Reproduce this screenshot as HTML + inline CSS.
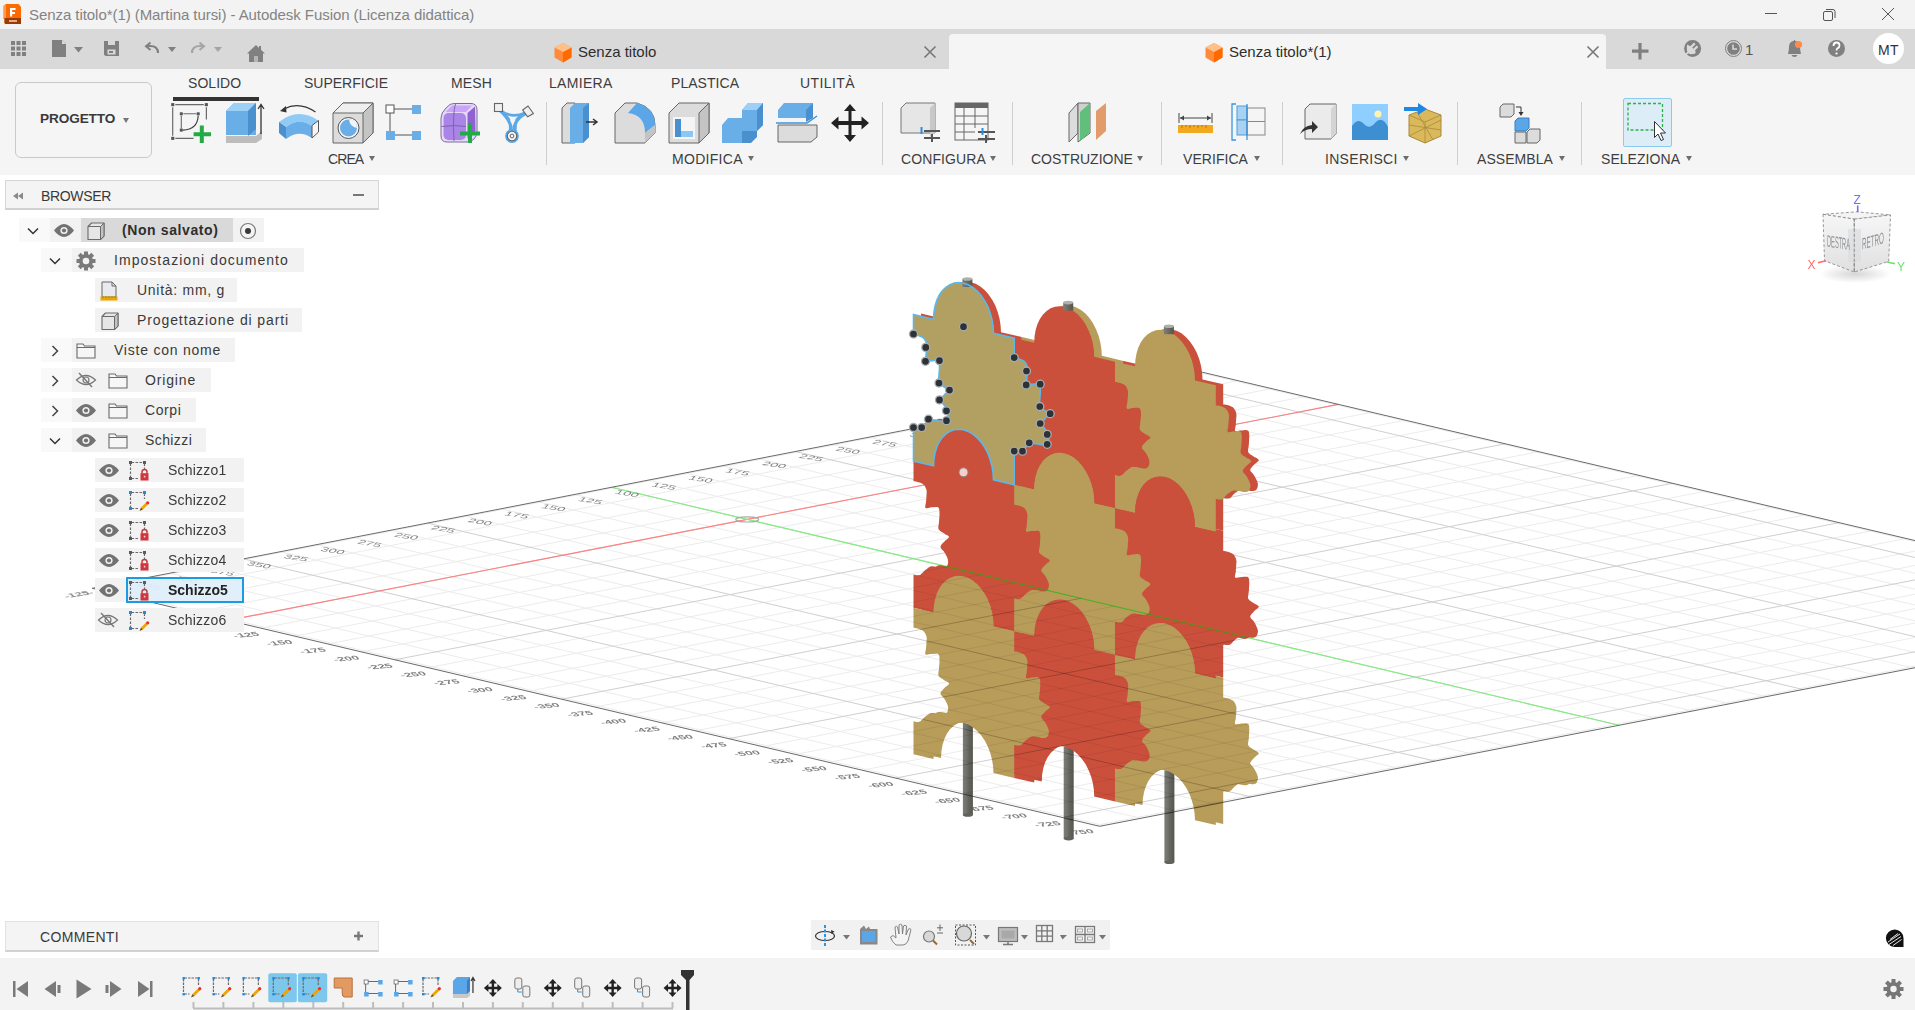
<!DOCTYPE html><html><head><meta charset="utf-8"><style>

*{box-sizing:border-box}
body{margin:0;width:1915px;height:1010px;overflow:hidden;position:relative;background:#fff;font-family:"Liberation Sans",sans-serif;color:#3c3c3c}
.a{position:absolute}
.t{position:absolute;white-space:nowrap;line-height:1}
svg{position:absolute;overflow:visible}
.lbl{position:absolute;white-space:nowrap;line-height:1;font-size:14px;color:#3d3d3d;letter-spacing:0.3px}
.tri{position:absolute;width:0;height:0;border-left:3.5px solid transparent;border-right:3.5px solid transparent;border-top:5px solid #6e6e6e}
.sep{position:absolute;width:1px;background:#cfcfcf;top:102px;height:63px}
.row{position:absolute;height:25px;background:rgba(238,238,238,0.75)}
.bt{position:absolute;white-space:nowrap;line-height:1;font-size:14px;color:#3a3a3a;letter-spacing:0.85px}

</style></head><body>
<svg style="left:0;top:0" width="1915" height="1010" viewBox="0 0 1915 1010">
<defs><clipPath id="vp"><rect x="0" y="175" width="1915" height="783"/></clipPath>
<clipPath id="below"><path d="M-1403.6 11.3L3634.2 1201.3L3634.2 1200L-1403.6 1200Z"/></clipPath>
<linearGradient id="post" x1="0" x2="1"><stop offset="0" stop-color="#7c7c76"/><stop offset="0.3" stop-color="#74746e"/><stop offset="0.55" stop-color="#66665f"/><stop offset="1" stop-color="#56564f"/></linearGradient>
</defs><g clip-path="url(#vp)">
<path d="M96.3 587.5L1103.9 825.5M133.1 580.3L1140.7 818.3M169.9 573.2L1177.5 811.2M206.7 566.0L1214.3 804.0M280.3 551.7L1287.9 789.7M317.1 544.6L1324.7 782.6M353.9 537.4L1361.5 775.4M390.7 530.2L1398.3 768.2M464.3 515.9L1471.9 753.9M501.1 508.8L1508.7 746.8M537.9 501.6L1545.5 739.6M574.7 494.5L1582.3 732.5M648.3 480.1L1655.9 718.1M685.1 473.0L1692.7 711.0M721.9 465.8L1729.5 703.8M758.7 458.7L1766.3 696.7M832.3 444.4L1839.9 682.4M869.1 437.2L1876.7 675.2M905.9 430.0L1913.5 668.0M942.7 422.9L1950.3 660.9M1016.3 408.6L2023.9 646.6M1053.1 401.4L2060.7 639.4M1089.9 394.3L2097.5 632.3M1126.7 387.1L2134.3 625.1M1200.3 372.8L2207.9 610.8M94.3 588.8L1204.8 372.9M127.7 596.7L1238.1 380.7M161.1 604.6L1271.5 388.6M194.5 612.5L1304.9 396.5M261.3 628.2L1371.7 412.3M294.6 636.1L1405.1 420.2M328.0 644.0L1438.5 428.1M361.4 651.9L1471.9 436.0M428.2 667.7L1538.7 451.7M461.6 675.6L1572.0 459.6M495.0 683.5L1605.4 467.5M528.4 691.3L1638.8 475.4M595.2 707.1L1705.6 491.2M628.5 715.0L1739.0 499.1M661.9 722.9L1772.4 506.9M695.3 730.8L1805.8 514.8M762.1 746.6L1872.6 530.6M795.5 754.4L1906.0 538.5M828.9 762.3L1939.3 546.4M862.3 770.2L1972.7 554.3M929.1 786.0L2039.5 570.0M962.5 793.9L2072.9 577.9M995.8 801.8L2106.3 585.8M1029.2 809.7L2139.7 593.7M1096.0 825.4L2206.5 609.5" stroke="#ececec" stroke-width="1" fill="none"/><path d="M243.5 558.9L1251.1 796.9M427.5 523.1L1435.1 761.1M611.5 487.3L1619.1 725.3M795.5 451.5L1803.1 689.5M979.5 415.7L1987.1 653.7M1163.5 380.0L2171.1 618.0M227.9 620.4L1338.3 404.4M394.8 659.8L1505.3 443.8M561.8 699.2L1672.2 483.3M728.7 738.7L1839.2 522.7M895.7 778.1L2006.1 562.2M1062.6 817.5L2173.1 601.6" stroke="#cfcfcf" stroke-width="1" fill="none"/>
<path d="M227.9 620.4L1338.3 404.4" stroke="#ff8080" stroke-width="1.1"/>
<path d="M611.5 487.3L1619.1 725.3" stroke="#80ee80" stroke-width="1.1"/>
<ellipse cx="747.2" cy="519.4" rx="11.5" ry="2.6" fill="none" stroke="#aaaaaa" stroke-width="1.2"/>
<path d="M92.2 588.3L1202.6 372.3L2210.2 610.3L1099.7 826.3Z" stroke="#6a6a6a" stroke-width="1" fill="none"/>
<g opacity="0.75"><text transform="matrix(1 0.16 -0.55 0.6 135.6 586.5)" font-size="9" fill="#555" font-family="Liberation Sans" textLength="23" lengthAdjust="spacingAndGlyphs">425</text><text transform="matrix(1 0.16 -0.55 0.6 172.4 579.4)" font-size="9" fill="#555" font-family="Liberation Sans" textLength="23" lengthAdjust="spacingAndGlyphs">400</text><text transform="matrix(1 0.16 -0.55 0.6 209.2 572.2)" font-size="9" fill="#555" font-family="Liberation Sans" textLength="23" lengthAdjust="spacingAndGlyphs">375</text><text transform="matrix(1 0.16 -0.55 0.6 246.0 565.1)" font-size="9" fill="#555" font-family="Liberation Sans" textLength="23" lengthAdjust="spacingAndGlyphs">350</text><text transform="matrix(1 0.16 -0.55 0.6 282.8 557.9)" font-size="9" fill="#555" font-family="Liberation Sans" textLength="23" lengthAdjust="spacingAndGlyphs">325</text><text transform="matrix(1 0.16 -0.55 0.6 319.6 550.8)" font-size="9" fill="#555" font-family="Liberation Sans" textLength="23" lengthAdjust="spacingAndGlyphs">300</text><text transform="matrix(1 0.16 -0.55 0.6 356.4 543.6)" font-size="9" fill="#555" font-family="Liberation Sans" textLength="23" lengthAdjust="spacingAndGlyphs">275</text><text transform="matrix(1 0.16 -0.55 0.6 393.2 536.4)" font-size="9" fill="#555" font-family="Liberation Sans" textLength="23" lengthAdjust="spacingAndGlyphs">250</text><text transform="matrix(1 0.16 -0.55 0.6 430.0 529.3)" font-size="9" fill="#555" font-family="Liberation Sans" textLength="23" lengthAdjust="spacingAndGlyphs">225</text><text transform="matrix(1 0.16 -0.55 0.6 466.8 522.1)" font-size="9" fill="#555" font-family="Liberation Sans" textLength="23" lengthAdjust="spacingAndGlyphs">200</text><text transform="matrix(1 0.16 -0.55 0.6 503.6 515.0)" font-size="9" fill="#555" font-family="Liberation Sans" textLength="23" lengthAdjust="spacingAndGlyphs">175</text><text transform="matrix(1 0.16 -0.55 0.6 540.4 507.8)" font-size="9" fill="#555" font-family="Liberation Sans" textLength="23" lengthAdjust="spacingAndGlyphs">150</text><text transform="matrix(1 0.16 -0.55 0.6 577.2 500.7)" font-size="9" fill="#555" font-family="Liberation Sans" textLength="23" lengthAdjust="spacingAndGlyphs">125</text><text transform="matrix(1 0.16 -0.55 0.6 614.0 493.5)" font-size="9" fill="#555" font-family="Liberation Sans" textLength="23" lengthAdjust="spacingAndGlyphs">100</text><text transform="matrix(1 0.16 -0.55 0.6 650.8 486.3)" font-size="9" fill="#555" font-family="Liberation Sans" textLength="23" lengthAdjust="spacingAndGlyphs">125</text><text transform="matrix(1 0.16 -0.55 0.6 687.6 479.2)" font-size="9" fill="#555" font-family="Liberation Sans" textLength="23" lengthAdjust="spacingAndGlyphs">150</text><text transform="matrix(1 0.16 -0.55 0.6 724.4 472.0)" font-size="9" fill="#555" font-family="Liberation Sans" textLength="23" lengthAdjust="spacingAndGlyphs">175</text><text transform="matrix(1 0.16 -0.55 0.6 761.2 464.9)" font-size="9" fill="#555" font-family="Liberation Sans" textLength="23" lengthAdjust="spacingAndGlyphs">200</text><text transform="matrix(1 0.16 -0.55 0.6 798.0 457.7)" font-size="9" fill="#555" font-family="Liberation Sans" textLength="23" lengthAdjust="spacingAndGlyphs">225</text><text transform="matrix(1 0.16 -0.55 0.6 834.8 450.6)" font-size="9" fill="#555" font-family="Liberation Sans" textLength="23" lengthAdjust="spacingAndGlyphs">250</text><text transform="matrix(1 0.16 -0.55 0.6 871.6 443.4)" font-size="9" fill="#555" font-family="Liberation Sans" textLength="23" lengthAdjust="spacingAndGlyphs">275</text><text transform="matrix(1 0.16 -0.55 0.6 908.4 436.2)" font-size="9" fill="#555" font-family="Liberation Sans" textLength="23" lengthAdjust="spacingAndGlyphs">300</text><text transform="matrix(1 0.16 -0.55 0.6 945.2 429.1)" font-size="9" fill="#555" font-family="Liberation Sans" textLength="23" lengthAdjust="spacingAndGlyphs">325</text><text transform="matrix(1 0.16 -0.55 0.6 982.0 421.9)" font-size="9" fill="#555" font-family="Liberation Sans" textLength="23" lengthAdjust="spacingAndGlyphs">350</text><text transform="matrix(1 0.16 -0.55 0.6 1018.8 414.8)" font-size="9" fill="#555" font-family="Liberation Sans" textLength="23" lengthAdjust="spacingAndGlyphs">375</text><text transform="matrix(1 0.16 -0.55 0.6 1055.6 407.6)" font-size="9" fill="#555" font-family="Liberation Sans" textLength="23" lengthAdjust="spacingAndGlyphs">400</text><text transform="matrix(1 0.16 -0.55 0.6 1092.4 400.5)" font-size="9" fill="#555" font-family="Liberation Sans" textLength="23" lengthAdjust="spacingAndGlyphs">425</text><text transform="matrix(1 0.16 -0.55 0.6 1129.2 393.3)" font-size="9" fill="#555" font-family="Liberation Sans" textLength="23" lengthAdjust="spacingAndGlyphs">450</text><text transform="matrix(1 -0.09 0.6 0.62 160.1 612.1)" text-anchor="end" font-size="9" fill="#555" font-family="Liberation Sans" font-weight="700" textLength="25" lengthAdjust="spacingAndGlyphs">-150</text><text transform="matrix(1 -0.09 0.6 0.62 193.5 620.0)" text-anchor="end" font-size="9" fill="#555" font-family="Liberation Sans" font-weight="700" textLength="25" lengthAdjust="spacingAndGlyphs">-125</text><text transform="matrix(1 -0.09 0.6 0.62 226.9 627.9)" text-anchor="end" font-size="9" fill="#555" font-family="Liberation Sans" font-weight="700" textLength="25" lengthAdjust="spacingAndGlyphs">-100</text><text transform="matrix(1 -0.09 0.6 0.62 260.3 635.7)" text-anchor="end" font-size="9" fill="#555" font-family="Liberation Sans" font-weight="700" textLength="25" lengthAdjust="spacingAndGlyphs">-125</text><text transform="matrix(1 -0.09 0.6 0.62 293.6 643.6)" text-anchor="end" font-size="9" fill="#555" font-family="Liberation Sans" font-weight="700" textLength="25" lengthAdjust="spacingAndGlyphs">-150</text><text transform="matrix(1 -0.09 0.6 0.62 327.0 651.5)" text-anchor="end" font-size="9" fill="#555" font-family="Liberation Sans" font-weight="700" textLength="25" lengthAdjust="spacingAndGlyphs">-175</text><text transform="matrix(1 -0.09 0.6 0.62 360.4 659.4)" text-anchor="end" font-size="9" fill="#555" font-family="Liberation Sans" font-weight="700" textLength="25" lengthAdjust="spacingAndGlyphs">-200</text><text transform="matrix(1 -0.09 0.6 0.62 393.8 667.3)" text-anchor="end" font-size="9" fill="#555" font-family="Liberation Sans" font-weight="700" textLength="25" lengthAdjust="spacingAndGlyphs">-225</text><text transform="matrix(1 -0.09 0.6 0.62 427.2 675.2)" text-anchor="end" font-size="9" fill="#555" font-family="Liberation Sans" font-weight="700" textLength="25" lengthAdjust="spacingAndGlyphs">-250</text><text transform="matrix(1 -0.09 0.6 0.62 460.6 683.1)" text-anchor="end" font-size="9" fill="#555" font-family="Liberation Sans" font-weight="700" textLength="25" lengthAdjust="spacingAndGlyphs">-275</text><text transform="matrix(1 -0.09 0.6 0.62 494.0 691.0)" text-anchor="end" font-size="9" fill="#555" font-family="Liberation Sans" font-weight="700" textLength="25" lengthAdjust="spacingAndGlyphs">-300</text><text transform="matrix(1 -0.09 0.6 0.62 527.4 698.8)" text-anchor="end" font-size="9" fill="#555" font-family="Liberation Sans" font-weight="700" textLength="25" lengthAdjust="spacingAndGlyphs">-325</text><text transform="matrix(1 -0.09 0.6 0.62 560.8 706.7)" text-anchor="end" font-size="9" fill="#555" font-family="Liberation Sans" font-weight="700" textLength="25" lengthAdjust="spacingAndGlyphs">-350</text><text transform="matrix(1 -0.09 0.6 0.62 594.2 714.6)" text-anchor="end" font-size="9" fill="#555" font-family="Liberation Sans" font-weight="700" textLength="25" lengthAdjust="spacingAndGlyphs">-375</text><text transform="matrix(1 -0.09 0.6 0.62 627.5 722.5)" text-anchor="end" font-size="9" fill="#555" font-family="Liberation Sans" font-weight="700" textLength="25" lengthAdjust="spacingAndGlyphs">-400</text><text transform="matrix(1 -0.09 0.6 0.62 660.9 730.4)" text-anchor="end" font-size="9" fill="#555" font-family="Liberation Sans" font-weight="700" textLength="25" lengthAdjust="spacingAndGlyphs">-425</text><text transform="matrix(1 -0.09 0.6 0.62 694.3 738.3)" text-anchor="end" font-size="9" fill="#555" font-family="Liberation Sans" font-weight="700" textLength="25" lengthAdjust="spacingAndGlyphs">-450</text><text transform="matrix(1 -0.09 0.6 0.62 727.7 746.2)" text-anchor="end" font-size="9" fill="#555" font-family="Liberation Sans" font-weight="700" textLength="25" lengthAdjust="spacingAndGlyphs">-475</text><text transform="matrix(1 -0.09 0.6 0.62 761.1 754.1)" text-anchor="end" font-size="9" fill="#555" font-family="Liberation Sans" font-weight="700" textLength="25" lengthAdjust="spacingAndGlyphs">-500</text><text transform="matrix(1 -0.09 0.6 0.62 794.5 761.9)" text-anchor="end" font-size="9" fill="#555" font-family="Liberation Sans" font-weight="700" textLength="25" lengthAdjust="spacingAndGlyphs">-525</text><text transform="matrix(1 -0.09 0.6 0.62 827.9 769.8)" text-anchor="end" font-size="9" fill="#555" font-family="Liberation Sans" font-weight="700" textLength="25" lengthAdjust="spacingAndGlyphs">-550</text><text transform="matrix(1 -0.09 0.6 0.62 861.3 777.7)" text-anchor="end" font-size="9" fill="#555" font-family="Liberation Sans" font-weight="700" textLength="25" lengthAdjust="spacingAndGlyphs">-575</text><text transform="matrix(1 -0.09 0.6 0.62 894.7 785.6)" text-anchor="end" font-size="9" fill="#555" font-family="Liberation Sans" font-weight="700" textLength="25" lengthAdjust="spacingAndGlyphs">-600</text><text transform="matrix(1 -0.09 0.6 0.62 928.1 793.5)" text-anchor="end" font-size="9" fill="#555" font-family="Liberation Sans" font-weight="700" textLength="25" lengthAdjust="spacingAndGlyphs">-625</text><text transform="matrix(1 -0.09 0.6 0.62 961.5 801.4)" text-anchor="end" font-size="9" fill="#555" font-family="Liberation Sans" font-weight="700" textLength="25" lengthAdjust="spacingAndGlyphs">-650</text><text transform="matrix(1 -0.09 0.6 0.62 994.8 809.3)" text-anchor="end" font-size="9" fill="#555" font-family="Liberation Sans" font-weight="700" textLength="25" lengthAdjust="spacingAndGlyphs">-675</text><text transform="matrix(1 -0.09 0.6 0.62 1028.2 817.2)" text-anchor="end" font-size="9" fill="#555" font-family="Liberation Sans" font-weight="700" textLength="25" lengthAdjust="spacingAndGlyphs">-700</text><text transform="matrix(1 -0.09 0.6 0.62 1061.6 825.0)" text-anchor="end" font-size="9" fill="#555" font-family="Liberation Sans" font-weight="700" textLength="25" lengthAdjust="spacingAndGlyphs">-725</text><text transform="matrix(1 -0.09 0.6 0.62 1095.0 832.9)" text-anchor="end" font-size="9" fill="#555" font-family="Liberation Sans" font-weight="700" textLength="25" lengthAdjust="spacingAndGlyphs">-750</text><text transform="matrix(1 -0.16 0.55 0.6 94 593.5)" text-anchor="end" font-size="9" fill="#555" font-family="Liberation Sans" font-weight="700" textLength="28" lengthAdjust="spacingAndGlyphs">-125-</text></g>
<rect x="962.9" y="723.0" width="10" height="92" fill="url(#post)"/><ellipse cx="967.9" cy="815.0" rx="5" ry="1.8" fill="#62625c"/>
<rect x="1063.7" y="746.6" width="10" height="92" fill="url(#post)"/><ellipse cx="1068.7" cy="838.6" rx="5" ry="1.8" fill="#62625c"/>
<rect x="1164.4" y="770.2" width="10" height="92" fill="url(#post)"/><ellipse cx="1169.4" cy="862.2" rx="5" ry="1.8" fill="#62625c"/>
<path d="M921.0 313.5L941.0 318.2L941.4 311.5L942.5 305.2L944.3 299.4L946.7 294.2L949.8 289.8L953.4 286.3L957.4 283.7L961.7 282.1L966.3 281.6L971.0 282.2L975.7 283.8L980.3 286.5L984.6 290.1L988.6 294.5L992.2 299.8L995.3 305.6L997.7 311.9L999.5 318.6L1000.6 325.4L1001.0 332.2L1021.8 337.1L1021.8 357.1L1022.4 357.2L1023.4 357.4L1024.5 357.6L1025.6 357.9L1026.8 358.2L1027.8 358.5L1028.6 358.8L1029.4 359.2L1030.2 359.5L1031.0 360.0L1031.6 360.4L1032.2 361.0L1032.8 361.7L1033.3 362.5L1033.8 363.4L1034.2 364.3L1034.5 365.2L1034.8 366.1L1034.9 366.9L1035.0 367.7L1034.9 368.5L1034.9 369.3L1034.8 370.2L1034.8 371.1L1034.7 372.2L1034.6 373.3L1034.5 374.5L1034.4 375.7L1034.3 376.9L1034.2 378.0L1034.1 379.1L1033.8 380.3L1033.6 381.4L1033.4 382.4L1033.5 383.3L1033.8 383.9L1034.4 384.2L1035.2 384.1L1036.3 384.0L1037.5 383.7L1038.6 383.4L1039.8 383.3L1040.9 383.2L1042.1 383.1L1043.3 383.0L1044.4 382.9L1045.5 383.0L1046.2 383.3L1046.8 383.8L1047.2 384.4L1047.4 385.1L1047.6 386.0L1047.7 387.0L1047.8 388.2L1047.8 389.6L1047.7 391.2L1047.6 393.0L1047.5 394.8L1047.4 396.5L1047.2 398.0L1047.1 399.4L1046.9 400.7L1046.7 401.8L1046.5 402.9L1046.5 404.0L1046.8 404.9L1047.3 405.8L1048.0 406.5L1048.9 407.2L1049.8 407.8L1050.8 408.5L1051.8 409.1L1052.8 409.7L1053.9 410.4L1055.1 411.0L1056.1 411.6L1056.9 412.2L1057.2 412.9L1057.1 413.6L1056.5 414.3L1055.6 415.0L1054.6 415.7L1053.6 416.5L1052.8 417.3L1052.0 418.2L1051.1 419.1L1050.2 420.0L1049.5 421.0L1048.9 422.0L1048.8 422.9L1049.0 423.8L1049.5 424.6L1050.3 425.5L1051.2 426.3L1052.0 427.3L1052.8 428.3L1053.4 429.5L1054.1 430.8L1054.8 432.2L1055.4 433.6L1055.9 434.9L1056.2 436.1L1056.4 437.3L1056.4 438.4L1056.2 439.4L1056.0 440.3L1055.6 441.2L1055.2 441.9L1054.8 442.5L1054.3 443.0L1053.7 443.4L1053.0 443.7L1052.2 443.9L1051.2 444.0L1050.2 443.9L1048.9 443.8L1047.6 443.5L1046.2 443.2L1044.9 442.9L1043.8 442.7L1042.8 442.6L1041.9 442.4L1041.2 442.3L1040.4 442.3L1039.6 442.3L1038.8 442.6L1037.8 443.0L1036.8 443.6L1035.7 444.3L1034.6 445.1L1033.6 445.9L1032.8 446.6L1032.0 447.4L1031.3 448.1L1030.6 448.9L1030.0 449.6L1029.4 450.2L1028.8 450.7L1028.1 451.0L1027.4 451.2L1026.7 451.3L1026.0 451.3L1025.4 451.3L1024.8 451.3L1024.2 451.2L1023.6 451.1L1023.0 451.0L1022.5 450.8L1022.1 450.7L1021.8 450.6L1021.8 483.7L1001.0 478.8L1000.6 472.0L999.5 465.2L997.7 458.5L995.3 452.2L992.2 446.4L988.6 441.1L984.6 436.7L980.3 433.1L975.7 430.4L971.0 428.8L966.3 428.2L961.7 428.7L957.4 430.3L953.4 432.9L949.8 436.4L946.7 440.8L944.3 446.0L942.5 451.8L941.4 458.1L941.0 464.8L921.0 460.1L921.0 427.0L921.3 427.1L921.7 427.2L922.2 427.4L922.8 427.5L923.4 427.7L924.0 427.7L924.6 427.7L925.3 427.7L925.9 427.7L926.6 427.6L927.3 427.4L928.0 427.1L928.6 426.7L929.3 426.0L929.9 425.3L930.5 424.6L931.2 423.8L932.0 423.1L932.9 422.3L933.9 421.6L934.9 420.8L936.0 420.0L937.0 419.4L938.0 419.0L938.9 418.7L939.6 418.7L940.4 418.7L941.2 418.9L942.0 419.0L943.0 419.1L944.1 419.3L945.4 419.6L946.8 419.9L948.2 420.2L949.4 420.4L950.5 420.4L951.4 420.3L952.2 420.1L952.9 419.8L953.5 419.4L954.0 418.9L954.5 418.3L954.9 417.6L955.2 416.8L955.5 415.8L955.6 414.8L955.6 413.7L955.5 412.6L955.2 411.4L954.7 410.0L954.1 408.6L953.4 407.3L952.7 405.9L952.0 404.8L951.3 403.7L950.4 402.8L949.5 401.9L948.8 401.1L948.2 400.2L948.0 399.3L948.2 398.4L948.7 397.4L949.5 396.5L950.3 395.5L951.2 394.6L952.0 393.8L952.8 392.9L953.8 392.2L954.8 391.4L955.7 390.7L956.3 390.0L956.5 389.3L956.2 388.6L955.4 388.0L954.3 387.4L953.2 386.8L952.0 386.2L951.0 385.5L950.1 384.9L949.1 384.3L948.1 383.6L947.2 383.0L946.5 382.2L946.0 381.4L945.8 380.4L945.8 379.4L945.9 378.3L946.1 377.1L946.4 375.8L946.5 374.5L946.6 372.9L946.7 371.2L946.9 369.4L947.0 367.6L947.0 366.0L947.0 364.6L946.9 363.4L946.8 362.4L946.7 361.5L946.4 360.8L946.1 360.2L945.5 359.7L944.7 359.4L943.7 359.3L942.5 359.4L941.3 359.5L940.1 359.6L939.0 359.7L937.9 359.9L936.7 360.1L935.6 360.4L934.5 360.6L933.6 360.6L933.0 360.3L932.7 359.7L932.7 358.9L932.8 357.8L933.1 356.7L933.3 355.5L933.5 354.4L933.6 353.3L933.7 352.1L933.8 350.9L933.9 349.7L933.9 348.6L934.0 347.5L934.1 346.6L934.1 345.7L934.2 344.9L934.2 344.1L934.2 343.4L934.0 342.5L933.8 341.7L933.4 340.8L933.0 339.8L932.6 339.0L932.1 338.2L931.5 337.5L930.9 336.9L930.2 336.4L929.5 336.0L928.7 335.6L927.9 335.2L927.0 334.9L926.0 334.6L924.9 334.3L923.7 334.0L922.6 333.8L921.7 333.6L921.0 333.5L921.0 313.5Z" fill="#cb503c"/>
<path d="M921.0 460.1L941.0 464.8L941.4 458.1L942.5 451.8L944.3 446.0L946.7 440.8L949.8 436.4L953.4 432.9L957.4 430.3L961.7 428.7L966.3 428.2L971.0 428.8L975.7 430.4L980.3 433.1L984.6 436.7L988.6 441.1L992.2 446.4L995.3 452.2L997.7 458.5L999.5 465.2L1000.6 472.0L1001.0 478.8L1021.8 483.7L1021.8 503.7L1022.4 503.8L1023.4 504.0L1024.5 504.2L1025.6 504.5L1026.8 504.8L1027.8 505.1L1028.6 505.4L1029.4 505.8L1030.2 506.1L1031.0 506.6L1031.6 507.0L1032.2 507.6L1032.8 508.3L1033.3 509.1L1033.8 510.0L1034.2 510.9L1034.5 511.8L1034.8 512.7L1034.9 513.5L1035.0 514.3L1034.9 515.1L1034.9 515.9L1034.8 516.8L1034.8 517.7L1034.7 518.8L1034.6 519.9L1034.5 521.1L1034.4 522.3L1034.3 523.5L1034.2 524.6L1034.1 525.7L1033.8 526.9L1033.6 528.0L1033.4 529.0L1033.5 529.9L1033.8 530.5L1034.4 530.8L1035.2 530.7L1036.3 530.6L1037.5 530.3L1038.6 530.0L1039.8 529.9L1040.9 529.8L1042.1 529.7L1043.3 529.6L1044.4 529.5L1045.5 529.6L1046.2 529.9L1046.8 530.4L1047.2 531.0L1047.4 531.7L1047.6 532.6L1047.7 533.6L1047.8 534.8L1047.8 536.2L1047.7 537.8L1047.6 539.6L1047.5 541.4L1047.4 543.1L1047.2 544.6L1047.1 546.0L1046.9 547.3L1046.7 548.4L1046.5 549.5L1046.5 550.6L1046.8 551.5L1047.3 552.4L1048.0 553.1L1048.9 553.8L1049.8 554.4L1050.8 555.1L1051.8 555.7L1052.8 556.3L1053.9 557.0L1055.1 557.6L1056.1 558.2L1056.9 558.8L1057.2 559.5L1057.1 560.2L1056.5 560.9L1055.6 561.6L1054.6 562.3L1053.6 563.1L1052.8 563.9L1052.0 564.8L1051.1 565.7L1050.2 566.6L1049.5 567.6L1048.9 568.6L1048.8 569.5L1049.0 570.4L1049.5 571.2L1050.3 572.1L1051.2 572.9L1052.0 573.9L1052.8 574.9L1053.4 576.1L1054.1 577.4L1054.8 578.8L1055.4 580.2L1055.9 581.5L1056.2 582.7L1056.4 583.9L1056.4 585.0L1056.2 586.0L1056.0 586.9L1055.6 587.8L1055.2 588.5L1054.8 589.1L1054.3 589.6L1053.7 590.0L1053.0 590.3L1052.2 590.5L1051.2 590.6L1050.2 590.5L1048.9 590.4L1047.6 590.1L1046.2 589.8L1044.9 589.5L1043.8 589.3L1042.8 589.2L1041.9 589.0L1041.2 588.9L1040.4 588.9L1039.6 588.9L1038.8 589.2L1037.8 589.6L1036.8 590.2L1035.7 590.9L1034.6 591.7L1033.6 592.5L1032.8 593.2L1032.0 594.0L1031.3 594.7L1030.6 595.5L1030.0 596.2L1029.4 596.8L1028.8 597.3L1028.1 597.6L1027.4 597.8L1026.7 597.9L1026.0 597.9L1025.4 597.9L1024.8 597.9L1024.2 597.8L1023.6 597.7L1023.0 597.6L1022.5 597.4L1022.1 597.3L1021.8 597.2L1021.8 630.3L1001.0 625.4L1000.6 618.6L999.5 611.8L997.7 605.1L995.3 598.8L992.2 593.0L988.6 587.7L984.6 583.3L980.3 579.7L975.7 577.0L971.0 575.4L966.3 574.8L961.7 575.3L957.4 576.9L953.4 579.5L949.8 583.0L946.7 587.4L944.3 592.6L942.5 598.4L941.4 604.7L941.0 611.4L921.0 606.7L921.0 573.6L921.3 573.7L921.7 573.8L922.2 574.0L922.8 574.1L923.4 574.3L924.0 574.3L924.6 574.3L925.3 574.3L925.9 574.3L926.6 574.2L927.3 574.0L928.0 573.7L928.6 573.3L929.3 572.6L929.9 571.9L930.5 571.2L931.2 570.4L932.0 569.7L932.9 568.9L933.9 568.2L934.9 567.4L936.0 566.6L937.0 566.0L938.0 565.6L938.9 565.3L939.6 565.3L940.4 565.3L941.2 565.5L942.0 565.6L943.0 565.7L944.1 565.9L945.4 566.2L946.8 566.5L948.2 566.8L949.4 567.0L950.5 567.0L951.4 566.9L952.2 566.7L952.9 566.4L953.5 566.0L954.0 565.5L954.5 564.9L954.9 564.2L955.2 563.4L955.5 562.4L955.6 561.4L955.6 560.3L955.5 559.2L955.2 558.0L954.7 556.6L954.1 555.2L953.4 553.9L952.7 552.5L952.0 551.4L951.3 550.3L950.4 549.4L949.5 548.5L948.8 547.7L948.2 546.8L948.0 545.9L948.2 545.0L948.7 544.0L949.5 543.1L950.3 542.1L951.2 541.2L952.0 540.4L952.8 539.5L953.8 538.8L954.8 538.0L955.7 537.3L956.3 536.6L956.5 535.9L956.2 535.2L955.4 534.6L954.3 534.0L953.2 533.4L952.0 532.8L951.0 532.1L950.1 531.5L949.1 530.9L948.1 530.2L947.2 529.6L946.5 528.8L946.0 528.0L945.8 527.0L945.8 526.0L945.9 524.9L946.1 523.7L946.4 522.4L946.5 521.1L946.6 519.5L946.7 517.8L946.9 516.0L947.0 514.2L947.0 512.6L947.0 511.2L946.9 510.0L946.8 509.0L946.7 508.1L946.4 507.4L946.1 506.8L945.5 506.3L944.7 506.0L943.7 505.9L942.5 506.0L941.3 506.1L940.1 506.2L939.0 506.3L937.9 506.5L936.7 506.7L935.6 507.0L934.5 507.2L933.6 507.2L933.0 506.9L932.7 506.3L932.7 505.5L932.8 504.4L933.1 503.3L933.3 502.1L933.5 501.0L933.6 499.9L933.7 498.7L933.8 497.5L933.9 496.3L933.9 495.2L934.0 494.1L934.1 493.2L934.1 492.3L934.2 491.5L934.2 490.7L934.2 490.0L934.0 489.1L933.8 488.3L933.4 487.4L933.0 486.4L932.6 485.6L932.1 484.8L931.5 484.1L930.9 483.5L930.2 483.0L929.5 482.6L928.7 482.2L927.9 481.8L927.0 481.5L926.0 481.2L924.9 480.9L923.7 480.6L922.6 480.4L921.7 480.2L921.0 480.1L921.0 460.1Z" fill="#cb503c"/>
<path d="M921.0 606.7L941.0 611.4L941.4 604.7L942.5 598.4L944.3 592.6L946.7 587.4L949.8 583.0L953.4 579.5L957.4 576.9L961.7 575.3L966.3 574.8L971.0 575.4L975.7 577.0L980.3 579.7L984.6 583.3L988.6 587.7L992.2 593.0L995.3 598.8L997.7 605.1L999.5 611.8L1000.6 618.6L1001.0 625.4L1021.8 630.3L1021.8 650.3L1022.4 650.4L1023.4 650.6L1024.5 650.8L1025.6 651.1L1026.8 651.4L1027.8 651.7L1028.6 652.0L1029.4 652.4L1030.2 652.7L1031.0 653.2L1031.6 653.6L1032.2 654.2L1032.8 654.9L1033.3 655.7L1033.8 656.6L1034.2 657.5L1034.5 658.4L1034.8 659.3L1034.9 660.1L1035.0 660.9L1034.9 661.7L1034.9 662.5L1034.8 663.4L1034.8 664.3L1034.7 665.4L1034.6 666.5L1034.5 667.7L1034.4 668.9L1034.3 670.1L1034.2 671.2L1034.1 672.3L1033.8 673.5L1033.6 674.6L1033.4 675.6L1033.5 676.5L1033.8 677.1L1034.4 677.4L1035.2 677.3L1036.3 677.2L1037.5 676.9L1038.6 676.6L1039.8 676.5L1040.9 676.4L1042.1 676.3L1043.3 676.2L1044.4 676.1L1045.5 676.2L1046.2 676.5L1046.8 677.0L1047.2 677.6L1047.4 678.3L1047.6 679.2L1047.7 680.2L1047.8 681.4L1047.8 682.8L1047.7 684.4L1047.6 686.2L1047.5 688.0L1047.4 689.7L1047.2 691.2L1047.1 692.6L1046.9 693.9L1046.7 695.0L1046.5 696.1L1046.5 697.2L1046.8 698.1L1047.3 699.0L1048.0 699.7L1048.9 700.4L1049.8 701.0L1050.8 701.7L1051.8 702.3L1052.8 702.9L1053.9 703.6L1055.1 704.2L1056.1 704.8L1056.9 705.4L1057.2 706.1L1057.1 706.8L1056.5 707.5L1055.6 708.2L1054.6 708.9L1053.6 709.7L1052.8 710.5L1052.0 711.4L1051.1 712.3L1050.2 713.2L1049.5 714.2L1048.9 715.2L1048.8 716.1L1049.0 717.0L1049.5 717.8L1050.3 718.7L1051.2 719.5L1052.0 720.5L1052.8 721.5L1053.4 722.7L1054.1 724.0L1054.8 725.4L1055.4 726.8L1055.9 728.1L1056.2 729.3L1056.4 730.5L1056.4 731.6L1056.2 732.6L1056.0 733.5L1055.6 734.4L1055.2 735.1L1054.8 735.7L1054.3 736.2L1053.7 736.6L1053.0 736.9L1052.2 737.1L1051.2 737.2L1050.2 737.1L1048.9 737.0L1047.6 736.7L1046.2 736.4L1044.9 736.1L1043.8 735.9L1042.8 735.8L1041.9 735.6L1041.2 735.5L1040.4 735.5L1039.6 735.5L1038.8 735.8L1037.8 736.2L1036.8 736.8L1035.7 737.5L1034.6 738.3L1033.6 739.1L1032.8 739.8L1032.0 740.6L1031.3 741.3L1030.6 742.1L1030.0 742.8L1029.4 743.4L1028.8 743.9L1028.1 744.2L1027.4 744.4L1026.7 744.5L1026.0 744.5L1025.4 744.5L1024.8 744.5L1024.2 744.4L1023.6 744.3L1023.0 744.2L1022.5 744.0L1022.1 743.9L1021.8 743.8L1021.8 776.9L1001.0 772.0L1000.6 765.2L999.5 758.4L997.7 751.7L995.3 745.4L992.2 739.6L988.6 734.3L984.6 729.9L980.3 726.3L975.7 723.6L971.0 722.0L966.3 721.4L961.7 721.9L957.4 723.5L953.4 726.1L949.8 729.6L946.7 734.0L944.3 739.2L942.5 745.0L941.4 751.3L941.0 758.0L921.0 753.3L921.0 720.2L921.3 720.3L921.7 720.4L922.2 720.6L922.8 720.7L923.4 720.9L924.0 720.9L924.6 720.9L925.3 720.9L925.9 720.9L926.6 720.8L927.3 720.6L928.0 720.3L928.6 719.9L929.3 719.2L929.9 718.5L930.5 717.8L931.2 717.0L932.0 716.3L932.9 715.5L933.9 714.8L934.9 714.0L936.0 713.2L937.0 712.6L938.0 712.2L938.9 711.9L939.6 711.9L940.4 711.9L941.2 712.1L942.0 712.2L943.0 712.3L944.1 712.5L945.4 712.8L946.8 713.1L948.2 713.4L949.4 713.6L950.5 713.6L951.4 713.5L952.2 713.3L952.9 713.0L953.5 712.6L954.0 712.1L954.5 711.5L954.9 710.8L955.2 710.0L955.5 709.0L955.6 708.0L955.6 706.9L955.5 705.8L955.2 704.6L954.7 703.2L954.1 701.8L953.4 700.5L952.7 699.1L952.0 698.0L951.3 696.9L950.4 696.0L949.5 695.1L948.8 694.3L948.2 693.4L948.0 692.5L948.2 691.6L948.7 690.6L949.5 689.7L950.3 688.7L951.2 687.8L952.0 687.0L952.8 686.1L953.8 685.4L954.8 684.6L955.7 683.9L956.3 683.2L956.5 682.5L956.2 681.8L955.4 681.2L954.3 680.6L953.2 680.0L952.0 679.4L951.0 678.7L950.1 678.1L949.1 677.5L948.1 676.8L947.2 676.2L946.5 675.4L946.0 674.5L945.8 673.6L945.8 672.6L945.9 671.5L946.1 670.3L946.4 669.0L946.5 667.7L946.6 666.1L946.7 664.4L946.9 662.6L947.0 660.8L947.0 659.2L947.0 657.8L946.9 656.6L946.8 655.6L946.7 654.7L946.4 654.0L946.1 653.4L945.5 652.9L944.7 652.6L943.7 652.5L942.5 652.6L941.3 652.7L940.1 652.8L939.0 652.9L937.9 653.1L936.7 653.3L935.6 653.6L934.5 653.8L933.6 653.8L933.0 653.5L932.7 652.9L932.7 652.1L932.8 651.0L933.1 649.9L933.3 648.7L933.5 647.6L933.6 646.5L933.7 645.3L933.8 644.1L933.9 642.9L933.9 641.8L934.0 640.7L934.1 639.8L934.1 638.9L934.2 638.1L934.2 637.3L934.2 636.6L934.0 635.7L933.8 634.9L933.4 634.0L933.0 633.0L932.6 632.2L932.1 631.4L931.5 630.7L930.9 630.1L930.2 629.6L929.5 629.2L928.7 628.8L927.9 628.4L927.0 628.1L926.0 627.8L924.9 627.5L923.7 627.2L922.6 627.0L921.7 626.8L921.0 626.7L921.0 606.7Z" fill="#b89c59"/>
<path d="M1021.8 337.1L1041.8 341.8L1042.1 335.1L1043.2 328.8L1045.0 323.0L1047.5 317.8L1050.5 313.4L1054.1 309.9L1058.1 307.3L1062.5 305.7L1067.1 305.2L1071.8 305.8L1076.4 307.4L1081.0 310.0L1085.4 313.6L1089.4 318.1L1093.0 323.3L1096.0 329.2L1098.5 335.5L1100.3 342.2L1101.4 349.0L1101.8 355.8L1122.5 360.7L1122.5 380.7L1123.2 380.8L1124.1 381.0L1125.2 381.2L1126.4 381.4L1127.5 381.7L1128.5 382.1L1129.4 382.4L1130.2 382.7L1131.0 383.1L1131.7 383.5L1132.4 384.0L1133.0 384.6L1133.6 385.3L1134.1 386.1L1134.5 387.0L1134.9 387.9L1135.3 388.8L1135.5 389.7L1135.7 390.5L1135.7 391.3L1135.7 392.1L1135.6 392.9L1135.6 393.8L1135.5 394.7L1135.4 395.7L1135.4 396.9L1135.3 398.1L1135.2 399.3L1135.1 400.5L1135.0 401.6L1134.8 402.7L1134.6 403.9L1134.3 405.0L1134.2 406.0L1134.2 406.9L1134.5 407.5L1135.1 407.7L1136.0 407.7L1137.1 407.5L1138.2 407.3L1139.4 407.0L1140.5 406.9L1141.6 406.8L1142.8 406.6L1144.0 406.5L1145.2 406.5L1146.2 406.6L1147.0 406.9L1147.6 407.4L1147.9 408.0L1148.2 408.7L1148.3 409.6L1148.4 410.6L1148.5 411.7L1148.5 413.1L1148.5 414.8L1148.4 416.5L1148.2 418.4L1148.1 420.1L1148.0 421.6L1147.9 423.0L1147.6 424.2L1147.4 425.4L1147.3 426.5L1147.3 427.5L1147.5 428.5L1148.0 429.4L1148.7 430.1L1149.6 430.8L1150.6 431.4L1151.6 432.0L1152.5 432.7L1153.5 433.3L1154.7 433.9L1155.8 434.5L1156.9 435.2L1157.7 435.8L1158.0 436.5L1157.8 437.1L1157.2 437.9L1156.3 438.6L1155.3 439.3L1154.3 440.1L1153.5 440.9L1152.7 441.8L1151.8 442.7L1151.0 443.6L1150.2 444.6L1149.7 445.5L1149.5 446.5L1149.7 447.4L1150.3 448.2L1151.0 449.0L1151.9 449.9L1152.8 450.9L1153.5 451.9L1154.2 453.1L1154.9 454.4L1155.6 455.8L1156.2 457.2L1156.7 458.5L1157.0 459.7L1157.1 460.8L1157.1 461.9L1157.0 463.0L1156.7 463.9L1156.4 464.8L1156.0 465.5L1155.5 466.1L1155.0 466.6L1154.4 467.0L1153.7 467.2L1152.9 467.4L1152.0 467.6L1150.9 467.5L1149.7 467.3L1148.3 467.1L1146.9 466.8L1145.6 466.5L1144.5 466.3L1143.5 466.2L1142.7 466.0L1141.9 465.9L1141.1 465.8L1140.4 465.9L1139.5 466.1L1138.5 466.6L1137.5 467.2L1136.4 467.9L1135.4 468.7L1134.4 469.5L1133.5 470.2L1132.7 470.9L1132.0 471.7L1131.4 472.5L1130.8 473.2L1130.1 473.8L1129.5 474.3L1128.8 474.6L1128.1 474.8L1127.4 474.9L1126.8 474.9L1126.1 474.9L1125.5 474.9L1124.9 474.8L1124.3 474.7L1123.8 474.5L1123.2 474.4L1122.8 474.2L1122.5 474.2L1122.5 507.3L1101.8 502.4L1101.4 495.6L1100.3 488.8L1098.5 482.1L1096.0 475.8L1093.0 469.9L1089.4 464.7L1085.4 460.2L1081.0 456.6L1076.4 454.0L1071.8 452.4L1067.1 451.8L1062.5 452.3L1058.1 453.9L1054.1 456.5L1050.5 460.0L1047.5 464.4L1045.0 469.6L1043.2 475.4L1042.1 481.7L1041.8 488.4L1021.8 483.7L1021.8 450.6L1022.1 450.7L1022.5 450.8L1023.0 451.0L1023.6 451.1L1024.2 451.2L1024.8 451.3L1025.4 451.3L1026.0 451.3L1026.7 451.3L1027.4 451.2L1028.1 451.0L1028.8 450.7L1029.4 450.2L1030.0 449.6L1030.6 448.9L1031.3 448.1L1032.0 447.4L1032.8 446.6L1033.6 445.9L1034.6 445.1L1035.7 444.3L1036.8 443.6L1037.8 443.0L1038.8 442.6L1039.6 442.3L1040.4 442.3L1041.2 442.3L1041.9 442.4L1042.8 442.6L1043.8 442.7L1044.9 442.9L1046.2 443.2L1047.6 443.5L1048.9 443.8L1050.2 443.9L1051.2 444.0L1052.2 443.9L1053.0 443.7L1053.7 443.4L1054.3 443.0L1054.8 442.5L1055.2 441.9L1055.6 441.2L1056.0 440.3L1056.2 439.4L1056.4 438.4L1056.4 437.3L1056.2 436.1L1055.9 434.9L1055.4 433.6L1054.8 432.2L1054.1 430.8L1053.4 429.5L1052.8 428.3L1052.0 427.3L1051.2 426.3L1050.3 425.5L1049.5 424.6L1049.0 423.8L1048.8 422.9L1048.9 422.0L1049.5 421.0L1050.2 420.0L1051.1 419.1L1052.0 418.2L1052.8 417.3L1053.6 416.5L1054.6 415.7L1055.6 415.0L1056.5 414.3L1057.1 413.6L1057.2 412.9L1056.9 412.2L1056.1 411.6L1055.1 411.0L1053.9 410.4L1052.8 409.7L1051.8 409.1L1050.8 408.5L1049.8 407.8L1048.9 407.2L1048.0 406.5L1047.3 405.8L1046.8 404.9L1046.5 404.0L1046.5 402.9L1046.7 401.8L1046.9 400.7L1047.1 399.4L1047.2 398.0L1047.4 396.5L1047.5 394.8L1047.6 393.0L1047.7 391.2L1047.8 389.6L1047.8 388.2L1047.7 387.0L1047.6 386.0L1047.4 385.1L1047.2 384.4L1046.8 383.8L1046.2 383.3L1045.5 383.0L1044.4 382.9L1043.3 383.0L1042.1 383.1L1040.9 383.2L1039.8 383.3L1038.6 383.4L1037.5 383.7L1036.3 384.0L1035.2 384.1L1034.4 384.2L1033.8 383.9L1033.5 383.3L1033.4 382.4L1033.6 381.4L1033.8 380.3L1034.1 379.1L1034.2 378.0L1034.3 376.9L1034.4 375.7L1034.5 374.5L1034.6 373.3L1034.7 372.2L1034.8 371.1L1034.8 370.2L1034.9 369.3L1034.9 368.5L1035.0 367.7L1034.9 366.9L1034.8 366.1L1034.5 365.2L1034.2 364.3L1033.8 363.4L1033.3 362.5L1032.8 361.7L1032.2 361.0L1031.6 360.4L1031.0 360.0L1030.2 359.5L1029.4 359.2L1028.6 358.8L1027.8 358.5L1026.8 358.2L1025.6 357.9L1024.5 357.6L1023.4 357.4L1022.4 357.2L1021.8 357.1L1021.8 337.1Z" fill="#b89c59"/>
<path d="M1021.8 483.7L1041.8 488.4L1042.1 481.7L1043.2 475.4L1045.0 469.6L1047.5 464.4L1050.5 460.0L1054.1 456.5L1058.1 453.9L1062.5 452.3L1067.1 451.8L1071.8 452.4L1076.4 454.0L1081.0 456.6L1085.4 460.2L1089.4 464.7L1093.0 469.9L1096.0 475.8L1098.5 482.1L1100.3 488.8L1101.4 495.6L1101.8 502.4L1122.5 507.3L1122.5 527.3L1123.2 527.4L1124.1 527.6L1125.2 527.8L1126.4 528.0L1127.5 528.3L1128.5 528.7L1129.4 529.0L1130.2 529.3L1131.0 529.7L1131.7 530.1L1132.4 530.6L1133.0 531.2L1133.6 531.9L1134.1 532.7L1134.5 533.6L1134.9 534.5L1135.3 535.4L1135.5 536.3L1135.7 537.1L1135.7 537.9L1135.7 538.7L1135.6 539.5L1135.6 540.4L1135.5 541.3L1135.4 542.3L1135.4 543.5L1135.3 544.7L1135.2 545.9L1135.1 547.1L1135.0 548.2L1134.8 549.3L1134.6 550.5L1134.3 551.6L1134.2 552.6L1134.2 553.5L1134.5 554.1L1135.1 554.3L1136.0 554.3L1137.1 554.1L1138.2 553.9L1139.4 553.6L1140.5 553.5L1141.6 553.4L1142.8 553.2L1144.0 553.1L1145.2 553.1L1146.2 553.2L1147.0 553.5L1147.6 554.0L1147.9 554.6L1148.2 555.3L1148.3 556.2L1148.4 557.2L1148.5 558.3L1148.5 559.7L1148.5 561.4L1148.4 563.1L1148.2 565.0L1148.1 566.7L1148.0 568.2L1147.9 569.6L1147.6 570.8L1147.4 572.0L1147.3 573.1L1147.3 574.1L1147.5 575.1L1148.0 576.0L1148.7 576.7L1149.6 577.4L1150.6 578.0L1151.6 578.6L1152.5 579.3L1153.5 579.9L1154.7 580.5L1155.8 581.1L1156.9 581.8L1157.7 582.4L1158.0 583.1L1157.8 583.7L1157.2 584.5L1156.3 585.2L1155.3 585.9L1154.3 586.7L1153.5 587.5L1152.7 588.4L1151.8 589.3L1151.0 590.2L1150.2 591.2L1149.7 592.1L1149.5 593.1L1149.7 594.0L1150.3 594.8L1151.0 595.6L1151.9 596.5L1152.8 597.5L1153.5 598.5L1154.2 599.7L1154.9 601.0L1155.6 602.4L1156.2 603.8L1156.7 605.1L1157.0 606.3L1157.1 607.4L1157.1 608.5L1157.0 609.6L1156.7 610.5L1156.4 611.4L1156.0 612.1L1155.5 612.7L1155.0 613.2L1154.4 613.6L1153.7 613.8L1152.9 614.0L1152.0 614.2L1150.9 614.1L1149.7 613.9L1148.3 613.7L1146.9 613.4L1145.6 613.1L1144.5 612.9L1143.5 612.8L1142.7 612.6L1141.9 612.5L1141.1 612.4L1140.4 612.5L1139.5 612.7L1138.5 613.2L1137.5 613.8L1136.4 614.5L1135.4 615.3L1134.4 616.1L1133.5 616.8L1132.7 617.5L1132.0 618.3L1131.4 619.1L1130.8 619.8L1130.1 620.4L1129.5 620.9L1128.8 621.2L1128.1 621.4L1127.4 621.5L1126.8 621.5L1126.1 621.5L1125.5 621.5L1124.9 621.4L1124.3 621.3L1123.8 621.1L1123.2 621.0L1122.8 620.8L1122.5 620.8L1122.5 653.9L1101.8 649.0L1101.4 642.2L1100.3 635.4L1098.5 628.7L1096.0 622.4L1093.0 616.5L1089.4 611.3L1085.4 606.8L1081.0 603.2L1076.4 600.6L1071.8 599.0L1067.1 598.4L1062.5 598.9L1058.1 600.5L1054.1 603.1L1050.5 606.6L1047.5 611.0L1045.0 616.2L1043.2 622.0L1042.1 628.3L1041.8 635.0L1021.8 630.3L1021.8 597.2L1022.1 597.3L1022.5 597.4L1023.0 597.6L1023.6 597.7L1024.2 597.8L1024.8 597.9L1025.4 597.9L1026.0 597.9L1026.7 597.9L1027.4 597.8L1028.1 597.6L1028.8 597.3L1029.4 596.8L1030.0 596.2L1030.6 595.5L1031.3 594.7L1032.0 594.0L1032.8 593.2L1033.6 592.5L1034.6 591.7L1035.7 590.9L1036.8 590.2L1037.8 589.6L1038.8 589.2L1039.6 588.9L1040.4 588.9L1041.2 588.9L1041.9 589.0L1042.8 589.2L1043.8 589.3L1044.9 589.5L1046.2 589.8L1047.6 590.1L1048.9 590.4L1050.2 590.5L1051.2 590.6L1052.2 590.5L1053.0 590.3L1053.7 590.0L1054.3 589.6L1054.8 589.1L1055.2 588.5L1055.6 587.8L1056.0 586.9L1056.2 586.0L1056.4 585.0L1056.4 583.9L1056.2 582.7L1055.9 581.5L1055.4 580.2L1054.8 578.8L1054.1 577.4L1053.4 576.1L1052.8 574.9L1052.0 573.9L1051.2 572.9L1050.3 572.1L1049.5 571.2L1049.0 570.4L1048.8 569.5L1048.9 568.6L1049.5 567.6L1050.2 566.6L1051.1 565.7L1052.0 564.8L1052.8 563.9L1053.6 563.1L1054.6 562.3L1055.6 561.6L1056.5 560.9L1057.1 560.2L1057.2 559.5L1056.9 558.8L1056.1 558.2L1055.1 557.6L1053.9 557.0L1052.8 556.3L1051.8 555.7L1050.8 555.1L1049.8 554.4L1048.9 553.8L1048.0 553.1L1047.3 552.4L1046.8 551.5L1046.5 550.6L1046.5 549.5L1046.7 548.4L1046.9 547.3L1047.1 546.0L1047.2 544.6L1047.4 543.1L1047.5 541.4L1047.6 539.6L1047.7 537.8L1047.8 536.2L1047.8 534.8L1047.7 533.6L1047.6 532.6L1047.4 531.7L1047.2 531.0L1046.8 530.4L1046.2 529.9L1045.5 529.6L1044.4 529.5L1043.3 529.6L1042.1 529.7L1040.9 529.8L1039.8 529.9L1038.6 530.0L1037.5 530.3L1036.3 530.6L1035.2 530.7L1034.4 530.8L1033.8 530.5L1033.5 529.9L1033.4 529.0L1033.6 528.0L1033.8 526.9L1034.1 525.7L1034.2 524.6L1034.3 523.5L1034.4 522.3L1034.5 521.1L1034.6 519.9L1034.7 518.8L1034.8 517.7L1034.8 516.8L1034.9 515.9L1034.9 515.1L1035.0 514.3L1034.9 513.5L1034.8 512.7L1034.5 511.8L1034.2 510.9L1033.8 510.0L1033.3 509.1L1032.8 508.3L1032.2 507.6L1031.6 507.0L1031.0 506.6L1030.2 506.1L1029.4 505.8L1028.6 505.4L1027.8 505.1L1026.8 504.8L1025.6 504.5L1024.5 504.2L1023.4 504.0L1022.4 503.8L1021.8 503.7L1021.8 483.7Z" fill="#b89c59"/>
<path d="M1021.8 630.3L1041.8 635.0L1042.1 628.3L1043.2 622.0L1045.0 616.2L1047.5 611.0L1050.5 606.6L1054.1 603.1L1058.1 600.5L1062.5 598.9L1067.1 598.4L1071.8 599.0L1076.4 600.6L1081.0 603.2L1085.4 606.8L1089.4 611.3L1093.0 616.5L1096.0 622.4L1098.5 628.7L1100.3 635.4L1101.4 642.2L1101.8 649.0L1122.5 653.9L1122.5 673.9L1123.2 674.0L1124.1 674.2L1125.2 674.4L1126.4 674.6L1127.5 674.9L1128.5 675.3L1129.4 675.6L1130.2 675.9L1131.0 676.3L1131.7 676.7L1132.4 677.2L1133.0 677.8L1133.6 678.5L1134.1 679.3L1134.5 680.2L1134.9 681.1L1135.3 682.0L1135.5 682.9L1135.7 683.7L1135.7 684.5L1135.7 685.3L1135.6 686.1L1135.6 687.0L1135.5 687.9L1135.4 688.9L1135.4 690.1L1135.3 691.3L1135.2 692.5L1135.1 693.7L1135.0 694.8L1134.8 695.9L1134.6 697.1L1134.3 698.2L1134.2 699.2L1134.2 700.1L1134.5 700.7L1135.1 700.9L1136.0 700.9L1137.1 700.7L1138.2 700.5L1139.4 700.2L1140.5 700.1L1141.6 700.0L1142.8 699.8L1144.0 699.7L1145.2 699.7L1146.2 699.8L1147.0 700.1L1147.6 700.6L1147.9 701.2L1148.2 701.9L1148.3 702.8L1148.4 703.8L1148.5 704.9L1148.5 706.3L1148.5 708.0L1148.4 709.7L1148.2 711.6L1148.1 713.3L1148.0 714.8L1147.9 716.2L1147.6 717.4L1147.4 718.6L1147.3 719.7L1147.3 720.7L1147.5 721.7L1148.0 722.6L1148.7 723.3L1149.6 724.0L1150.6 724.6L1151.6 725.2L1152.5 725.9L1153.5 726.5L1154.7 727.1L1155.8 727.7L1156.9 728.4L1157.7 729.0L1158.0 729.7L1157.8 730.3L1157.2 731.1L1156.3 731.8L1155.3 732.5L1154.3 733.3L1153.5 734.1L1152.7 735.0L1151.8 735.9L1151.0 736.8L1150.2 737.8L1149.7 738.7L1149.5 739.7L1149.7 740.6L1150.3 741.4L1151.0 742.2L1151.9 743.1L1152.8 744.1L1153.5 745.1L1154.2 746.3L1154.9 747.6L1155.6 749.0L1156.2 750.4L1156.7 751.7L1157.0 752.9L1157.1 754.0L1157.1 755.1L1157.0 756.2L1156.7 757.1L1156.4 758.0L1156.0 758.7L1155.5 759.3L1155.0 759.8L1154.4 760.2L1153.7 760.4L1152.9 760.6L1152.0 760.8L1150.9 760.7L1149.7 760.5L1148.3 760.3L1146.9 760.0L1145.6 759.7L1144.5 759.5L1143.5 759.4L1142.7 759.2L1141.9 759.1L1141.1 759.0L1140.4 759.1L1139.5 759.3L1138.5 759.8L1137.5 760.4L1136.4 761.1L1135.4 761.9L1134.4 762.7L1133.5 763.4L1132.7 764.1L1132.0 764.9L1131.4 765.7L1130.8 766.4L1130.1 767.0L1129.5 767.5L1128.8 767.8L1128.1 768.0L1127.4 768.1L1126.8 768.1L1126.1 768.1L1125.5 768.1L1124.9 768.0L1124.3 767.9L1123.8 767.7L1123.2 767.6L1122.8 767.4L1122.5 767.4L1122.5 800.5L1101.8 795.6L1101.4 788.8L1100.3 782.0L1098.5 775.3L1096.0 769.0L1093.0 763.1L1089.4 757.9L1085.4 753.4L1081.0 749.8L1076.4 747.2L1071.8 745.6L1067.1 745.0L1062.5 745.5L1058.1 747.1L1054.1 749.7L1050.5 753.2L1047.5 757.6L1045.0 762.8L1043.2 768.6L1042.1 774.9L1041.8 781.6L1021.8 776.9L1021.8 743.8L1022.1 743.9L1022.5 744.0L1023.0 744.2L1023.6 744.3L1024.2 744.4L1024.8 744.5L1025.4 744.5L1026.0 744.5L1026.7 744.5L1027.4 744.4L1028.1 744.2L1028.8 743.9L1029.4 743.4L1030.0 742.8L1030.6 742.1L1031.3 741.3L1032.0 740.6L1032.8 739.8L1033.6 739.1L1034.6 738.3L1035.7 737.5L1036.8 736.8L1037.8 736.2L1038.8 735.8L1039.6 735.5L1040.4 735.5L1041.2 735.5L1041.9 735.6L1042.8 735.8L1043.8 735.9L1044.9 736.1L1046.2 736.4L1047.6 736.7L1048.9 737.0L1050.2 737.1L1051.2 737.2L1052.2 737.1L1053.0 736.9L1053.7 736.6L1054.3 736.2L1054.8 735.7L1055.2 735.1L1055.6 734.4L1056.0 733.5L1056.2 732.6L1056.4 731.6L1056.4 730.5L1056.2 729.3L1055.9 728.1L1055.4 726.8L1054.8 725.4L1054.1 724.0L1053.4 722.7L1052.8 721.5L1052.0 720.5L1051.2 719.5L1050.3 718.7L1049.5 717.8L1049.0 717.0L1048.8 716.1L1048.9 715.2L1049.5 714.2L1050.2 713.2L1051.1 712.3L1052.0 711.4L1052.8 710.5L1053.6 709.7L1054.6 708.9L1055.6 708.2L1056.5 707.5L1057.1 706.8L1057.2 706.1L1056.9 705.4L1056.1 704.8L1055.1 704.2L1053.9 703.6L1052.8 702.9L1051.8 702.3L1050.8 701.7L1049.8 701.0L1048.9 700.4L1048.0 699.7L1047.3 699.0L1046.8 698.1L1046.5 697.2L1046.5 696.1L1046.7 695.0L1046.9 693.9L1047.1 692.6L1047.2 691.2L1047.4 689.7L1047.5 688.0L1047.6 686.2L1047.7 684.4L1047.8 682.8L1047.8 681.4L1047.7 680.2L1047.6 679.2L1047.4 678.3L1047.2 677.6L1046.8 677.0L1046.2 676.5L1045.5 676.2L1044.4 676.1L1043.3 676.2L1042.1 676.3L1040.9 676.4L1039.8 676.5L1038.6 676.6L1037.5 676.9L1036.3 677.2L1035.2 677.3L1034.4 677.4L1033.8 677.1L1033.5 676.5L1033.4 675.6L1033.6 674.6L1033.8 673.5L1034.1 672.3L1034.2 671.2L1034.3 670.1L1034.4 668.9L1034.5 667.7L1034.6 666.5L1034.7 665.4L1034.8 664.3L1034.8 663.4L1034.9 662.5L1034.9 661.7L1035.0 660.9L1034.9 660.1L1034.8 659.3L1034.5 658.4L1034.2 657.5L1033.8 656.6L1033.3 655.7L1032.8 654.9L1032.2 654.2L1031.6 653.6L1031.0 653.2L1030.2 652.7L1029.4 652.4L1028.6 652.0L1027.8 651.7L1026.8 651.4L1025.6 651.1L1024.5 650.8L1023.4 650.6L1022.4 650.4L1021.8 650.3L1021.8 630.3Z" fill="#cb503c"/>
<path d="M1122.5 360.7L1142.5 365.3L1142.9 358.7L1144.0 352.4L1145.8 346.6L1148.2 341.4L1151.3 337.0L1154.9 333.4L1158.9 330.9L1163.2 329.3L1167.8 328.8L1172.5 329.4L1177.2 331.0L1181.8 333.6L1186.1 337.2L1190.1 341.7L1193.7 346.9L1196.8 352.8L1199.2 359.1L1201.0 365.7L1202.1 372.6L1202.5 379.4L1223.2 384.2L1223.2 404.2L1223.9 404.4L1224.9 404.5L1226.0 404.8L1227.1 405.0L1228.3 405.3L1229.2 405.6L1230.1 406.0L1230.9 406.3L1231.7 406.7L1232.5 407.1L1233.1 407.6L1233.8 408.2L1234.3 408.9L1234.8 409.7L1235.3 410.6L1235.7 411.5L1236.0 412.4L1236.2 413.3L1236.4 414.1L1236.5 414.9L1236.4 415.7L1236.4 416.5L1236.3 417.3L1236.2 418.3L1236.2 419.3L1236.1 420.5L1236.0 421.7L1235.9 422.9L1235.8 424.0L1235.8 425.2L1235.6 426.3L1235.3 427.4L1235.1 428.6L1234.9 429.6L1235.0 430.4L1235.2 431.0L1235.9 431.3L1236.8 431.3L1237.8 431.1L1239.0 430.8L1240.1 430.6L1241.2 430.4L1242.4 430.4L1243.6 430.2L1244.8 430.1L1245.9 430.1L1247.0 430.2L1247.8 430.5L1248.3 430.9L1248.7 431.5L1248.9 432.3L1249.1 433.1L1249.2 434.2L1249.2 435.3L1249.3 436.7L1249.2 438.3L1249.1 440.1L1249.0 441.9L1248.9 443.7L1248.8 445.2L1248.6 446.5L1248.4 447.8L1248.2 449.0L1248.0 450.1L1248.0 451.1L1248.2 452.1L1248.8 452.9L1249.5 453.7L1250.4 454.4L1251.3 455.0L1252.3 455.6L1253.2 456.2L1254.3 456.9L1255.4 457.5L1256.6 458.1L1257.6 458.7L1258.4 459.4L1258.8 460.0L1258.6 460.7L1258.0 461.4L1257.1 462.1L1256.1 462.9L1255.1 463.7L1254.2 464.5L1253.5 465.3L1252.6 466.3L1251.7 467.2L1251.0 468.2L1250.4 469.1L1250.2 470.0L1250.5 470.9L1251.0 471.8L1251.8 472.6L1252.7 473.5L1253.5 474.4L1254.2 475.5L1254.9 476.7L1255.6 478.0L1256.3 479.4L1256.9 480.8L1257.4 482.1L1257.8 483.3L1257.9 484.4L1257.9 485.5L1257.7 486.5L1257.5 487.5L1257.1 488.3L1256.8 489.1L1256.3 489.7L1255.8 490.2L1255.2 490.5L1254.5 490.8L1253.7 491.0L1252.8 491.1L1251.7 491.1L1250.4 490.9L1249.1 490.6L1247.7 490.3L1246.4 490.1L1245.2 489.9L1244.3 489.7L1243.4 489.6L1242.7 489.5L1241.9 489.4L1241.1 489.5L1240.2 489.7L1239.3 490.1L1238.2 490.8L1237.2 491.5L1236.1 492.3L1235.1 493.1L1234.2 493.8L1233.5 494.5L1232.8 495.3L1232.1 496.1L1231.5 496.8L1230.9 497.4L1230.2 497.9L1229.6 498.2L1228.9 498.4L1228.2 498.4L1227.5 498.5L1226.9 498.4L1226.2 498.4L1225.7 498.4L1225.1 498.3L1224.5 498.1L1224.0 498.0L1223.6 497.8L1223.2 497.7L1223.2 530.8L1202.5 526.0L1202.1 519.2L1201.0 512.3L1199.2 505.7L1196.8 499.4L1193.7 493.5L1190.1 488.3L1186.1 483.8L1181.8 480.2L1177.2 477.6L1172.5 476.0L1167.8 475.4L1163.2 475.9L1158.9 477.5L1154.9 480.0L1151.3 483.6L1148.2 488.0L1145.8 493.2L1144.0 499.0L1142.9 505.3L1142.5 511.9L1122.5 507.3L1122.5 474.2L1122.8 474.2L1123.2 474.4L1123.8 474.5L1124.3 474.7L1124.9 474.8L1125.5 474.9L1126.1 474.9L1126.8 474.9L1127.4 474.9L1128.1 474.8L1128.8 474.6L1129.5 474.3L1130.1 473.8L1130.8 473.2L1131.4 472.5L1132.0 471.7L1132.7 470.9L1133.5 470.2L1134.4 469.5L1135.4 468.7L1136.4 467.9L1137.5 467.2L1138.5 466.6L1139.5 466.1L1140.4 465.9L1141.1 465.8L1141.9 465.9L1142.7 466.0L1143.5 466.2L1144.5 466.3L1145.6 466.5L1146.9 466.8L1148.3 467.1L1149.7 467.3L1150.9 467.5L1152.0 467.6L1152.9 467.4L1153.7 467.2L1154.4 467.0L1155.0 466.6L1155.5 466.1L1156.0 465.5L1156.4 464.8L1156.7 463.9L1157.0 463.0L1157.1 461.9L1157.1 460.8L1157.0 459.7L1156.7 458.5L1156.2 457.2L1155.6 455.8L1154.9 454.4L1154.2 453.1L1153.5 451.9L1152.8 450.9L1151.9 449.9L1151.0 449.0L1150.3 448.2L1149.7 447.4L1149.5 446.5L1149.7 445.5L1150.2 444.6L1151.0 443.6L1151.8 442.7L1152.7 441.8L1153.5 440.9L1154.3 440.1L1155.3 439.3L1156.3 438.6L1157.2 437.9L1157.8 437.1L1158.0 436.5L1157.7 435.8L1156.9 435.2L1155.8 434.5L1154.7 433.9L1153.5 433.3L1152.5 432.7L1151.6 432.0L1150.6 431.4L1149.6 430.8L1148.7 430.1L1148.0 429.4L1147.5 428.5L1147.3 427.5L1147.3 426.5L1147.4 425.4L1147.6 424.2L1147.9 423.0L1148.0 421.6L1148.1 420.1L1148.2 418.4L1148.4 416.5L1148.5 414.8L1148.5 413.1L1148.5 411.7L1148.4 410.6L1148.3 409.6L1148.2 408.7L1147.9 408.0L1147.6 407.4L1147.0 406.9L1146.2 406.6L1145.2 406.5L1144.0 406.5L1142.8 406.6L1141.6 406.8L1140.5 406.9L1139.4 407.0L1138.2 407.3L1137.1 407.5L1136.0 407.7L1135.1 407.7L1134.5 407.5L1134.2 406.9L1134.2 406.0L1134.3 405.0L1134.6 403.9L1134.8 402.7L1135.0 401.6L1135.1 400.5L1135.2 399.3L1135.3 398.1L1135.4 396.9L1135.4 395.7L1135.5 394.7L1135.6 393.8L1135.6 392.9L1135.7 392.1L1135.7 391.3L1135.7 390.5L1135.5 389.7L1135.3 388.8L1134.9 387.9L1134.5 387.0L1134.1 386.1L1133.6 385.3L1133.0 384.6L1132.4 384.0L1131.7 383.5L1131.0 383.1L1130.2 382.7L1129.4 382.4L1128.5 382.1L1127.5 381.7L1126.4 381.4L1125.2 381.2L1124.1 381.0L1123.2 380.8L1122.5 380.7L1122.5 360.7Z" fill="#cb503c"/>
<path d="M1122.5 507.3L1142.5 511.9L1142.9 505.3L1144.0 499.0L1145.8 493.2L1148.2 488.0L1151.3 483.6L1154.9 480.0L1158.9 477.5L1163.2 475.9L1167.8 475.4L1172.5 476.0L1177.2 477.6L1181.8 480.2L1186.1 483.8L1190.1 488.3L1193.7 493.5L1196.8 499.4L1199.2 505.7L1201.0 512.3L1202.1 519.2L1202.5 526.0L1223.2 530.8L1223.2 550.8L1223.9 551.0L1224.9 551.1L1226.0 551.4L1227.1 551.6L1228.3 551.9L1229.2 552.2L1230.1 552.6L1230.9 552.9L1231.7 553.3L1232.5 553.7L1233.1 554.2L1233.8 554.8L1234.3 555.5L1234.8 556.3L1235.3 557.2L1235.7 558.1L1236.0 559.0L1236.2 559.9L1236.4 560.7L1236.5 561.5L1236.4 562.3L1236.4 563.1L1236.3 563.9L1236.2 564.9L1236.2 565.9L1236.1 567.1L1236.0 568.3L1235.9 569.5L1235.8 570.6L1235.8 571.8L1235.6 572.9L1235.3 574.0L1235.1 575.2L1234.9 576.2L1235.0 577.0L1235.2 577.6L1235.9 577.9L1236.8 577.9L1237.8 577.7L1239.0 577.4L1240.1 577.2L1241.2 577.0L1242.4 577.0L1243.6 576.8L1244.8 576.7L1245.9 576.7L1247.0 576.8L1247.8 577.1L1248.3 577.5L1248.7 578.1L1248.9 578.9L1249.1 579.7L1249.2 580.8L1249.2 581.9L1249.3 583.3L1249.2 584.9L1249.1 586.7L1249.0 588.5L1248.9 590.3L1248.8 591.8L1248.6 593.1L1248.4 594.4L1248.2 595.6L1248.0 596.7L1248.0 597.7L1248.2 598.7L1248.8 599.5L1249.5 600.3L1250.4 601.0L1251.3 601.6L1252.3 602.2L1253.2 602.8L1254.3 603.5L1255.4 604.1L1256.6 604.7L1257.6 605.3L1258.4 606.0L1258.8 606.6L1258.6 607.3L1258.0 608.0L1257.1 608.7L1256.1 609.5L1255.1 610.3L1254.2 611.1L1253.5 611.9L1252.6 612.9L1251.7 613.8L1251.0 614.8L1250.4 615.7L1250.2 616.6L1250.5 617.5L1251.0 618.4L1251.8 619.2L1252.7 620.1L1253.5 621.0L1254.2 622.1L1254.9 623.3L1255.6 624.6L1256.3 626.0L1256.9 627.4L1257.4 628.7L1257.8 629.9L1257.9 631.0L1257.9 632.1L1257.7 633.1L1257.5 634.1L1257.1 634.9L1256.8 635.7L1256.3 636.3L1255.8 636.8L1255.2 637.1L1254.5 637.4L1253.7 637.6L1252.8 637.7L1251.7 637.7L1250.4 637.5L1249.1 637.2L1247.7 636.9L1246.4 636.7L1245.2 636.5L1244.3 636.3L1243.4 636.2L1242.7 636.1L1241.9 636.0L1241.1 636.1L1240.2 636.3L1239.3 636.7L1238.2 637.4L1237.2 638.1L1236.1 638.9L1235.1 639.7L1234.2 640.4L1233.5 641.1L1232.8 641.9L1232.1 642.7L1231.5 643.4L1230.9 644.0L1230.2 644.5L1229.6 644.8L1228.9 645.0L1228.2 645.0L1227.5 645.1L1226.9 645.0L1226.2 645.0L1225.7 645.0L1225.1 644.9L1224.5 644.7L1224.0 644.6L1223.6 644.4L1223.2 644.3L1223.2 677.4L1202.5 672.6L1202.1 665.8L1201.0 658.9L1199.2 652.3L1196.8 646.0L1193.7 640.1L1190.1 634.9L1186.1 630.4L1181.8 626.8L1177.2 624.2L1172.5 622.6L1167.8 622.0L1163.2 622.5L1158.9 624.1L1154.9 626.6L1151.3 630.2L1148.2 634.6L1145.8 639.8L1144.0 645.6L1142.9 651.9L1142.5 658.5L1122.5 653.9L1122.5 620.8L1122.8 620.8L1123.2 621.0L1123.8 621.1L1124.3 621.3L1124.9 621.4L1125.5 621.5L1126.1 621.5L1126.8 621.5L1127.4 621.5L1128.1 621.4L1128.8 621.2L1129.5 620.9L1130.1 620.4L1130.8 619.8L1131.4 619.1L1132.0 618.3L1132.7 617.5L1133.5 616.8L1134.4 616.1L1135.4 615.3L1136.4 614.5L1137.5 613.8L1138.5 613.2L1139.5 612.7L1140.4 612.5L1141.1 612.4L1141.9 612.5L1142.7 612.6L1143.5 612.8L1144.5 612.9L1145.6 613.1L1146.9 613.4L1148.3 613.7L1149.7 613.9L1150.9 614.1L1152.0 614.2L1152.9 614.0L1153.7 613.8L1154.4 613.6L1155.0 613.2L1155.5 612.7L1156.0 612.1L1156.4 611.4L1156.7 610.5L1157.0 609.6L1157.1 608.5L1157.1 607.4L1157.0 606.3L1156.7 605.1L1156.2 603.8L1155.6 602.4L1154.9 601.0L1154.2 599.7L1153.5 598.5L1152.8 597.5L1151.9 596.5L1151.0 595.6L1150.3 594.8L1149.7 594.0L1149.5 593.1L1149.7 592.1L1150.2 591.2L1151.0 590.2L1151.8 589.3L1152.7 588.4L1153.5 587.5L1154.3 586.7L1155.3 585.9L1156.3 585.2L1157.2 584.5L1157.8 583.7L1158.0 583.1L1157.7 582.4L1156.9 581.8L1155.8 581.1L1154.7 580.5L1153.5 579.9L1152.5 579.3L1151.6 578.6L1150.6 578.0L1149.6 577.4L1148.7 576.7L1148.0 576.0L1147.5 575.1L1147.3 574.1L1147.3 573.1L1147.4 572.0L1147.6 570.8L1147.9 569.6L1148.0 568.2L1148.1 566.7L1148.2 565.0L1148.4 563.1L1148.5 561.4L1148.5 559.7L1148.5 558.3L1148.4 557.2L1148.3 556.2L1148.2 555.3L1147.9 554.6L1147.6 554.0L1147.0 553.5L1146.2 553.2L1145.2 553.1L1144.0 553.1L1142.8 553.2L1141.6 553.4L1140.5 553.5L1139.4 553.6L1138.2 553.9L1137.1 554.1L1136.0 554.3L1135.1 554.3L1134.5 554.1L1134.2 553.5L1134.2 552.6L1134.3 551.6L1134.6 550.5L1134.8 549.3L1135.0 548.2L1135.1 547.1L1135.2 545.9L1135.3 544.7L1135.4 543.5L1135.4 542.3L1135.5 541.3L1135.6 540.4L1135.6 539.5L1135.7 538.7L1135.7 537.9L1135.7 537.1L1135.5 536.3L1135.3 535.4L1134.9 534.5L1134.5 533.6L1134.1 532.7L1133.6 531.9L1133.0 531.2L1132.4 530.6L1131.7 530.1L1131.0 529.7L1130.2 529.3L1129.4 529.0L1128.5 528.7L1127.5 528.3L1126.4 528.0L1125.2 527.8L1124.1 527.6L1123.2 527.4L1122.5 527.3L1122.5 507.3Z" fill="#cb503c"/>
<path d="M1122.5 653.9L1142.5 658.5L1142.9 651.9L1144.0 645.6L1145.8 639.8L1148.2 634.6L1151.3 630.2L1154.9 626.6L1158.9 624.1L1163.2 622.5L1167.8 622.0L1172.5 622.6L1177.2 624.2L1181.8 626.8L1186.1 630.4L1190.1 634.9L1193.7 640.1L1196.8 646.0L1199.2 652.3L1201.0 658.9L1202.1 665.8L1202.5 672.6L1223.2 677.4L1223.2 697.4L1223.9 697.6L1224.9 697.7L1226.0 698.0L1227.1 698.2L1228.3 698.5L1229.2 698.8L1230.1 699.2L1230.9 699.5L1231.7 699.9L1232.5 700.3L1233.1 700.8L1233.8 701.4L1234.3 702.1L1234.8 702.9L1235.3 703.8L1235.7 704.7L1236.0 705.6L1236.2 706.5L1236.4 707.3L1236.5 708.1L1236.4 708.9L1236.4 709.7L1236.3 710.5L1236.2 711.5L1236.2 712.5L1236.1 713.7L1236.0 714.9L1235.9 716.1L1235.8 717.2L1235.8 718.4L1235.6 719.5L1235.3 720.6L1235.1 721.8L1234.9 722.8L1235.0 723.6L1235.2 724.2L1235.9 724.5L1236.8 724.5L1237.8 724.3L1239.0 724.0L1240.1 723.8L1241.2 723.6L1242.4 723.6L1243.6 723.4L1244.8 723.3L1245.9 723.3L1247.0 723.4L1247.8 723.7L1248.3 724.1L1248.7 724.7L1248.9 725.5L1249.1 726.3L1249.2 727.4L1249.2 728.5L1249.3 729.9L1249.2 731.5L1249.1 733.3L1249.0 735.1L1248.9 736.9L1248.8 738.4L1248.6 739.7L1248.4 741.0L1248.2 742.2L1248.0 743.3L1248.0 744.3L1248.2 745.3L1248.8 746.1L1249.5 746.9L1250.4 747.6L1251.3 748.2L1252.3 748.8L1253.2 749.4L1254.3 750.1L1255.4 750.7L1256.6 751.3L1257.6 751.9L1258.4 752.6L1258.8 753.2L1258.6 753.9L1258.0 754.6L1257.1 755.3L1256.1 756.1L1255.1 756.9L1254.2 757.7L1253.5 758.5L1252.6 759.5L1251.7 760.4L1251.0 761.4L1250.4 762.3L1250.2 763.2L1250.5 764.1L1251.0 765.0L1251.8 765.8L1252.7 766.7L1253.5 767.6L1254.2 768.7L1254.9 769.9L1255.6 771.2L1256.3 772.6L1256.9 774.0L1257.4 775.3L1257.8 776.5L1257.9 777.6L1257.9 778.7L1257.7 779.7L1257.5 780.7L1257.1 781.5L1256.8 782.3L1256.3 782.9L1255.8 783.4L1255.2 783.7L1254.5 784.0L1253.7 784.2L1252.8 784.3L1251.7 784.3L1250.4 784.1L1249.1 783.8L1247.7 783.5L1246.4 783.3L1245.2 783.1L1244.3 782.9L1243.4 782.8L1242.7 782.7L1241.9 782.6L1241.1 782.7L1240.2 782.9L1239.3 783.3L1238.2 784.0L1237.2 784.7L1236.1 785.5L1235.1 786.3L1234.2 787.0L1233.5 787.7L1232.8 788.5L1232.1 789.3L1231.5 790.0L1230.9 790.6L1230.2 791.1L1229.6 791.4L1228.9 791.6L1228.2 791.6L1227.5 791.7L1226.9 791.6L1226.2 791.6L1225.7 791.6L1225.1 791.5L1224.5 791.3L1224.0 791.2L1223.6 791.0L1223.2 790.9L1223.2 824.0L1202.5 819.2L1202.1 812.4L1201.0 805.5L1199.2 798.9L1196.8 792.6L1193.7 786.7L1190.1 781.5L1186.1 777.0L1181.8 773.4L1177.2 770.8L1172.5 769.2L1167.8 768.6L1163.2 769.1L1158.9 770.7L1154.9 773.2L1151.3 776.8L1148.2 781.2L1145.8 786.4L1144.0 792.2L1142.9 798.5L1142.5 805.1L1122.5 800.5L1122.5 767.4L1122.8 767.4L1123.2 767.6L1123.8 767.7L1124.3 767.9L1124.9 768.0L1125.5 768.1L1126.1 768.1L1126.8 768.1L1127.4 768.1L1128.1 768.0L1128.8 767.8L1129.5 767.5L1130.1 767.0L1130.8 766.4L1131.4 765.7L1132.0 764.9L1132.7 764.1L1133.5 763.4L1134.4 762.7L1135.4 761.9L1136.4 761.1L1137.5 760.4L1138.5 759.8L1139.5 759.3L1140.4 759.1L1141.1 759.0L1141.9 759.1L1142.7 759.2L1143.5 759.4L1144.5 759.5L1145.6 759.7L1146.9 760.0L1148.3 760.3L1149.7 760.5L1150.9 760.7L1152.0 760.8L1152.9 760.6L1153.7 760.4L1154.4 760.2L1155.0 759.8L1155.5 759.3L1156.0 758.7L1156.4 758.0L1156.7 757.1L1157.0 756.2L1157.1 755.1L1157.1 754.0L1157.0 752.9L1156.7 751.7L1156.2 750.4L1155.6 749.0L1154.9 747.6L1154.2 746.3L1153.5 745.1L1152.8 744.1L1151.9 743.1L1151.0 742.2L1150.3 741.4L1149.7 740.6L1149.5 739.7L1149.7 738.7L1150.2 737.8L1151.0 736.8L1151.8 735.9L1152.7 735.0L1153.5 734.1L1154.3 733.3L1155.3 732.5L1156.3 731.8L1157.2 731.1L1157.8 730.3L1158.0 729.7L1157.7 729.0L1156.9 728.4L1155.8 727.7L1154.7 727.1L1153.5 726.5L1152.5 725.9L1151.6 725.2L1150.6 724.6L1149.6 724.0L1148.7 723.3L1148.0 722.6L1147.5 721.7L1147.3 720.7L1147.3 719.7L1147.4 718.6L1147.6 717.4L1147.9 716.2L1148.0 714.8L1148.1 713.3L1148.2 711.6L1148.4 709.7L1148.5 708.0L1148.5 706.3L1148.5 704.9L1148.4 703.8L1148.3 702.8L1148.2 701.9L1147.9 701.2L1147.6 700.6L1147.0 700.1L1146.2 699.8L1145.2 699.7L1144.0 699.7L1142.8 699.8L1141.6 700.0L1140.5 700.1L1139.4 700.2L1138.2 700.5L1137.1 700.7L1136.0 700.9L1135.1 700.9L1134.5 700.7L1134.2 700.1L1134.2 699.2L1134.3 698.2L1134.6 697.1L1134.8 695.9L1135.0 694.8L1135.1 693.7L1135.2 692.5L1135.3 691.3L1135.4 690.1L1135.4 688.9L1135.5 687.9L1135.6 687.0L1135.6 686.1L1135.7 685.3L1135.7 684.5L1135.7 683.7L1135.5 682.9L1135.3 682.0L1134.9 681.1L1134.5 680.2L1134.1 679.3L1133.6 678.5L1133.0 677.8L1132.4 677.2L1131.7 676.7L1131.0 676.3L1130.2 675.9L1129.4 675.6L1128.5 675.3L1127.5 674.9L1126.4 674.6L1125.2 674.4L1124.1 674.2L1123.2 674.0L1122.5 673.9L1122.5 653.9Z" fill="#b89c59"/>
<path d="M913.5 314.5L933.5 319.2L933.9 312.5L935.0 306.2L936.8 300.4L939.2 295.2L942.3 290.8L945.9 287.3L949.9 284.7L954.2 283.1L958.8 282.6L963.5 283.2L968.2 284.8L972.8 287.5L977.1 291.1L981.1 295.5L984.7 300.8L987.8 306.6L990.2 312.9L992.0 319.6L993.1 326.4L993.5 333.2L1014.2 338.1L1014.2 358.1L1014.9 358.2L1015.9 358.4L1017.0 358.6L1018.1 358.9L1019.3 359.2L1020.2 359.5L1021.1 359.8L1021.9 360.2L1022.7 360.5L1023.5 361.0L1024.1 361.4L1024.8 362.0L1025.3 362.7L1025.8 363.5L1026.3 364.4L1026.7 365.3L1027.0 366.2L1027.2 367.1L1027.4 367.9L1027.5 368.7L1027.4 369.5L1027.4 370.3L1027.3 371.2L1027.2 372.1L1027.2 373.2L1027.1 374.3L1027.0 375.5L1026.9 376.7L1026.8 377.9L1026.8 379.0L1026.6 380.1L1026.3 381.3L1026.1 382.4L1025.9 383.4L1026.0 384.3L1026.2 384.9L1026.9 385.2L1027.8 385.1L1028.8 385.0L1030.0 384.7L1031.1 384.4L1032.2 384.3L1033.4 384.2L1034.6 384.1L1035.8 384.0L1036.9 383.9L1038.0 384.0L1038.8 384.3L1039.3 384.8L1039.7 385.4L1039.9 386.1L1040.1 387.0L1040.2 388.0L1040.2 389.2L1040.3 390.6L1040.2 392.2L1040.1 394.0L1040.0 395.8L1039.9 397.5L1039.8 399.0L1039.6 400.4L1039.4 401.7L1039.2 402.8L1039.0 403.9L1039.0 405.0L1039.2 405.9L1039.8 406.8L1040.5 407.5L1041.4 408.2L1042.3 408.8L1043.3 409.5L1044.2 410.1L1045.3 410.7L1046.4 411.4L1047.6 412.0L1048.6 412.6L1049.4 413.2L1049.8 413.9L1049.6 414.6L1049.0 415.3L1048.1 416.0L1047.1 416.7L1046.1 417.5L1045.2 418.3L1044.5 419.2L1043.6 420.1L1042.7 421.0L1042.0 422.0L1041.4 423.0L1041.2 423.9L1041.5 424.8L1042.0 425.6L1042.8 426.5L1043.7 427.3L1044.5 428.3L1045.2 429.3L1045.9 430.5L1046.6 431.8L1047.3 433.2L1047.9 434.6L1048.4 435.9L1048.8 437.1L1048.9 438.3L1048.9 439.4L1048.7 440.4L1048.5 441.3L1048.1 442.2L1047.8 442.9L1047.3 443.5L1046.8 444.0L1046.2 444.4L1045.5 444.7L1044.7 444.9L1043.8 445.0L1042.7 444.9L1041.4 444.8L1040.1 444.5L1038.7 444.2L1037.4 443.9L1036.2 443.7L1035.3 443.6L1034.4 443.4L1033.7 443.3L1032.9 443.3L1032.1 443.3L1031.2 443.6L1030.3 444.0L1029.2 444.6L1028.2 445.3L1027.1 446.1L1026.1 446.9L1025.2 447.6L1024.5 448.4L1023.8 449.1L1023.1 449.9L1022.5 450.6L1021.9 451.2L1021.2 451.7L1020.6 452.0L1019.9 452.2L1019.2 452.3L1018.5 452.3L1017.9 452.3L1017.2 452.3L1016.7 452.2L1016.1 452.1L1015.5 452.0L1015.0 451.8L1014.6 451.7L1014.2 451.6L1014.2 484.7L993.5 479.8L993.1 473.0L992.0 466.2L990.2 459.5L987.8 453.2L984.7 447.4L981.1 442.1L977.1 437.7L972.8 434.1L968.2 431.4L963.5 429.8L958.8 429.2L954.2 429.7L949.9 431.3L945.9 433.9L942.3 437.4L939.2 441.8L936.8 447.0L935.0 452.8L933.9 459.1L933.5 465.8L913.5 461.1L913.5 428.0L913.8 428.1L914.2 428.2L914.8 428.4L915.3 428.5L915.9 428.7L916.5 428.7L917.1 428.7L917.8 428.7L918.4 428.7L919.1 428.6L919.8 428.4L920.5 428.1L921.1 427.7L921.8 427.0L922.4 426.3L923.0 425.6L923.7 424.8L924.5 424.1L925.4 423.3L926.4 422.6L927.4 421.8L928.5 421.0L929.5 420.4L930.5 420.0L931.4 419.7L932.1 419.7L932.9 419.7L933.7 419.9L934.5 420.0L935.5 420.1L936.6 420.3L937.9 420.6L939.3 420.9L940.7 421.2L941.9 421.4L943.0 421.4L943.9 421.3L944.7 421.1L945.4 420.8L946.0 420.4L946.5 419.9L947.0 419.3L947.4 418.6L947.7 417.8L948.0 416.8L948.1 415.8L948.1 414.7L948.0 413.6L947.7 412.4L947.2 411.0L946.6 409.6L945.9 408.3L945.2 406.9L944.5 405.8L943.8 404.7L942.9 403.8L942.0 402.9L941.3 402.1L940.7 401.2L940.5 400.3L940.7 399.4L941.2 398.4L942.0 397.5L942.8 396.5L943.7 395.6L944.5 394.8L945.3 393.9L946.3 393.2L947.3 392.4L948.2 391.7L948.8 391.0L949.0 390.3L948.7 389.6L947.9 389.0L946.8 388.4L945.7 387.8L944.5 387.2L943.5 386.5L942.6 385.9L941.6 385.3L940.6 384.6L939.7 384.0L939.0 383.2L938.5 382.4L938.3 381.4L938.3 380.4L938.4 379.3L938.6 378.1L938.9 376.8L939.0 375.5L939.1 373.9L939.2 372.2L939.4 370.4L939.5 368.6L939.5 367.0L939.5 365.6L939.4 364.4L939.3 363.4L939.2 362.5L938.9 361.8L938.6 361.2L938.0 360.7L937.2 360.4L936.2 360.3L935.0 360.4L933.8 360.5L932.6 360.6L931.5 360.7L930.4 360.9L929.2 361.1L928.1 361.4L927.0 361.6L926.1 361.6L925.5 361.3L925.2 360.7L925.2 359.9L925.3 358.8L925.6 357.7L925.8 356.5L926.0 355.4L926.1 354.3L926.2 353.1L926.3 351.9L926.4 350.7L926.4 349.6L926.5 348.5L926.6 347.6L926.6 346.7L926.7 345.9L926.7 345.1L926.7 344.4L926.5 343.5L926.3 342.7L925.9 341.8L925.5 340.8L925.1 340.0L924.6 339.2L924.0 338.5L923.4 337.9L922.7 337.4L922.0 337.0L921.2 336.6L920.4 336.2L919.5 335.9L918.5 335.6L917.4 335.3L916.2 335.0L915.1 334.8L914.2 334.6L913.5 334.5L913.5 314.5Z" fill="#b2a062"/>
<path d="M913.5 461.1L933.5 465.8L933.9 459.1L935.0 452.8L936.8 447.0L939.2 441.8L942.3 437.4L945.9 433.9L949.9 431.3L954.2 429.7L958.8 429.2L963.5 429.8L968.2 431.4L972.8 434.1L977.1 437.7L981.1 442.1L984.7 447.4L987.8 453.2L990.2 459.5L992.0 466.2L993.1 473.0L993.5 479.8L1014.2 484.7L1014.2 504.7L1014.9 504.8L1015.9 505.0L1017.0 505.2L1018.1 505.5L1019.3 505.8L1020.2 506.1L1021.1 506.4L1021.9 506.8L1022.7 507.1L1023.5 507.6L1024.1 508.0L1024.8 508.6L1025.3 509.3L1025.8 510.1L1026.3 511.0L1026.7 511.9L1027.0 512.8L1027.2 513.7L1027.4 514.5L1027.5 515.3L1027.4 516.1L1027.4 516.9L1027.3 517.8L1027.2 518.7L1027.2 519.8L1027.1 520.9L1027.0 522.1L1026.9 523.3L1026.8 524.5L1026.8 525.6L1026.6 526.7L1026.3 527.9L1026.1 529.0L1025.9 530.0L1026.0 530.9L1026.2 531.5L1026.9 531.8L1027.8 531.7L1028.8 531.6L1030.0 531.3L1031.1 531.0L1032.2 530.9L1033.4 530.8L1034.6 530.7L1035.8 530.6L1036.9 530.5L1038.0 530.6L1038.8 530.9L1039.3 531.4L1039.7 532.0L1039.9 532.7L1040.1 533.6L1040.2 534.6L1040.2 535.8L1040.3 537.2L1040.2 538.8L1040.1 540.6L1040.0 542.4L1039.9 544.1L1039.8 545.6L1039.6 547.0L1039.4 548.3L1039.2 549.4L1039.0 550.5L1039.0 551.6L1039.2 552.5L1039.8 553.4L1040.5 554.1L1041.4 554.8L1042.3 555.4L1043.3 556.1L1044.2 556.7L1045.3 557.3L1046.4 558.0L1047.6 558.6L1048.6 559.2L1049.4 559.8L1049.8 560.5L1049.6 561.2L1049.0 561.9L1048.1 562.6L1047.1 563.3L1046.1 564.1L1045.2 564.9L1044.5 565.8L1043.6 566.7L1042.7 567.6L1042.0 568.6L1041.4 569.6L1041.2 570.5L1041.5 571.4L1042.0 572.2L1042.8 573.1L1043.7 573.9L1044.5 574.9L1045.2 575.9L1045.9 577.1L1046.6 578.4L1047.3 579.8L1047.9 581.2L1048.4 582.5L1048.8 583.7L1048.9 584.9L1048.9 586.0L1048.7 587.0L1048.5 587.9L1048.1 588.8L1047.8 589.5L1047.3 590.1L1046.8 590.6L1046.2 591.0L1045.5 591.3L1044.7 591.5L1043.8 591.6L1042.7 591.5L1041.4 591.4L1040.1 591.1L1038.7 590.8L1037.4 590.5L1036.2 590.3L1035.3 590.2L1034.4 590.0L1033.7 589.9L1032.9 589.9L1032.1 589.9L1031.2 590.2L1030.3 590.6L1029.2 591.2L1028.2 591.9L1027.1 592.7L1026.1 593.5L1025.2 594.2L1024.5 595.0L1023.8 595.7L1023.1 596.5L1022.5 597.2L1021.9 597.8L1021.2 598.3L1020.6 598.6L1019.9 598.8L1019.2 598.9L1018.5 598.9L1017.9 598.9L1017.2 598.9L1016.7 598.8L1016.1 598.7L1015.5 598.6L1015.0 598.4L1014.6 598.3L1014.2 598.2L1014.2 631.3L993.5 626.4L993.1 619.6L992.0 612.8L990.2 606.1L987.8 599.8L984.7 594.0L981.1 588.7L977.1 584.3L972.8 580.7L968.2 578.0L963.5 576.4L958.8 575.8L954.2 576.3L949.9 577.9L945.9 580.5L942.3 584.0L939.2 588.4L936.8 593.6L935.0 599.4L933.9 605.7L933.5 612.4L913.5 607.7L913.5 574.6L913.8 574.7L914.2 574.8L914.8 575.0L915.3 575.1L915.9 575.3L916.5 575.3L917.1 575.3L917.8 575.3L918.4 575.3L919.1 575.2L919.8 575.0L920.5 574.7L921.1 574.3L921.8 573.6L922.4 572.9L923.0 572.2L923.7 571.4L924.5 570.7L925.4 569.9L926.4 569.2L927.4 568.4L928.5 567.6L929.5 567.0L930.5 566.6L931.4 566.3L932.1 566.3L932.9 566.3L933.7 566.5L934.5 566.6L935.5 566.7L936.6 566.9L937.9 567.2L939.3 567.5L940.7 567.8L941.9 568.0L943.0 568.0L943.9 567.9L944.7 567.7L945.4 567.4L946.0 567.0L946.5 566.5L947.0 565.9L947.4 565.2L947.7 564.4L948.0 563.4L948.1 562.4L948.1 561.3L948.0 560.2L947.7 559.0L947.2 557.6L946.6 556.2L945.9 554.9L945.2 553.5L944.5 552.4L943.8 551.3L942.9 550.4L942.0 549.5L941.3 548.7L940.7 547.8L940.5 546.9L940.7 546.0L941.2 545.0L942.0 544.1L942.8 543.1L943.7 542.2L944.5 541.4L945.3 540.5L946.3 539.8L947.3 539.0L948.2 538.3L948.8 537.6L949.0 536.9L948.7 536.2L947.9 535.6L946.8 535.0L945.7 534.4L944.5 533.8L943.5 533.1L942.6 532.5L941.6 531.9L940.6 531.2L939.7 530.6L939.0 529.8L938.5 529.0L938.3 528.0L938.3 527.0L938.4 525.9L938.6 524.7L938.9 523.4L939.0 522.1L939.1 520.5L939.2 518.8L939.4 517.0L939.5 515.2L939.5 513.6L939.5 512.2L939.4 511.0L939.3 510.0L939.2 509.1L938.9 508.4L938.6 507.8L938.0 507.3L937.2 507.0L936.2 506.9L935.0 507.0L933.8 507.1L932.6 507.2L931.5 507.3L930.4 507.5L929.2 507.7L928.1 508.0L927.0 508.2L926.1 508.2L925.5 507.9L925.2 507.3L925.2 506.5L925.3 505.4L925.6 504.3L925.8 503.1L926.0 502.0L926.1 500.9L926.2 499.7L926.3 498.5L926.4 497.3L926.4 496.2L926.5 495.1L926.6 494.2L926.6 493.3L926.7 492.5L926.7 491.7L926.7 491.0L926.5 490.1L926.3 489.3L925.9 488.4L925.5 487.4L925.1 486.6L924.6 485.8L924.0 485.1L923.4 484.5L922.7 484.0L922.0 483.6L921.2 483.2L920.4 482.8L919.5 482.5L918.5 482.2L917.4 481.9L916.2 481.6L915.1 481.4L914.2 481.2L913.5 481.1L913.5 461.1Z" fill="#cb503c"/>
<path d="M913.5 607.7L933.5 612.4L933.9 605.7L935.0 599.4L936.8 593.6L939.2 588.4L942.3 584.0L945.9 580.5L949.9 577.9L954.2 576.3L958.8 575.8L963.5 576.4L968.2 578.0L972.8 580.7L977.1 584.3L981.1 588.7L984.7 594.0L987.8 599.8L990.2 606.1L992.0 612.8L993.1 619.6L993.5 626.4L1014.2 631.3L1014.2 651.3L1014.9 651.4L1015.9 651.6L1017.0 651.8L1018.1 652.1L1019.3 652.4L1020.2 652.7L1021.1 653.0L1021.9 653.4L1022.7 653.7L1023.5 654.2L1024.1 654.6L1024.8 655.2L1025.3 655.9L1025.8 656.7L1026.3 657.6L1026.7 658.5L1027.0 659.4L1027.2 660.3L1027.4 661.1L1027.5 661.9L1027.4 662.7L1027.4 663.5L1027.3 664.4L1027.2 665.3L1027.2 666.4L1027.1 667.5L1027.0 668.7L1026.9 669.9L1026.8 671.1L1026.8 672.2L1026.6 673.3L1026.3 674.5L1026.1 675.6L1025.9 676.6L1026.0 677.5L1026.2 678.1L1026.9 678.4L1027.8 678.3L1028.8 678.2L1030.0 677.9L1031.1 677.6L1032.2 677.5L1033.4 677.4L1034.6 677.3L1035.8 677.2L1036.9 677.1L1038.0 677.2L1038.8 677.5L1039.3 678.0L1039.7 678.6L1039.9 679.3L1040.1 680.2L1040.2 681.2L1040.2 682.4L1040.3 683.8L1040.2 685.4L1040.1 687.2L1040.0 689.0L1039.9 690.7L1039.8 692.2L1039.6 693.6L1039.4 694.9L1039.2 696.0L1039.0 697.1L1039.0 698.2L1039.2 699.1L1039.8 700.0L1040.5 700.7L1041.4 701.4L1042.3 702.0L1043.3 702.7L1044.2 703.3L1045.3 703.9L1046.4 704.6L1047.6 705.2L1048.6 705.8L1049.4 706.4L1049.8 707.1L1049.6 707.8L1049.0 708.5L1048.1 709.2L1047.1 709.9L1046.1 710.7L1045.2 711.5L1044.5 712.4L1043.6 713.3L1042.7 714.2L1042.0 715.2L1041.4 716.2L1041.2 717.1L1041.5 718.0L1042.0 718.8L1042.8 719.7L1043.7 720.5L1044.5 721.5L1045.2 722.5L1045.9 723.7L1046.6 725.0L1047.3 726.4L1047.9 727.8L1048.4 729.1L1048.8 730.3L1048.9 731.5L1048.9 732.6L1048.7 733.6L1048.5 734.5L1048.1 735.4L1047.8 736.1L1047.3 736.7L1046.8 737.2L1046.2 737.6L1045.5 737.9L1044.7 738.1L1043.8 738.2L1042.7 738.1L1041.4 738.0L1040.1 737.7L1038.7 737.4L1037.4 737.1L1036.2 736.9L1035.3 736.8L1034.4 736.6L1033.7 736.5L1032.9 736.5L1032.1 736.5L1031.2 736.8L1030.3 737.2L1029.2 737.8L1028.2 738.5L1027.1 739.3L1026.1 740.1L1025.2 740.8L1024.5 741.6L1023.8 742.3L1023.1 743.1L1022.5 743.8L1021.9 744.4L1021.2 744.9L1020.6 745.2L1019.9 745.4L1019.2 745.5L1018.5 745.5L1017.9 745.5L1017.2 745.5L1016.7 745.4L1016.1 745.3L1015.5 745.2L1015.0 745.0L1014.6 744.9L1014.2 744.8L1014.2 777.9L993.5 773.0L993.1 766.2L992.0 759.4L990.2 752.7L987.8 746.4L984.7 740.6L981.1 735.3L977.1 730.9L972.8 727.3L968.2 724.6L963.5 723.0L958.8 722.4L954.2 722.9L949.9 724.5L945.9 727.1L942.3 730.6L939.2 735.0L936.8 740.2L935.0 746.0L933.9 752.3L933.5 759.0L913.5 754.3L913.5 721.2L913.8 721.3L914.2 721.4L914.8 721.6L915.3 721.7L915.9 721.9L916.5 721.9L917.1 721.9L917.8 721.9L918.4 721.9L919.1 721.8L919.8 721.6L920.5 721.3L921.1 720.9L921.8 720.2L922.4 719.5L923.0 718.8L923.7 718.0L924.5 717.3L925.4 716.5L926.4 715.8L927.4 715.0L928.5 714.2L929.5 713.6L930.5 713.2L931.4 712.9L932.1 712.9L932.9 712.9L933.7 713.1L934.5 713.2L935.5 713.3L936.6 713.5L937.9 713.8L939.3 714.1L940.7 714.4L941.9 714.6L943.0 714.6L943.9 714.5L944.7 714.3L945.4 714.0L946.0 713.6L946.5 713.1L947.0 712.5L947.4 711.8L947.7 711.0L948.0 710.0L948.1 709.0L948.1 707.9L948.0 706.8L947.7 705.6L947.2 704.2L946.6 702.8L945.9 701.5L945.2 700.1L944.5 699.0L943.8 697.9L942.9 697.0L942.0 696.1L941.3 695.3L940.7 694.4L940.5 693.5L940.7 692.6L941.2 691.6L942.0 690.7L942.8 689.7L943.7 688.8L944.5 688.0L945.3 687.1L946.3 686.4L947.3 685.6L948.2 684.9L948.8 684.2L949.0 683.5L948.7 682.8L947.9 682.2L946.8 681.6L945.7 681.0L944.5 680.4L943.5 679.7L942.6 679.1L941.6 678.5L940.6 677.8L939.7 677.2L939.0 676.4L938.5 675.6L938.3 674.6L938.3 673.6L938.4 672.5L938.6 671.3L938.9 670.0L939.0 668.7L939.1 667.1L939.2 665.4L939.4 663.6L939.5 661.8L939.5 660.2L939.5 658.8L939.4 657.6L939.3 656.6L939.2 655.7L938.9 655.0L938.6 654.4L938.0 653.9L937.2 653.6L936.2 653.5L935.0 653.6L933.8 653.7L932.6 653.8L931.5 653.9L930.4 654.1L929.2 654.3L928.1 654.6L927.0 654.8L926.1 654.8L925.5 654.5L925.2 653.9L925.2 653.1L925.3 652.0L925.6 650.9L925.8 649.7L926.0 648.6L926.1 647.5L926.2 646.3L926.3 645.1L926.4 643.9L926.4 642.8L926.5 641.7L926.6 640.8L926.6 639.9L926.7 639.1L926.7 638.3L926.7 637.6L926.5 636.7L926.3 635.9L925.9 635.0L925.5 634.0L925.1 633.2L924.6 632.4L924.0 631.7L923.4 631.1L922.7 630.6L922.0 630.2L921.2 629.8L920.4 629.4L919.5 629.1L918.5 628.8L917.4 628.5L916.2 628.2L915.1 628.0L914.2 627.8L913.5 627.7L913.5 607.7Z" fill="#b89c59"/>
<path d="M1014.2 338.1L1034.2 342.8L1034.6 336.1L1035.7 329.8L1037.5 324.0L1040.0 318.8L1043.0 314.4L1046.6 310.9L1050.6 308.3L1055.0 306.7L1059.6 306.2L1064.2 306.8L1068.9 308.4L1073.5 311.0L1077.9 314.6L1081.9 319.1L1085.5 324.3L1088.5 330.2L1091.0 336.5L1092.8 343.2L1093.9 350.0L1094.2 356.8L1115.0 361.7L1115.0 381.7L1115.7 381.8L1116.6 382.0L1117.7 382.2L1118.9 382.4L1120.0 382.7L1121.0 383.1L1121.9 383.4L1122.7 383.7L1123.5 384.1L1124.2 384.5L1124.9 385.0L1125.5 385.6L1126.1 386.3L1126.6 387.1L1127.0 388.0L1127.4 388.9L1127.8 389.8L1128.0 390.7L1128.2 391.5L1128.2 392.3L1128.2 393.1L1128.1 393.9L1128.1 394.8L1128.0 395.7L1127.9 396.7L1127.9 397.9L1127.8 399.1L1127.7 400.3L1127.6 401.5L1127.5 402.6L1127.3 403.7L1127.1 404.9L1126.8 406.0L1126.7 407.0L1126.7 407.9L1127.0 408.5L1127.6 408.7L1128.5 408.7L1129.6 408.5L1130.7 408.3L1131.9 408.0L1133.0 407.9L1134.1 407.8L1135.3 407.6L1136.5 407.5L1137.7 407.5L1138.7 407.6L1139.5 407.9L1140.1 408.4L1140.4 409.0L1140.7 409.7L1140.8 410.6L1140.9 411.6L1141.0 412.7L1141.0 414.1L1141.0 415.8L1140.9 417.5L1140.7 419.4L1140.6 421.1L1140.5 422.6L1140.4 424.0L1140.1 425.2L1139.9 426.4L1139.8 427.5L1139.8 428.5L1140.0 429.5L1140.5 430.4L1141.2 431.1L1142.1 431.8L1143.1 432.4L1144.1 433.0L1145.0 433.7L1146.0 434.3L1147.2 434.9L1148.3 435.5L1149.4 436.2L1150.2 436.8L1150.5 437.5L1150.3 438.1L1149.7 438.9L1148.8 439.6L1147.8 440.3L1146.8 441.1L1146.0 441.9L1145.2 442.8L1144.3 443.7L1143.5 444.6L1142.7 445.6L1142.2 446.5L1142.0 447.5L1142.2 448.4L1142.8 449.2L1143.5 450.0L1144.4 450.9L1145.3 451.9L1146.0 452.9L1146.7 454.1L1147.4 455.4L1148.1 456.8L1148.7 458.2L1149.2 459.5L1149.5 460.7L1149.6 461.8L1149.6 462.9L1149.5 464.0L1149.2 464.9L1148.9 465.8L1148.5 466.5L1148.0 467.1L1147.5 467.6L1146.9 468.0L1146.2 468.2L1145.4 468.4L1144.5 468.6L1143.4 468.5L1142.2 468.3L1140.8 468.1L1139.4 467.8L1138.1 467.5L1137.0 467.3L1136.0 467.2L1135.2 467.0L1134.4 466.9L1133.6 466.8L1132.9 466.9L1132.0 467.1L1131.0 467.6L1130.0 468.2L1128.9 468.9L1127.9 469.7L1126.9 470.5L1126.0 471.2L1125.2 471.9L1124.5 472.7L1123.9 473.5L1123.3 474.2L1122.6 474.8L1122.0 475.3L1121.3 475.6L1120.6 475.8L1119.9 475.9L1119.3 475.9L1118.6 475.9L1118.0 475.9L1117.4 475.8L1116.8 475.7L1116.2 475.5L1115.7 475.4L1115.3 475.2L1115.0 475.2L1115.0 508.3L1094.2 503.4L1093.9 496.6L1092.8 489.8L1091.0 483.1L1088.5 476.8L1085.5 470.9L1081.9 465.7L1077.9 461.2L1073.5 457.6L1068.9 455.0L1064.2 453.4L1059.6 452.8L1055.0 453.3L1050.6 454.9L1046.6 457.5L1043.0 461.0L1040.0 465.4L1037.5 470.6L1035.7 476.4L1034.6 482.7L1034.2 489.4L1014.2 484.7L1014.2 451.6L1014.6 451.7L1015.0 451.8L1015.5 452.0L1016.1 452.1L1016.7 452.2L1017.2 452.3L1017.9 452.3L1018.5 452.3L1019.2 452.3L1019.9 452.2L1020.6 452.0L1021.2 451.7L1021.9 451.2L1022.5 450.6L1023.1 449.9L1023.8 449.1L1024.5 448.4L1025.2 447.6L1026.1 446.9L1027.1 446.1L1028.2 445.3L1029.2 444.6L1030.3 444.0L1031.2 443.6L1032.1 443.3L1032.9 443.3L1033.7 443.3L1034.4 443.4L1035.3 443.6L1036.2 443.7L1037.4 443.9L1038.7 444.2L1040.1 444.5L1041.4 444.8L1042.7 444.9L1043.8 445.0L1044.7 444.9L1045.5 444.7L1046.2 444.4L1046.8 444.0L1047.3 443.5L1047.8 442.9L1048.1 442.2L1048.5 441.3L1048.7 440.4L1048.9 439.4L1048.9 438.3L1048.8 437.1L1048.4 435.9L1047.9 434.6L1047.3 433.2L1046.6 431.8L1045.9 430.5L1045.2 429.3L1044.5 428.3L1043.7 427.3L1042.8 426.5L1042.0 425.6L1041.5 424.8L1041.2 423.9L1041.4 423.0L1042.0 422.0L1042.7 421.0L1043.6 420.1L1044.5 419.2L1045.2 418.3L1046.1 417.5L1047.1 416.7L1048.1 416.0L1049.0 415.3L1049.6 414.6L1049.8 413.9L1049.4 413.2L1048.6 412.6L1047.6 412.0L1046.4 411.4L1045.3 410.7L1044.2 410.1L1043.3 409.5L1042.3 408.8L1041.4 408.2L1040.5 407.5L1039.8 406.8L1039.2 405.9L1039.0 405.0L1039.0 403.9L1039.2 402.8L1039.4 401.7L1039.6 400.4L1039.8 399.0L1039.9 397.5L1040.0 395.8L1040.1 394.0L1040.2 392.2L1040.3 390.6L1040.2 389.2L1040.2 388.0L1040.1 387.0L1039.9 386.1L1039.7 385.4L1039.3 384.8L1038.8 384.3L1038.0 384.0L1036.9 383.9L1035.8 384.0L1034.6 384.1L1033.4 384.2L1032.2 384.3L1031.1 384.4L1030.0 384.7L1028.8 385.0L1027.8 385.1L1026.9 385.2L1026.2 384.9L1026.0 384.3L1025.9 383.4L1026.1 382.4L1026.3 381.3L1026.6 380.1L1026.8 379.0L1026.8 377.9L1026.9 376.7L1027.0 375.5L1027.1 374.3L1027.2 373.2L1027.2 372.1L1027.3 371.2L1027.4 370.3L1027.4 369.5L1027.5 368.7L1027.4 367.9L1027.2 367.1L1027.0 366.2L1026.7 365.3L1026.3 364.4L1025.8 363.5L1025.3 362.7L1024.8 362.0L1024.1 361.4L1023.5 361.0L1022.7 360.5L1021.9 360.2L1021.1 359.8L1020.2 359.5L1019.3 359.2L1018.1 358.9L1017.0 358.6L1015.9 358.4L1014.9 358.2L1014.2 358.1L1014.2 338.1Z" fill="#cb503c"/>
<path d="M1014.2 484.7L1034.2 489.4L1034.6 482.7L1035.7 476.4L1037.5 470.6L1040.0 465.4L1043.0 461.0L1046.6 457.5L1050.6 454.9L1055.0 453.3L1059.6 452.8L1064.2 453.4L1068.9 455.0L1073.5 457.6L1077.9 461.2L1081.9 465.7L1085.5 470.9L1088.5 476.8L1091.0 483.1L1092.8 489.8L1093.9 496.6L1094.2 503.4L1115.0 508.3L1115.0 528.3L1115.7 528.4L1116.6 528.6L1117.7 528.8L1118.9 529.0L1120.0 529.3L1121.0 529.7L1121.9 530.0L1122.7 530.3L1123.5 530.7L1124.2 531.1L1124.9 531.6L1125.5 532.2L1126.1 532.9L1126.6 533.7L1127.0 534.6L1127.4 535.5L1127.8 536.4L1128.0 537.3L1128.2 538.1L1128.2 538.9L1128.2 539.7L1128.1 540.5L1128.1 541.4L1128.0 542.3L1127.9 543.3L1127.9 544.5L1127.8 545.7L1127.7 546.9L1127.6 548.1L1127.5 549.2L1127.3 550.3L1127.1 551.5L1126.8 552.6L1126.7 553.6L1126.7 554.5L1127.0 555.1L1127.6 555.3L1128.5 555.3L1129.6 555.1L1130.7 554.9L1131.9 554.6L1133.0 554.5L1134.1 554.4L1135.3 554.2L1136.5 554.1L1137.7 554.1L1138.7 554.2L1139.5 554.5L1140.1 555.0L1140.4 555.6L1140.7 556.3L1140.8 557.2L1140.9 558.2L1141.0 559.3L1141.0 560.7L1141.0 562.4L1140.9 564.1L1140.7 566.0L1140.6 567.7L1140.5 569.2L1140.4 570.6L1140.1 571.8L1139.9 573.0L1139.8 574.1L1139.8 575.1L1140.0 576.1L1140.5 577.0L1141.2 577.7L1142.1 578.4L1143.1 579.0L1144.1 579.6L1145.0 580.3L1146.0 580.9L1147.2 581.5L1148.3 582.1L1149.4 582.8L1150.2 583.4L1150.5 584.1L1150.3 584.7L1149.7 585.5L1148.8 586.2L1147.8 586.9L1146.8 587.7L1146.0 588.5L1145.2 589.4L1144.3 590.3L1143.5 591.2L1142.7 592.2L1142.2 593.1L1142.0 594.1L1142.2 595.0L1142.8 595.8L1143.5 596.6L1144.4 597.5L1145.3 598.5L1146.0 599.5L1146.7 600.7L1147.4 602.0L1148.1 603.4L1148.7 604.8L1149.2 606.1L1149.5 607.3L1149.6 608.4L1149.6 609.5L1149.5 610.6L1149.2 611.5L1148.9 612.4L1148.5 613.1L1148.0 613.7L1147.5 614.2L1146.9 614.6L1146.2 614.8L1145.4 615.0L1144.5 615.2L1143.4 615.1L1142.2 614.9L1140.8 614.7L1139.4 614.4L1138.1 614.1L1137.0 613.9L1136.0 613.8L1135.2 613.6L1134.4 613.5L1133.6 613.4L1132.9 613.5L1132.0 613.7L1131.0 614.2L1130.0 614.8L1128.9 615.5L1127.9 616.3L1126.9 617.1L1126.0 617.8L1125.2 618.5L1124.5 619.3L1123.9 620.1L1123.3 620.8L1122.6 621.4L1122.0 621.9L1121.3 622.2L1120.6 622.4L1119.9 622.5L1119.3 622.5L1118.6 622.5L1118.0 622.5L1117.4 622.4L1116.8 622.3L1116.2 622.1L1115.7 622.0L1115.3 621.8L1115.0 621.8L1115.0 654.9L1094.2 650.0L1093.9 643.2L1092.8 636.4L1091.0 629.7L1088.5 623.4L1085.5 617.5L1081.9 612.3L1077.9 607.8L1073.5 604.2L1068.9 601.6L1064.2 600.0L1059.6 599.4L1055.0 599.9L1050.6 601.5L1046.6 604.1L1043.0 607.6L1040.0 612.0L1037.5 617.2L1035.7 623.0L1034.6 629.3L1034.2 636.0L1014.2 631.3L1014.2 598.2L1014.6 598.3L1015.0 598.4L1015.5 598.6L1016.1 598.7L1016.7 598.8L1017.2 598.9L1017.9 598.9L1018.5 598.9L1019.2 598.9L1019.9 598.8L1020.6 598.6L1021.2 598.3L1021.9 597.8L1022.5 597.2L1023.1 596.5L1023.8 595.7L1024.5 595.0L1025.2 594.2L1026.1 593.5L1027.1 592.7L1028.2 591.9L1029.2 591.2L1030.3 590.6L1031.2 590.2L1032.1 589.9L1032.9 589.9L1033.7 589.9L1034.4 590.0L1035.3 590.2L1036.2 590.3L1037.4 590.5L1038.7 590.8L1040.1 591.1L1041.4 591.4L1042.7 591.5L1043.8 591.6L1044.7 591.5L1045.5 591.3L1046.2 591.0L1046.8 590.6L1047.3 590.1L1047.8 589.5L1048.1 588.8L1048.5 587.9L1048.7 587.0L1048.9 586.0L1048.9 584.9L1048.8 583.7L1048.4 582.5L1047.9 581.2L1047.3 579.8L1046.6 578.4L1045.9 577.1L1045.2 575.9L1044.5 574.9L1043.7 573.9L1042.8 573.1L1042.0 572.2L1041.5 571.4L1041.2 570.5L1041.4 569.6L1042.0 568.6L1042.7 567.6L1043.6 566.7L1044.5 565.8L1045.2 564.9L1046.1 564.1L1047.1 563.3L1048.1 562.6L1049.0 561.9L1049.6 561.2L1049.8 560.5L1049.4 559.8L1048.6 559.2L1047.6 558.6L1046.4 558.0L1045.3 557.3L1044.2 556.7L1043.3 556.1L1042.3 555.4L1041.4 554.8L1040.5 554.1L1039.8 553.4L1039.2 552.5L1039.0 551.6L1039.0 550.5L1039.2 549.4L1039.4 548.3L1039.6 547.0L1039.8 545.6L1039.9 544.1L1040.0 542.4L1040.1 540.6L1040.2 538.8L1040.3 537.2L1040.2 535.8L1040.2 534.6L1040.1 533.6L1039.9 532.7L1039.7 532.0L1039.3 531.4L1038.8 530.9L1038.0 530.6L1036.9 530.5L1035.8 530.6L1034.6 530.7L1033.4 530.8L1032.2 530.9L1031.1 531.0L1030.0 531.3L1028.8 531.6L1027.8 531.7L1026.9 531.8L1026.2 531.5L1026.0 530.9L1025.9 530.0L1026.1 529.0L1026.3 527.9L1026.6 526.7L1026.8 525.6L1026.8 524.5L1026.9 523.3L1027.0 522.1L1027.1 520.9L1027.2 519.8L1027.2 518.7L1027.3 517.8L1027.4 516.9L1027.4 516.1L1027.5 515.3L1027.4 514.5L1027.2 513.7L1027.0 512.8L1026.7 511.9L1026.3 511.0L1025.8 510.1L1025.3 509.3L1024.8 508.6L1024.1 508.0L1023.5 507.6L1022.7 507.1L1021.9 506.8L1021.1 506.4L1020.2 506.1L1019.3 505.8L1018.1 505.5L1017.0 505.2L1015.9 505.0L1014.9 504.8L1014.2 504.7L1014.2 484.7Z" fill="#b89c59"/>
<path d="M1014.2 631.3L1034.2 636.0L1034.6 629.3L1035.7 623.0L1037.5 617.2L1040.0 612.0L1043.0 607.6L1046.6 604.1L1050.6 601.5L1055.0 599.9L1059.6 599.4L1064.2 600.0L1068.9 601.6L1073.5 604.2L1077.9 607.8L1081.9 612.3L1085.5 617.5L1088.5 623.4L1091.0 629.7L1092.8 636.4L1093.9 643.2L1094.2 650.0L1115.0 654.9L1115.0 674.9L1115.7 675.0L1116.6 675.2L1117.7 675.4L1118.9 675.6L1120.0 675.9L1121.0 676.3L1121.9 676.6L1122.7 676.9L1123.5 677.3L1124.2 677.7L1124.9 678.2L1125.5 678.8L1126.1 679.5L1126.6 680.3L1127.0 681.2L1127.4 682.1L1127.8 683.0L1128.0 683.9L1128.2 684.7L1128.2 685.5L1128.2 686.3L1128.1 687.1L1128.1 688.0L1128.0 688.9L1127.9 689.9L1127.9 691.1L1127.8 692.3L1127.7 693.5L1127.6 694.7L1127.5 695.8L1127.3 696.9L1127.1 698.1L1126.8 699.2L1126.7 700.2L1126.7 701.1L1127.0 701.7L1127.6 701.9L1128.5 701.9L1129.6 701.7L1130.7 701.5L1131.9 701.2L1133.0 701.1L1134.1 701.0L1135.3 700.8L1136.5 700.7L1137.7 700.7L1138.7 700.8L1139.5 701.1L1140.1 701.6L1140.4 702.2L1140.7 702.9L1140.8 703.8L1140.9 704.8L1141.0 705.9L1141.0 707.3L1141.0 709.0L1140.9 710.7L1140.7 712.6L1140.6 714.3L1140.5 715.8L1140.4 717.2L1140.1 718.4L1139.9 719.6L1139.8 720.7L1139.8 721.7L1140.0 722.7L1140.5 723.6L1141.2 724.3L1142.1 725.0L1143.1 725.6L1144.1 726.2L1145.0 726.9L1146.0 727.5L1147.2 728.1L1148.3 728.7L1149.4 729.4L1150.2 730.0L1150.5 730.7L1150.3 731.3L1149.7 732.1L1148.8 732.8L1147.8 733.5L1146.8 734.3L1146.0 735.1L1145.2 736.0L1144.3 736.9L1143.5 737.8L1142.7 738.8L1142.2 739.7L1142.0 740.7L1142.2 741.6L1142.8 742.4L1143.5 743.2L1144.4 744.1L1145.3 745.1L1146.0 746.1L1146.7 747.3L1147.4 748.6L1148.1 750.0L1148.7 751.4L1149.2 752.7L1149.5 753.9L1149.6 755.0L1149.6 756.1L1149.5 757.2L1149.2 758.1L1148.9 759.0L1148.5 759.7L1148.0 760.3L1147.5 760.8L1146.9 761.2L1146.2 761.4L1145.4 761.6L1144.5 761.8L1143.4 761.7L1142.2 761.5L1140.8 761.3L1139.4 761.0L1138.1 760.7L1137.0 760.5L1136.0 760.4L1135.2 760.2L1134.4 760.1L1133.6 760.0L1132.9 760.1L1132.0 760.3L1131.0 760.8L1130.0 761.4L1128.9 762.1L1127.9 762.9L1126.9 763.7L1126.0 764.4L1125.2 765.1L1124.5 765.9L1123.9 766.7L1123.3 767.4L1122.6 768.0L1122.0 768.5L1121.3 768.8L1120.6 769.0L1119.9 769.1L1119.3 769.1L1118.6 769.1L1118.0 769.1L1117.4 769.0L1116.8 768.9L1116.2 768.7L1115.7 768.6L1115.3 768.4L1115.0 768.4L1115.0 801.5L1094.2 796.6L1093.9 789.8L1092.8 783.0L1091.0 776.3L1088.5 770.0L1085.5 764.1L1081.9 758.9L1077.9 754.4L1073.5 750.8L1068.9 748.2L1064.2 746.6L1059.6 746.0L1055.0 746.5L1050.6 748.1L1046.6 750.7L1043.0 754.2L1040.0 758.6L1037.5 763.8L1035.7 769.6L1034.6 775.9L1034.2 782.6L1014.2 777.9L1014.2 744.8L1014.6 744.9L1015.0 745.0L1015.5 745.2L1016.1 745.3L1016.7 745.4L1017.2 745.5L1017.9 745.5L1018.5 745.5L1019.2 745.5L1019.9 745.4L1020.6 745.2L1021.2 744.9L1021.9 744.4L1022.5 743.8L1023.1 743.1L1023.8 742.3L1024.5 741.6L1025.2 740.8L1026.1 740.1L1027.1 739.3L1028.2 738.5L1029.2 737.8L1030.3 737.2L1031.2 736.8L1032.1 736.5L1032.9 736.5L1033.7 736.5L1034.4 736.6L1035.3 736.8L1036.2 736.9L1037.4 737.1L1038.7 737.4L1040.1 737.7L1041.4 738.0L1042.7 738.1L1043.8 738.2L1044.7 738.1L1045.5 737.9L1046.2 737.6L1046.8 737.2L1047.3 736.7L1047.8 736.1L1048.1 735.4L1048.5 734.5L1048.7 733.6L1048.9 732.6L1048.9 731.5L1048.8 730.3L1048.4 729.1L1047.9 727.8L1047.3 726.4L1046.6 725.0L1045.9 723.7L1045.2 722.5L1044.5 721.5L1043.7 720.5L1042.8 719.7L1042.0 718.8L1041.5 718.0L1041.2 717.1L1041.4 716.2L1042.0 715.2L1042.7 714.2L1043.6 713.3L1044.5 712.4L1045.2 711.5L1046.1 710.7L1047.1 709.9L1048.1 709.2L1049.0 708.5L1049.6 707.8L1049.8 707.1L1049.4 706.4L1048.6 705.8L1047.6 705.2L1046.4 704.6L1045.3 703.9L1044.2 703.3L1043.3 702.7L1042.3 702.0L1041.4 701.4L1040.5 700.7L1039.8 700.0L1039.2 699.1L1039.0 698.2L1039.0 697.1L1039.2 696.0L1039.4 694.9L1039.6 693.6L1039.8 692.2L1039.9 690.7L1040.0 689.0L1040.1 687.2L1040.2 685.4L1040.3 683.8L1040.2 682.4L1040.2 681.2L1040.1 680.2L1039.9 679.3L1039.7 678.6L1039.3 678.0L1038.8 677.5L1038.0 677.2L1036.9 677.1L1035.8 677.2L1034.6 677.3L1033.4 677.4L1032.2 677.5L1031.1 677.6L1030.0 677.9L1028.8 678.2L1027.8 678.3L1026.9 678.4L1026.2 678.1L1026.0 677.5L1025.9 676.6L1026.1 675.6L1026.3 674.5L1026.6 673.3L1026.8 672.2L1026.8 671.1L1026.9 669.9L1027.0 668.7L1027.1 667.5L1027.2 666.4L1027.2 665.3L1027.3 664.4L1027.4 663.5L1027.4 662.7L1027.5 661.9L1027.4 661.1L1027.2 660.3L1027.0 659.4L1026.7 658.5L1026.3 657.6L1025.8 656.7L1025.3 655.9L1024.8 655.2L1024.1 654.6L1023.5 654.2L1022.7 653.7L1021.9 653.4L1021.1 653.0L1020.2 652.7L1019.3 652.4L1018.1 652.1L1017.0 651.8L1015.9 651.6L1014.9 651.4L1014.2 651.3L1014.2 631.3Z" fill="#cb503c"/>
<path d="M1115.0 361.7L1135.0 366.3L1135.4 359.7L1136.5 353.4L1138.3 347.6L1140.7 342.4L1143.8 338.0L1147.4 334.4L1151.4 331.9L1155.7 330.3L1160.3 329.8L1165.0 330.4L1169.7 332.0L1174.3 334.6L1178.6 338.2L1182.6 342.7L1186.2 347.9L1189.3 353.8L1191.7 360.1L1193.5 366.7L1194.6 373.6L1195.0 380.4L1215.8 385.2L1215.8 405.2L1216.4 405.4L1217.4 405.5L1218.5 405.8L1219.6 406.0L1220.8 406.3L1221.8 406.6L1222.6 407.0L1223.4 407.3L1224.2 407.7L1225.0 408.1L1225.6 408.6L1226.2 409.2L1226.8 409.9L1227.3 410.7L1227.8 411.6L1228.2 412.5L1228.5 413.4L1228.8 414.3L1228.9 415.1L1229.0 415.9L1228.9 416.7L1228.9 417.5L1228.8 418.3L1228.8 419.3L1228.7 420.3L1228.6 421.5L1228.5 422.7L1228.4 423.9L1228.3 425.0L1228.2 426.2L1228.1 427.3L1227.8 428.4L1227.6 429.6L1227.4 430.6L1227.5 431.4L1227.8 432.0L1228.4 432.3L1229.2 432.3L1230.3 432.1L1231.5 431.8L1232.6 431.6L1233.8 431.4L1234.9 431.4L1236.1 431.2L1237.3 431.1L1238.4 431.1L1239.5 431.2L1240.2 431.5L1240.8 431.9L1241.2 432.5L1241.4 433.3L1241.6 434.1L1241.7 435.2L1241.8 436.3L1241.8 437.7L1241.7 439.3L1241.6 441.1L1241.5 442.9L1241.4 444.7L1241.2 446.2L1241.1 447.5L1240.9 448.8L1240.7 450.0L1240.5 451.1L1240.5 452.1L1240.8 453.1L1241.3 453.9L1242.0 454.7L1242.9 455.4L1243.8 456.0L1244.8 456.6L1245.8 457.2L1246.8 457.9L1247.9 458.5L1249.1 459.1L1250.1 459.7L1250.9 460.4L1251.2 461.0L1251.1 461.7L1250.5 462.4L1249.6 463.1L1248.6 463.9L1247.6 464.7L1246.8 465.5L1246.0 466.3L1245.1 467.3L1244.2 468.2L1243.5 469.2L1242.9 470.1L1242.8 471.0L1243.0 471.9L1243.5 472.8L1244.3 473.6L1245.2 474.5L1246.0 475.4L1246.8 476.5L1247.4 477.7L1248.1 479.0L1248.8 480.4L1249.4 481.8L1249.9 483.1L1250.2 484.3L1250.4 485.4L1250.4 486.5L1250.2 487.5L1250.0 488.5L1249.6 489.3L1249.2 490.1L1248.8 490.7L1248.3 491.2L1247.7 491.5L1247.0 491.8L1246.2 492.0L1245.2 492.1L1244.2 492.1L1242.9 491.9L1241.6 491.6L1240.2 491.3L1238.9 491.1L1237.8 490.9L1236.8 490.7L1235.9 490.6L1235.2 490.5L1234.4 490.4L1233.6 490.5L1232.8 490.7L1231.8 491.1L1230.8 491.8L1229.7 492.5L1228.6 493.3L1227.6 494.1L1226.8 494.8L1226.0 495.5L1225.3 496.3L1224.6 497.1L1224.0 497.8L1223.4 498.4L1222.8 498.9L1222.1 499.2L1221.4 499.4L1220.7 499.4L1220.0 499.5L1219.4 499.4L1218.8 499.4L1218.2 499.4L1217.6 499.3L1217.0 499.1L1216.5 499.0L1216.1 498.8L1215.8 498.7L1215.8 531.8L1195.0 527.0L1194.6 520.2L1193.5 513.3L1191.7 506.7L1189.3 500.4L1186.2 494.5L1182.6 489.3L1178.6 484.8L1174.3 481.2L1169.7 478.6L1165.0 477.0L1160.3 476.4L1155.7 476.9L1151.4 478.5L1147.4 481.0L1143.8 484.6L1140.7 489.0L1138.3 494.2L1136.5 500.0L1135.4 506.3L1135.0 512.9L1115.0 508.3L1115.0 475.2L1115.3 475.2L1115.7 475.4L1116.2 475.5L1116.8 475.7L1117.4 475.8L1118.0 475.9L1118.6 475.9L1119.3 475.9L1119.9 475.9L1120.6 475.8L1121.3 475.6L1122.0 475.3L1122.6 474.8L1123.3 474.2L1123.9 473.5L1124.5 472.7L1125.2 471.9L1126.0 471.2L1126.9 470.5L1127.9 469.7L1128.9 468.9L1130.0 468.2L1131.0 467.6L1132.0 467.1L1132.9 466.9L1133.6 466.8L1134.4 466.9L1135.2 467.0L1136.0 467.2L1137.0 467.3L1138.1 467.5L1139.4 467.8L1140.8 468.1L1142.2 468.3L1143.4 468.5L1144.5 468.6L1145.4 468.4L1146.2 468.2L1146.9 468.0L1147.5 467.6L1148.0 467.1L1148.5 466.5L1148.9 465.8L1149.2 464.9L1149.5 464.0L1149.6 462.9L1149.6 461.8L1149.5 460.7L1149.2 459.5L1148.7 458.2L1148.1 456.8L1147.4 455.4L1146.7 454.1L1146.0 452.9L1145.3 451.9L1144.4 450.9L1143.5 450.0L1142.8 449.2L1142.2 448.4L1142.0 447.5L1142.2 446.5L1142.7 445.6L1143.5 444.6L1144.3 443.7L1145.2 442.8L1146.0 441.9L1146.8 441.1L1147.8 440.3L1148.8 439.6L1149.7 438.9L1150.3 438.1L1150.5 437.5L1150.2 436.8L1149.4 436.2L1148.3 435.5L1147.2 434.9L1146.0 434.3L1145.0 433.7L1144.1 433.0L1143.1 432.4L1142.1 431.8L1141.2 431.1L1140.5 430.4L1140.0 429.5L1139.8 428.5L1139.8 427.5L1139.9 426.4L1140.1 425.2L1140.4 424.0L1140.5 422.6L1140.6 421.1L1140.7 419.4L1140.9 417.5L1141.0 415.8L1141.0 414.1L1141.0 412.7L1140.9 411.6L1140.8 410.6L1140.7 409.7L1140.4 409.0L1140.1 408.4L1139.5 407.9L1138.7 407.6L1137.7 407.5L1136.5 407.5L1135.3 407.6L1134.1 407.8L1133.0 407.9L1131.9 408.0L1130.7 408.3L1129.6 408.5L1128.5 408.7L1127.6 408.7L1127.0 408.5L1126.7 407.9L1126.7 407.0L1126.8 406.0L1127.1 404.9L1127.3 403.7L1127.5 402.6L1127.6 401.5L1127.7 400.3L1127.8 399.1L1127.9 397.9L1127.9 396.7L1128.0 395.7L1128.1 394.8L1128.1 393.9L1128.2 393.1L1128.2 392.3L1128.2 391.5L1128.0 390.7L1127.8 389.8L1127.4 388.9L1127.0 388.0L1126.6 387.1L1126.1 386.3L1125.5 385.6L1124.9 385.0L1124.2 384.5L1123.5 384.1L1122.7 383.7L1121.9 383.4L1121.0 383.1L1120.0 382.7L1118.9 382.4L1117.7 382.2L1116.6 382.0L1115.7 381.8L1115.0 381.7L1115.0 361.7Z" fill="#b89c59"/>
<path d="M1115.0 508.3L1135.0 512.9L1135.4 506.3L1136.5 500.0L1138.3 494.2L1140.7 489.0L1143.8 484.6L1147.4 481.0L1151.4 478.5L1155.7 476.9L1160.3 476.4L1165.0 477.0L1169.7 478.6L1174.3 481.2L1178.6 484.8L1182.6 489.3L1186.2 494.5L1189.3 500.4L1191.7 506.7L1193.5 513.3L1194.6 520.2L1195.0 527.0L1215.8 531.8L1215.8 551.8L1216.4 552.0L1217.4 552.1L1218.5 552.4L1219.6 552.6L1220.8 552.9L1221.8 553.2L1222.6 553.6L1223.4 553.9L1224.2 554.3L1225.0 554.7L1225.6 555.2L1226.2 555.8L1226.8 556.5L1227.3 557.3L1227.8 558.2L1228.2 559.1L1228.5 560.0L1228.8 560.9L1228.9 561.7L1229.0 562.5L1228.9 563.3L1228.9 564.1L1228.8 564.9L1228.8 565.9L1228.7 566.9L1228.6 568.1L1228.5 569.3L1228.4 570.5L1228.3 571.6L1228.2 572.8L1228.1 573.9L1227.8 575.0L1227.6 576.2L1227.4 577.2L1227.5 578.0L1227.8 578.6L1228.4 578.9L1229.2 578.9L1230.3 578.7L1231.5 578.4L1232.6 578.2L1233.8 578.0L1234.9 578.0L1236.1 577.8L1237.3 577.7L1238.4 577.7L1239.5 577.8L1240.2 578.1L1240.8 578.5L1241.2 579.1L1241.4 579.9L1241.6 580.7L1241.7 581.8L1241.8 582.9L1241.8 584.3L1241.7 585.9L1241.6 587.7L1241.5 589.5L1241.4 591.3L1241.2 592.8L1241.1 594.1L1240.9 595.4L1240.7 596.6L1240.5 597.7L1240.5 598.7L1240.8 599.7L1241.3 600.5L1242.0 601.3L1242.9 602.0L1243.8 602.6L1244.8 603.2L1245.8 603.8L1246.8 604.5L1247.9 605.1L1249.1 605.7L1250.1 606.3L1250.9 607.0L1251.2 607.6L1251.1 608.3L1250.5 609.0L1249.6 609.7L1248.6 610.5L1247.6 611.3L1246.8 612.1L1246.0 612.9L1245.1 613.9L1244.2 614.8L1243.5 615.8L1242.9 616.7L1242.8 617.6L1243.0 618.5L1243.5 619.4L1244.3 620.2L1245.2 621.1L1246.0 622.0L1246.8 623.1L1247.4 624.3L1248.1 625.6L1248.8 627.0L1249.4 628.4L1249.9 629.7L1250.2 630.9L1250.4 632.0L1250.4 633.1L1250.2 634.1L1250.0 635.1L1249.6 635.9L1249.2 636.7L1248.8 637.3L1248.3 637.8L1247.7 638.1L1247.0 638.4L1246.2 638.6L1245.2 638.7L1244.2 638.7L1242.9 638.5L1241.6 638.2L1240.2 637.9L1238.9 637.7L1237.8 637.5L1236.8 637.3L1235.9 637.2L1235.2 637.1L1234.4 637.0L1233.6 637.1L1232.8 637.3L1231.8 637.7L1230.8 638.4L1229.7 639.1L1228.6 639.9L1227.6 640.7L1226.8 641.4L1226.0 642.1L1225.3 642.9L1224.6 643.7L1224.0 644.4L1223.4 645.0L1222.8 645.5L1222.1 645.8L1221.4 646.0L1220.7 646.0L1220.0 646.1L1219.4 646.0L1218.8 646.0L1218.2 646.0L1217.6 645.9L1217.0 645.7L1216.5 645.6L1216.1 645.4L1215.8 645.3L1215.8 678.4L1195.0 673.6L1194.6 666.8L1193.5 659.9L1191.7 653.3L1189.3 647.0L1186.2 641.1L1182.6 635.9L1178.6 631.4L1174.3 627.8L1169.7 625.2L1165.0 623.6L1160.3 623.0L1155.7 623.5L1151.4 625.1L1147.4 627.6L1143.8 631.2L1140.7 635.6L1138.3 640.8L1136.5 646.6L1135.4 652.9L1135.0 659.5L1115.0 654.9L1115.0 621.8L1115.3 621.8L1115.7 622.0L1116.2 622.1L1116.8 622.3L1117.4 622.4L1118.0 622.5L1118.6 622.5L1119.3 622.5L1119.9 622.5L1120.6 622.4L1121.3 622.2L1122.0 621.9L1122.6 621.4L1123.3 620.8L1123.9 620.1L1124.5 619.3L1125.2 618.5L1126.0 617.8L1126.9 617.1L1127.9 616.3L1128.9 615.5L1130.0 614.8L1131.0 614.2L1132.0 613.7L1132.9 613.5L1133.6 613.4L1134.4 613.5L1135.2 613.6L1136.0 613.8L1137.0 613.9L1138.1 614.1L1139.4 614.4L1140.8 614.7L1142.2 614.9L1143.4 615.1L1144.5 615.2L1145.4 615.0L1146.2 614.8L1146.9 614.6L1147.5 614.2L1148.0 613.7L1148.5 613.1L1148.9 612.4L1149.2 611.5L1149.5 610.6L1149.6 609.5L1149.6 608.4L1149.5 607.3L1149.2 606.1L1148.7 604.8L1148.1 603.4L1147.4 602.0L1146.7 600.7L1146.0 599.5L1145.3 598.5L1144.4 597.5L1143.5 596.6L1142.8 595.8L1142.2 595.0L1142.0 594.1L1142.2 593.1L1142.7 592.2L1143.5 591.2L1144.3 590.3L1145.2 589.4L1146.0 588.5L1146.8 587.7L1147.8 586.9L1148.8 586.2L1149.7 585.5L1150.3 584.7L1150.5 584.1L1150.2 583.4L1149.4 582.8L1148.3 582.1L1147.2 581.5L1146.0 580.9L1145.0 580.3L1144.1 579.6L1143.1 579.0L1142.1 578.4L1141.2 577.7L1140.5 577.0L1140.0 576.1L1139.8 575.1L1139.8 574.1L1139.9 573.0L1140.1 571.8L1140.4 570.6L1140.5 569.2L1140.6 567.7L1140.7 566.0L1140.9 564.1L1141.0 562.4L1141.0 560.7L1141.0 559.3L1140.9 558.2L1140.8 557.2L1140.7 556.3L1140.4 555.6L1140.1 555.0L1139.5 554.5L1138.7 554.2L1137.7 554.1L1136.5 554.1L1135.3 554.2L1134.1 554.4L1133.0 554.5L1131.9 554.6L1130.7 554.9L1129.6 555.1L1128.5 555.3L1127.6 555.3L1127.0 555.1L1126.7 554.5L1126.7 553.6L1126.8 552.6L1127.1 551.5L1127.3 550.3L1127.5 549.2L1127.6 548.1L1127.7 546.9L1127.8 545.7L1127.9 544.5L1127.9 543.3L1128.0 542.3L1128.1 541.4L1128.1 540.5L1128.2 539.7L1128.2 538.9L1128.2 538.1L1128.0 537.3L1127.8 536.4L1127.4 535.5L1127.0 534.6L1126.6 533.7L1126.1 532.9L1125.5 532.2L1124.9 531.6L1124.2 531.1L1123.5 530.7L1122.7 530.3L1121.9 530.0L1121.0 529.7L1120.0 529.3L1118.9 529.0L1117.7 528.8L1116.6 528.6L1115.7 528.4L1115.0 528.3L1115.0 508.3Z" fill="#cb503c"/>
<path d="M1115.0 654.9L1135.0 659.5L1135.4 652.9L1136.5 646.6L1138.3 640.8L1140.7 635.6L1143.8 631.2L1147.4 627.6L1151.4 625.1L1155.7 623.5L1160.3 623.0L1165.0 623.6L1169.7 625.2L1174.3 627.8L1178.6 631.4L1182.6 635.9L1186.2 641.1L1189.3 647.0L1191.7 653.3L1193.5 659.9L1194.6 666.8L1195.0 673.6L1215.8 678.4L1215.8 698.4L1216.4 698.6L1217.4 698.7L1218.5 699.0L1219.6 699.2L1220.8 699.5L1221.8 699.8L1222.6 700.2L1223.4 700.5L1224.2 700.9L1225.0 701.3L1225.6 701.8L1226.2 702.4L1226.8 703.1L1227.3 703.9L1227.8 704.8L1228.2 705.7L1228.5 706.6L1228.8 707.5L1228.9 708.3L1229.0 709.1L1228.9 709.9L1228.9 710.7L1228.8 711.5L1228.8 712.5L1228.7 713.5L1228.6 714.7L1228.5 715.9L1228.4 717.1L1228.3 718.2L1228.2 719.4L1228.1 720.5L1227.8 721.6L1227.6 722.8L1227.4 723.8L1227.5 724.6L1227.8 725.2L1228.4 725.5L1229.2 725.5L1230.3 725.3L1231.5 725.0L1232.6 724.8L1233.8 724.6L1234.9 724.6L1236.1 724.4L1237.3 724.3L1238.4 724.3L1239.5 724.4L1240.2 724.7L1240.8 725.1L1241.2 725.7L1241.4 726.5L1241.6 727.3L1241.7 728.4L1241.8 729.5L1241.8 730.9L1241.7 732.5L1241.6 734.3L1241.5 736.1L1241.4 737.9L1241.2 739.4L1241.1 740.7L1240.9 742.0L1240.7 743.2L1240.5 744.3L1240.5 745.3L1240.8 746.3L1241.3 747.1L1242.0 747.9L1242.9 748.6L1243.8 749.2L1244.8 749.8L1245.8 750.4L1246.8 751.1L1247.9 751.7L1249.1 752.3L1250.1 752.9L1250.9 753.6L1251.2 754.2L1251.1 754.9L1250.5 755.6L1249.6 756.3L1248.6 757.1L1247.6 757.9L1246.8 758.7L1246.0 759.5L1245.1 760.5L1244.2 761.4L1243.5 762.4L1242.9 763.3L1242.8 764.2L1243.0 765.1L1243.5 766.0L1244.3 766.8L1245.2 767.7L1246.0 768.6L1246.8 769.7L1247.4 770.9L1248.1 772.2L1248.8 773.6L1249.4 775.0L1249.9 776.3L1250.2 777.5L1250.4 778.6L1250.4 779.7L1250.2 780.7L1250.0 781.7L1249.6 782.5L1249.2 783.3L1248.8 783.9L1248.3 784.4L1247.7 784.7L1247.0 785.0L1246.2 785.2L1245.2 785.3L1244.2 785.3L1242.9 785.1L1241.6 784.8L1240.2 784.5L1238.9 784.3L1237.8 784.1L1236.8 783.9L1235.9 783.8L1235.2 783.7L1234.4 783.6L1233.6 783.7L1232.8 783.9L1231.8 784.3L1230.8 785.0L1229.7 785.7L1228.6 786.5L1227.6 787.3L1226.8 788.0L1226.0 788.7L1225.3 789.5L1224.6 790.3L1224.0 791.0L1223.4 791.6L1222.8 792.1L1222.1 792.4L1221.4 792.6L1220.7 792.6L1220.0 792.7L1219.4 792.6L1218.8 792.6L1218.2 792.6L1217.6 792.5L1217.0 792.3L1216.5 792.2L1216.1 792.0L1215.8 791.9L1215.8 825.0L1195.0 820.2L1194.6 813.4L1193.5 806.5L1191.7 799.9L1189.3 793.6L1186.2 787.7L1182.6 782.5L1178.6 778.0L1174.3 774.4L1169.7 771.8L1165.0 770.2L1160.3 769.6L1155.7 770.1L1151.4 771.7L1147.4 774.2L1143.8 777.8L1140.7 782.2L1138.3 787.4L1136.5 793.2L1135.4 799.5L1135.0 806.1L1115.0 801.5L1115.0 768.4L1115.3 768.4L1115.7 768.6L1116.2 768.7L1116.8 768.9L1117.4 769.0L1118.0 769.1L1118.6 769.1L1119.3 769.1L1119.9 769.1L1120.6 769.0L1121.3 768.8L1122.0 768.5L1122.6 768.0L1123.3 767.4L1123.9 766.7L1124.5 765.9L1125.2 765.1L1126.0 764.4L1126.9 763.7L1127.9 762.9L1128.9 762.1L1130.0 761.4L1131.0 760.8L1132.0 760.3L1132.9 760.1L1133.6 760.0L1134.4 760.1L1135.2 760.2L1136.0 760.4L1137.0 760.5L1138.1 760.7L1139.4 761.0L1140.8 761.3L1142.2 761.5L1143.4 761.7L1144.5 761.8L1145.4 761.6L1146.2 761.4L1146.9 761.2L1147.5 760.8L1148.0 760.3L1148.5 759.7L1148.9 759.0L1149.2 758.1L1149.5 757.2L1149.6 756.1L1149.6 755.0L1149.5 753.9L1149.2 752.7L1148.7 751.4L1148.1 750.0L1147.4 748.6L1146.7 747.3L1146.0 746.1L1145.3 745.1L1144.4 744.1L1143.5 743.2L1142.8 742.4L1142.2 741.6L1142.0 740.7L1142.2 739.7L1142.7 738.8L1143.5 737.8L1144.3 736.9L1145.2 736.0L1146.0 735.1L1146.8 734.3L1147.8 733.5L1148.8 732.8L1149.7 732.1L1150.3 731.3L1150.5 730.7L1150.2 730.0L1149.4 729.4L1148.3 728.7L1147.2 728.1L1146.0 727.5L1145.0 726.9L1144.1 726.2L1143.1 725.6L1142.1 725.0L1141.2 724.3L1140.5 723.6L1140.0 722.7L1139.8 721.7L1139.8 720.7L1139.9 719.6L1140.1 718.4L1140.4 717.2L1140.5 715.8L1140.6 714.3L1140.7 712.6L1140.9 710.7L1141.0 709.0L1141.0 707.3L1141.0 705.9L1140.9 704.8L1140.8 703.8L1140.7 702.9L1140.4 702.2L1140.1 701.6L1139.5 701.1L1138.7 700.8L1137.7 700.7L1136.5 700.7L1135.3 700.8L1134.1 701.0L1133.0 701.1L1131.9 701.2L1130.7 701.5L1129.6 701.7L1128.5 701.9L1127.6 701.9L1127.0 701.7L1126.7 701.1L1126.7 700.2L1126.8 699.2L1127.1 698.1L1127.3 696.9L1127.5 695.8L1127.6 694.7L1127.7 693.5L1127.8 692.3L1127.9 691.1L1127.9 689.9L1128.0 688.9L1128.1 688.0L1128.1 687.1L1128.2 686.3L1128.2 685.5L1128.2 684.7L1128.0 683.9L1127.8 683.0L1127.4 682.1L1127.0 681.2L1126.6 680.3L1126.1 679.5L1125.5 678.8L1124.9 678.2L1124.2 677.7L1123.5 677.3L1122.7 676.9L1121.9 676.6L1121.0 676.3L1120.0 675.9L1118.9 675.6L1117.7 675.4L1116.6 675.2L1115.7 675.0L1115.0 674.9L1115.0 654.9Z" fill="#b89c59"/>
<clipPath id="mclip"><path d="M913.5 314.5L933.5 319.2L933.9 312.5L935.0 306.2L936.8 300.4L939.2 295.2L942.3 290.8L945.9 287.3L949.9 284.7L954.2 283.1L958.8 282.6L963.5 283.2L968.2 284.8L972.8 287.5L977.1 291.1L981.1 295.5L984.7 300.8L987.8 306.6L990.2 312.9L992.0 319.6L993.1 326.4L993.5 333.2L1014.2 338.1L1014.2 358.1L1014.9 358.2L1015.9 358.4L1017.0 358.6L1018.1 358.9L1019.3 359.2L1020.2 359.5L1021.1 359.8L1021.9 360.2L1022.7 360.5L1023.5 361.0L1024.1 361.4L1024.8 362.0L1025.3 362.7L1025.8 363.5L1026.3 364.4L1026.7 365.3L1027.0 366.2L1027.2 367.1L1027.4 367.9L1027.5 368.7L1027.4 369.5L1027.4 370.3L1027.3 371.2L1027.2 372.1L1027.2 373.2L1027.1 374.3L1027.0 375.5L1026.9 376.7L1026.8 377.9L1026.8 379.0L1026.6 380.1L1026.3 381.3L1026.1 382.4L1025.9 383.4L1026.0 384.3L1026.2 384.9L1026.9 385.2L1027.8 385.1L1028.8 385.0L1030.0 384.7L1031.1 384.4L1032.2 384.3L1033.4 384.2L1034.6 384.1L1035.8 384.0L1036.9 383.9L1038.0 384.0L1038.8 384.3L1039.3 384.8L1039.7 385.4L1039.9 386.1L1040.1 387.0L1040.2 388.0L1040.2 389.2L1040.3 390.6L1040.2 392.2L1040.1 394.0L1040.0 395.8L1039.9 397.5L1039.8 399.0L1039.6 400.4L1039.4 401.7L1039.2 402.8L1039.0 403.9L1039.0 405.0L1039.2 405.9L1039.8 406.8L1040.5 407.5L1041.4 408.2L1042.3 408.8L1043.3 409.5L1044.2 410.1L1045.3 410.7L1046.4 411.4L1047.6 412.0L1048.6 412.6L1049.4 413.2L1049.8 413.9L1049.6 414.6L1049.0 415.3L1048.1 416.0L1047.1 416.7L1046.1 417.5L1045.2 418.3L1044.5 419.2L1043.6 420.1L1042.7 421.0L1042.0 422.0L1041.4 423.0L1041.2 423.9L1041.5 424.8L1042.0 425.6L1042.8 426.5L1043.7 427.3L1044.5 428.3L1045.2 429.3L1045.9 430.5L1046.6 431.8L1047.3 433.2L1047.9 434.6L1048.4 435.9L1048.8 437.1L1048.9 438.3L1048.9 439.4L1048.7 440.4L1048.5 441.3L1048.1 442.2L1047.8 442.9L1047.3 443.5L1046.8 444.0L1046.2 444.4L1045.5 444.7L1044.7 444.9L1043.8 445.0L1042.7 444.9L1041.4 444.8L1040.1 444.5L1038.7 444.2L1037.4 443.9L1036.2 443.7L1035.3 443.6L1034.4 443.4L1033.7 443.3L1032.9 443.3L1032.1 443.3L1031.2 443.6L1030.3 444.0L1029.2 444.6L1028.2 445.3L1027.1 446.1L1026.1 446.9L1025.2 447.6L1024.5 448.4L1023.8 449.1L1023.1 449.9L1022.5 450.6L1021.9 451.2L1021.2 451.7L1020.6 452.0L1019.9 452.2L1019.2 452.3L1018.5 452.3L1017.9 452.3L1017.2 452.3L1016.7 452.2L1016.1 452.1L1015.5 452.0L1015.0 451.8L1014.6 451.7L1014.2 451.6L1014.2 484.7L993.5 479.8L993.1 473.0L992.0 466.2L990.2 459.5L987.8 453.2L984.7 447.4L981.1 442.1L977.1 437.7L972.8 434.1L968.2 431.4L963.5 429.8L958.8 429.2L954.2 429.7L949.9 431.3L945.9 433.9L942.3 437.4L939.2 441.8L936.8 447.0L935.0 452.8L933.9 459.1L933.5 465.8L913.5 461.1L913.5 428.0L913.8 428.1L914.2 428.2L914.8 428.4L915.3 428.5L915.9 428.7L916.5 428.7L917.1 428.7L917.8 428.7L918.4 428.7L919.1 428.6L919.8 428.4L920.5 428.1L921.1 427.7L921.8 427.0L922.4 426.3L923.0 425.6L923.7 424.8L924.5 424.1L925.4 423.3L926.4 422.6L927.4 421.8L928.5 421.0L929.5 420.4L930.5 420.0L931.4 419.7L932.1 419.7L932.9 419.7L933.7 419.9L934.5 420.0L935.5 420.1L936.6 420.3L937.9 420.6L939.3 420.9L940.7 421.2L941.9 421.4L943.0 421.4L943.9 421.3L944.7 421.1L945.4 420.8L946.0 420.4L946.5 419.9L947.0 419.3L947.4 418.6L947.7 417.8L948.0 416.8L948.1 415.8L948.1 414.7L948.0 413.6L947.7 412.4L947.2 411.0L946.6 409.6L945.9 408.3L945.2 406.9L944.5 405.8L943.8 404.7L942.9 403.8L942.0 402.9L941.3 402.1L940.7 401.2L940.5 400.3L940.7 399.4L941.2 398.4L942.0 397.5L942.8 396.5L943.7 395.6L944.5 394.8L945.3 393.9L946.3 393.2L947.3 392.4L948.2 391.7L948.8 391.0L949.0 390.3L948.7 389.6L947.9 389.0L946.8 388.4L945.7 387.8L944.5 387.2L943.5 386.5L942.6 385.9L941.6 385.3L940.6 384.6L939.7 384.0L939.0 383.2L938.5 382.4L938.3 381.4L938.3 380.4L938.4 379.3L938.6 378.1L938.9 376.8L939.0 375.5L939.1 373.9L939.2 372.2L939.4 370.4L939.5 368.6L939.5 367.0L939.5 365.6L939.4 364.4L939.3 363.4L939.2 362.5L938.9 361.8L938.6 361.2L938.0 360.7L937.2 360.4L936.2 360.3L935.0 360.4L933.8 360.5L932.6 360.6L931.5 360.7L930.4 360.9L929.2 361.1L928.1 361.4L927.0 361.6L926.1 361.6L925.5 361.3L925.2 360.7L925.2 359.9L925.3 358.8L925.6 357.7L925.8 356.5L926.0 355.4L926.1 354.3L926.2 353.1L926.3 351.9L926.4 350.7L926.4 349.6L926.5 348.5L926.6 347.6L926.6 346.7L926.7 345.9L926.7 345.1L926.7 344.4L926.5 343.5L926.3 342.7L925.9 341.8L925.5 340.8L925.1 340.0L924.6 339.2L924.0 338.5L923.4 337.9L922.7 337.4L922.0 337.0L921.2 336.6L920.4 336.2L919.5 335.9L918.5 335.6L917.4 335.3L916.2 335.0L915.1 334.8L914.2 334.6L913.5 334.5L913.5 314.5Z"/><path d="M921.0 313.5L941.0 318.2L941.4 311.5L942.5 305.2L944.3 299.4L946.7 294.2L949.8 289.8L953.4 286.3L957.4 283.7L961.7 282.1L966.3 281.6L971.0 282.2L975.7 283.8L980.3 286.5L984.6 290.1L988.6 294.5L992.2 299.8L995.3 305.6L997.7 311.9L999.5 318.6L1000.6 325.4L1001.0 332.2L1021.8 337.1L1021.8 357.1L1022.4 357.2L1023.4 357.4L1024.5 357.6L1025.6 357.9L1026.8 358.2L1027.8 358.5L1028.6 358.8L1029.4 359.2L1030.2 359.5L1031.0 360.0L1031.6 360.4L1032.2 361.0L1032.8 361.7L1033.3 362.5L1033.8 363.4L1034.2 364.3L1034.5 365.2L1034.8 366.1L1034.9 366.9L1035.0 367.7L1034.9 368.5L1034.9 369.3L1034.8 370.2L1034.8 371.1L1034.7 372.2L1034.6 373.3L1034.5 374.5L1034.4 375.7L1034.3 376.9L1034.2 378.0L1034.1 379.1L1033.8 380.3L1033.6 381.4L1033.4 382.4L1033.5 383.3L1033.8 383.9L1034.4 384.2L1035.2 384.1L1036.3 384.0L1037.5 383.7L1038.6 383.4L1039.8 383.3L1040.9 383.2L1042.1 383.1L1043.3 383.0L1044.4 382.9L1045.5 383.0L1046.2 383.3L1046.8 383.8L1047.2 384.4L1047.4 385.1L1047.6 386.0L1047.7 387.0L1047.8 388.2L1047.8 389.6L1047.7 391.2L1047.6 393.0L1047.5 394.8L1047.4 396.5L1047.2 398.0L1047.1 399.4L1046.9 400.7L1046.7 401.8L1046.5 402.9L1046.5 404.0L1046.8 404.9L1047.3 405.8L1048.0 406.5L1048.9 407.2L1049.8 407.8L1050.8 408.5L1051.8 409.1L1052.8 409.7L1053.9 410.4L1055.1 411.0L1056.1 411.6L1056.9 412.2L1057.2 412.9L1057.1 413.6L1056.5 414.3L1055.6 415.0L1054.6 415.7L1053.6 416.5L1052.8 417.3L1052.0 418.2L1051.1 419.1L1050.2 420.0L1049.5 421.0L1048.9 422.0L1048.8 422.9L1049.0 423.8L1049.5 424.6L1050.3 425.5L1051.2 426.3L1052.0 427.3L1052.8 428.3L1053.4 429.5L1054.1 430.8L1054.8 432.2L1055.4 433.6L1055.9 434.9L1056.2 436.1L1056.4 437.3L1056.4 438.4L1056.2 439.4L1056.0 440.3L1055.6 441.2L1055.2 441.9L1054.8 442.5L1054.3 443.0L1053.7 443.4L1053.0 443.7L1052.2 443.9L1051.2 444.0L1050.2 443.9L1048.9 443.8L1047.6 443.5L1046.2 443.2L1044.9 442.9L1043.8 442.7L1042.8 442.6L1041.9 442.4L1041.2 442.3L1040.4 442.3L1039.6 442.3L1038.8 442.6L1037.8 443.0L1036.8 443.6L1035.7 444.3L1034.6 445.1L1033.6 445.9L1032.8 446.6L1032.0 447.4L1031.3 448.1L1030.6 448.9L1030.0 449.6L1029.4 450.2L1028.8 450.7L1028.1 451.0L1027.4 451.2L1026.7 451.3L1026.0 451.3L1025.4 451.3L1024.8 451.3L1024.2 451.2L1023.6 451.1L1023.0 451.0L1022.5 450.8L1022.1 450.7L1021.8 450.6L1021.8 483.7L1001.0 478.8L1000.6 472.0L999.5 465.2L997.7 458.5L995.3 452.2L992.2 446.4L988.6 441.1L984.6 436.7L980.3 433.1L975.7 430.4L971.0 428.8L966.3 428.2L961.7 428.7L957.4 430.3L953.4 432.9L949.8 436.4L946.7 440.8L944.3 446.0L942.5 451.8L941.4 458.1L941.0 464.8L921.0 460.1L921.0 427.0L921.3 427.1L921.7 427.2L922.2 427.4L922.8 427.5L923.4 427.7L924.0 427.7L924.6 427.7L925.3 427.7L925.9 427.7L926.6 427.6L927.3 427.4L928.0 427.1L928.6 426.7L929.3 426.0L929.9 425.3L930.5 424.6L931.2 423.8L932.0 423.1L932.9 422.3L933.9 421.6L934.9 420.8L936.0 420.0L937.0 419.4L938.0 419.0L938.9 418.7L939.6 418.7L940.4 418.7L941.2 418.9L942.0 419.0L943.0 419.1L944.1 419.3L945.4 419.6L946.8 419.9L948.2 420.2L949.4 420.4L950.5 420.4L951.4 420.3L952.2 420.1L952.9 419.8L953.5 419.4L954.0 418.9L954.5 418.3L954.9 417.6L955.2 416.8L955.5 415.8L955.6 414.8L955.6 413.7L955.5 412.6L955.2 411.4L954.7 410.0L954.1 408.6L953.4 407.3L952.7 405.9L952.0 404.8L951.3 403.7L950.4 402.8L949.5 401.9L948.8 401.1L948.2 400.2L948.0 399.3L948.2 398.4L948.7 397.4L949.5 396.5L950.3 395.5L951.2 394.6L952.0 393.8L952.8 392.9L953.8 392.2L954.8 391.4L955.7 390.7L956.3 390.0L956.5 389.3L956.2 388.6L955.4 388.0L954.3 387.4L953.2 386.8L952.0 386.2L951.0 385.5L950.1 384.9L949.1 384.3L948.1 383.6L947.2 383.0L946.5 382.2L946.0 381.4L945.8 380.4L945.8 379.4L945.9 378.3L946.1 377.1L946.4 375.8L946.5 374.5L946.6 372.9L946.7 371.2L946.9 369.4L947.0 367.6L947.0 366.0L947.0 364.6L946.9 363.4L946.8 362.4L946.7 361.5L946.4 360.8L946.1 360.2L945.5 359.7L944.7 359.4L943.7 359.3L942.5 359.4L941.3 359.5L940.1 359.6L939.0 359.7L937.9 359.9L936.7 360.1L935.6 360.4L934.5 360.6L933.6 360.6L933.0 360.3L932.7 359.7L932.7 358.9L932.8 357.8L933.1 356.7L933.3 355.5L933.5 354.4L933.6 353.3L933.7 352.1L933.8 350.9L933.9 349.7L933.9 348.6L934.0 347.5L934.1 346.6L934.1 345.7L934.2 344.9L934.2 344.1L934.2 343.4L934.0 342.5L933.8 341.7L933.4 340.8L933.0 339.8L932.6 339.0L932.1 338.2L931.5 337.5L930.9 336.9L930.2 336.4L929.5 336.0L928.7 335.6L927.9 335.2L927.0 334.9L926.0 334.6L924.9 334.3L923.7 334.0L922.6 333.8L921.7 333.6L921.0 333.5L921.0 313.5Z"/><path d="M913.5 461.1L933.5 465.8L933.9 459.1L935.0 452.8L936.8 447.0L939.2 441.8L942.3 437.4L945.9 433.9L949.9 431.3L954.2 429.7L958.8 429.2L963.5 429.8L968.2 431.4L972.8 434.1L977.1 437.7L981.1 442.1L984.7 447.4L987.8 453.2L990.2 459.5L992.0 466.2L993.1 473.0L993.5 479.8L1014.2 484.7L1014.2 504.7L1014.9 504.8L1015.9 505.0L1017.0 505.2L1018.1 505.5L1019.3 505.8L1020.2 506.1L1021.1 506.4L1021.9 506.8L1022.7 507.1L1023.5 507.6L1024.1 508.0L1024.8 508.6L1025.3 509.3L1025.8 510.1L1026.3 511.0L1026.7 511.9L1027.0 512.8L1027.2 513.7L1027.4 514.5L1027.5 515.3L1027.4 516.1L1027.4 516.9L1027.3 517.8L1027.2 518.7L1027.2 519.8L1027.1 520.9L1027.0 522.1L1026.9 523.3L1026.8 524.5L1026.8 525.6L1026.6 526.7L1026.3 527.9L1026.1 529.0L1025.9 530.0L1026.0 530.9L1026.2 531.5L1026.9 531.8L1027.8 531.7L1028.8 531.6L1030.0 531.3L1031.1 531.0L1032.2 530.9L1033.4 530.8L1034.6 530.7L1035.8 530.6L1036.9 530.5L1038.0 530.6L1038.8 530.9L1039.3 531.4L1039.7 532.0L1039.9 532.7L1040.1 533.6L1040.2 534.6L1040.2 535.8L1040.3 537.2L1040.2 538.8L1040.1 540.6L1040.0 542.4L1039.9 544.1L1039.8 545.6L1039.6 547.0L1039.4 548.3L1039.2 549.4L1039.0 550.5L1039.0 551.6L1039.2 552.5L1039.8 553.4L1040.5 554.1L1041.4 554.8L1042.3 555.4L1043.3 556.1L1044.2 556.7L1045.3 557.3L1046.4 558.0L1047.6 558.6L1048.6 559.2L1049.4 559.8L1049.8 560.5L1049.6 561.2L1049.0 561.9L1048.1 562.6L1047.1 563.3L1046.1 564.1L1045.2 564.9L1044.5 565.8L1043.6 566.7L1042.7 567.6L1042.0 568.6L1041.4 569.6L1041.2 570.5L1041.5 571.4L1042.0 572.2L1042.8 573.1L1043.7 573.9L1044.5 574.9L1045.2 575.9L1045.9 577.1L1046.6 578.4L1047.3 579.8L1047.9 581.2L1048.4 582.5L1048.8 583.7L1048.9 584.9L1048.9 586.0L1048.7 587.0L1048.5 587.9L1048.1 588.8L1047.8 589.5L1047.3 590.1L1046.8 590.6L1046.2 591.0L1045.5 591.3L1044.7 591.5L1043.8 591.6L1042.7 591.5L1041.4 591.4L1040.1 591.1L1038.7 590.8L1037.4 590.5L1036.2 590.3L1035.3 590.2L1034.4 590.0L1033.7 589.9L1032.9 589.9L1032.1 589.9L1031.2 590.2L1030.3 590.6L1029.2 591.2L1028.2 591.9L1027.1 592.7L1026.1 593.5L1025.2 594.2L1024.5 595.0L1023.8 595.7L1023.1 596.5L1022.5 597.2L1021.9 597.8L1021.2 598.3L1020.6 598.6L1019.9 598.8L1019.2 598.9L1018.5 598.9L1017.9 598.9L1017.2 598.9L1016.7 598.8L1016.1 598.7L1015.5 598.6L1015.0 598.4L1014.6 598.3L1014.2 598.2L1014.2 631.3L993.5 626.4L993.1 619.6L992.0 612.8L990.2 606.1L987.8 599.8L984.7 594.0L981.1 588.7L977.1 584.3L972.8 580.7L968.2 578.0L963.5 576.4L958.8 575.8L954.2 576.3L949.9 577.9L945.9 580.5L942.3 584.0L939.2 588.4L936.8 593.6L935.0 599.4L933.9 605.7L933.5 612.4L913.5 607.7L913.5 574.6L913.8 574.7L914.2 574.8L914.8 575.0L915.3 575.1L915.9 575.3L916.5 575.3L917.1 575.3L917.8 575.3L918.4 575.3L919.1 575.2L919.8 575.0L920.5 574.7L921.1 574.3L921.8 573.6L922.4 572.9L923.0 572.2L923.7 571.4L924.5 570.7L925.4 569.9L926.4 569.2L927.4 568.4L928.5 567.6L929.5 567.0L930.5 566.6L931.4 566.3L932.1 566.3L932.9 566.3L933.7 566.5L934.5 566.6L935.5 566.7L936.6 566.9L937.9 567.2L939.3 567.5L940.7 567.8L941.9 568.0L943.0 568.0L943.9 567.9L944.7 567.7L945.4 567.4L946.0 567.0L946.5 566.5L947.0 565.9L947.4 565.2L947.7 564.4L948.0 563.4L948.1 562.4L948.1 561.3L948.0 560.2L947.7 559.0L947.2 557.6L946.6 556.2L945.9 554.9L945.2 553.5L944.5 552.4L943.8 551.3L942.9 550.4L942.0 549.5L941.3 548.7L940.7 547.8L940.5 546.9L940.7 546.0L941.2 545.0L942.0 544.1L942.8 543.1L943.7 542.2L944.5 541.4L945.3 540.5L946.3 539.8L947.3 539.0L948.2 538.3L948.8 537.6L949.0 536.9L948.7 536.2L947.9 535.6L946.8 535.0L945.7 534.4L944.5 533.8L943.5 533.1L942.6 532.5L941.6 531.9L940.6 531.2L939.7 530.6L939.0 529.8L938.5 529.0L938.3 528.0L938.3 527.0L938.4 525.9L938.6 524.7L938.9 523.4L939.0 522.1L939.1 520.5L939.2 518.8L939.4 517.0L939.5 515.2L939.5 513.6L939.5 512.2L939.4 511.0L939.3 510.0L939.2 509.1L938.9 508.4L938.6 507.8L938.0 507.3L937.2 507.0L936.2 506.9L935.0 507.0L933.8 507.1L932.6 507.2L931.5 507.3L930.4 507.5L929.2 507.7L928.1 508.0L927.0 508.2L926.1 508.2L925.5 507.9L925.2 507.3L925.2 506.5L925.3 505.4L925.6 504.3L925.8 503.1L926.0 502.0L926.1 500.9L926.2 499.7L926.3 498.5L926.4 497.3L926.4 496.2L926.5 495.1L926.6 494.2L926.6 493.3L926.7 492.5L926.7 491.7L926.7 491.0L926.5 490.1L926.3 489.3L925.9 488.4L925.5 487.4L925.1 486.6L924.6 485.8L924.0 485.1L923.4 484.5L922.7 484.0L922.0 483.6L921.2 483.2L920.4 482.8L919.5 482.5L918.5 482.2L917.4 481.9L916.2 481.6L915.1 481.4L914.2 481.2L913.5 481.1L913.5 461.1Z"/><path d="M921.0 460.1L941.0 464.8L941.4 458.1L942.5 451.8L944.3 446.0L946.7 440.8L949.8 436.4L953.4 432.9L957.4 430.3L961.7 428.7L966.3 428.2L971.0 428.8L975.7 430.4L980.3 433.1L984.6 436.7L988.6 441.1L992.2 446.4L995.3 452.2L997.7 458.5L999.5 465.2L1000.6 472.0L1001.0 478.8L1021.8 483.7L1021.8 503.7L1022.4 503.8L1023.4 504.0L1024.5 504.2L1025.6 504.5L1026.8 504.8L1027.8 505.1L1028.6 505.4L1029.4 505.8L1030.2 506.1L1031.0 506.6L1031.6 507.0L1032.2 507.6L1032.8 508.3L1033.3 509.1L1033.8 510.0L1034.2 510.9L1034.5 511.8L1034.8 512.7L1034.9 513.5L1035.0 514.3L1034.9 515.1L1034.9 515.9L1034.8 516.8L1034.8 517.7L1034.7 518.8L1034.6 519.9L1034.5 521.1L1034.4 522.3L1034.3 523.5L1034.2 524.6L1034.1 525.7L1033.8 526.9L1033.6 528.0L1033.4 529.0L1033.5 529.9L1033.8 530.5L1034.4 530.8L1035.2 530.7L1036.3 530.6L1037.5 530.3L1038.6 530.0L1039.8 529.9L1040.9 529.8L1042.1 529.7L1043.3 529.6L1044.4 529.5L1045.5 529.6L1046.2 529.9L1046.8 530.4L1047.2 531.0L1047.4 531.7L1047.6 532.6L1047.7 533.6L1047.8 534.8L1047.8 536.2L1047.7 537.8L1047.6 539.6L1047.5 541.4L1047.4 543.1L1047.2 544.6L1047.1 546.0L1046.9 547.3L1046.7 548.4L1046.5 549.5L1046.5 550.6L1046.8 551.5L1047.3 552.4L1048.0 553.1L1048.9 553.8L1049.8 554.4L1050.8 555.1L1051.8 555.7L1052.8 556.3L1053.9 557.0L1055.1 557.6L1056.1 558.2L1056.9 558.8L1057.2 559.5L1057.1 560.2L1056.5 560.9L1055.6 561.6L1054.6 562.3L1053.6 563.1L1052.8 563.9L1052.0 564.8L1051.1 565.7L1050.2 566.6L1049.5 567.6L1048.9 568.6L1048.8 569.5L1049.0 570.4L1049.5 571.2L1050.3 572.1L1051.2 572.9L1052.0 573.9L1052.8 574.9L1053.4 576.1L1054.1 577.4L1054.8 578.8L1055.4 580.2L1055.9 581.5L1056.2 582.7L1056.4 583.9L1056.4 585.0L1056.2 586.0L1056.0 586.9L1055.6 587.8L1055.2 588.5L1054.8 589.1L1054.3 589.6L1053.7 590.0L1053.0 590.3L1052.2 590.5L1051.2 590.6L1050.2 590.5L1048.9 590.4L1047.6 590.1L1046.2 589.8L1044.9 589.5L1043.8 589.3L1042.8 589.2L1041.9 589.0L1041.2 588.9L1040.4 588.9L1039.6 588.9L1038.8 589.2L1037.8 589.6L1036.8 590.2L1035.7 590.9L1034.6 591.7L1033.6 592.5L1032.8 593.2L1032.0 594.0L1031.3 594.7L1030.6 595.5L1030.0 596.2L1029.4 596.8L1028.8 597.3L1028.1 597.6L1027.4 597.8L1026.7 597.9L1026.0 597.9L1025.4 597.9L1024.8 597.9L1024.2 597.8L1023.6 597.7L1023.0 597.6L1022.5 597.4L1022.1 597.3L1021.8 597.2L1021.8 630.3L1001.0 625.4L1000.6 618.6L999.5 611.8L997.7 605.1L995.3 598.8L992.2 593.0L988.6 587.7L984.6 583.3L980.3 579.7L975.7 577.0L971.0 575.4L966.3 574.8L961.7 575.3L957.4 576.9L953.4 579.5L949.8 583.0L946.7 587.4L944.3 592.6L942.5 598.4L941.4 604.7L941.0 611.4L921.0 606.7L921.0 573.6L921.3 573.7L921.7 573.8L922.2 574.0L922.8 574.1L923.4 574.3L924.0 574.3L924.6 574.3L925.3 574.3L925.9 574.3L926.6 574.2L927.3 574.0L928.0 573.7L928.6 573.3L929.3 572.6L929.9 571.9L930.5 571.2L931.2 570.4L932.0 569.7L932.9 568.9L933.9 568.2L934.9 567.4L936.0 566.6L937.0 566.0L938.0 565.6L938.9 565.3L939.6 565.3L940.4 565.3L941.2 565.5L942.0 565.6L943.0 565.7L944.1 565.9L945.4 566.2L946.8 566.5L948.2 566.8L949.4 567.0L950.5 567.0L951.4 566.9L952.2 566.7L952.9 566.4L953.5 566.0L954.0 565.5L954.5 564.9L954.9 564.2L955.2 563.4L955.5 562.4L955.6 561.4L955.6 560.3L955.5 559.2L955.2 558.0L954.7 556.6L954.1 555.2L953.4 553.9L952.7 552.5L952.0 551.4L951.3 550.3L950.4 549.4L949.5 548.5L948.8 547.7L948.2 546.8L948.0 545.9L948.2 545.0L948.7 544.0L949.5 543.1L950.3 542.1L951.2 541.2L952.0 540.4L952.8 539.5L953.8 538.8L954.8 538.0L955.7 537.3L956.3 536.6L956.5 535.9L956.2 535.2L955.4 534.6L954.3 534.0L953.2 533.4L952.0 532.8L951.0 532.1L950.1 531.5L949.1 530.9L948.1 530.2L947.2 529.6L946.5 528.8L946.0 528.0L945.8 527.0L945.8 526.0L945.9 524.9L946.1 523.7L946.4 522.4L946.5 521.1L946.6 519.5L946.7 517.8L946.9 516.0L947.0 514.2L947.0 512.6L947.0 511.2L946.9 510.0L946.8 509.0L946.7 508.1L946.4 507.4L946.1 506.8L945.5 506.3L944.7 506.0L943.7 505.9L942.5 506.0L941.3 506.1L940.1 506.2L939.0 506.3L937.9 506.5L936.7 506.7L935.6 507.0L934.5 507.2L933.6 507.2L933.0 506.9L932.7 506.3L932.7 505.5L932.8 504.4L933.1 503.3L933.3 502.1L933.5 501.0L933.6 499.9L933.7 498.7L933.8 497.5L933.9 496.3L933.9 495.2L934.0 494.1L934.1 493.2L934.1 492.3L934.2 491.5L934.2 490.7L934.2 490.0L934.0 489.1L933.8 488.3L933.4 487.4L933.0 486.4L932.6 485.6L932.1 484.8L931.5 484.1L930.9 483.5L930.2 483.0L929.5 482.6L928.7 482.2L927.9 481.8L927.0 481.5L926.0 481.2L924.9 480.9L923.7 480.6L922.6 480.4L921.7 480.2L921.0 480.1L921.0 460.1Z"/><path d="M913.5 607.7L933.5 612.4L933.9 605.7L935.0 599.4L936.8 593.6L939.2 588.4L942.3 584.0L945.9 580.5L949.9 577.9L954.2 576.3L958.8 575.8L963.5 576.4L968.2 578.0L972.8 580.7L977.1 584.3L981.1 588.7L984.7 594.0L987.8 599.8L990.2 606.1L992.0 612.8L993.1 619.6L993.5 626.4L1014.2 631.3L1014.2 651.3L1014.9 651.4L1015.9 651.6L1017.0 651.8L1018.1 652.1L1019.3 652.4L1020.2 652.7L1021.1 653.0L1021.9 653.4L1022.7 653.7L1023.5 654.2L1024.1 654.6L1024.8 655.2L1025.3 655.9L1025.8 656.7L1026.3 657.6L1026.7 658.5L1027.0 659.4L1027.2 660.3L1027.4 661.1L1027.5 661.9L1027.4 662.7L1027.4 663.5L1027.3 664.4L1027.2 665.3L1027.2 666.4L1027.1 667.5L1027.0 668.7L1026.9 669.9L1026.8 671.1L1026.8 672.2L1026.6 673.3L1026.3 674.5L1026.1 675.6L1025.9 676.6L1026.0 677.5L1026.2 678.1L1026.9 678.4L1027.8 678.3L1028.8 678.2L1030.0 677.9L1031.1 677.6L1032.2 677.5L1033.4 677.4L1034.6 677.3L1035.8 677.2L1036.9 677.1L1038.0 677.2L1038.8 677.5L1039.3 678.0L1039.7 678.6L1039.9 679.3L1040.1 680.2L1040.2 681.2L1040.2 682.4L1040.3 683.8L1040.2 685.4L1040.1 687.2L1040.0 689.0L1039.9 690.7L1039.8 692.2L1039.6 693.6L1039.4 694.9L1039.2 696.0L1039.0 697.1L1039.0 698.2L1039.2 699.1L1039.8 700.0L1040.5 700.7L1041.4 701.4L1042.3 702.0L1043.3 702.7L1044.2 703.3L1045.3 703.9L1046.4 704.6L1047.6 705.2L1048.6 705.8L1049.4 706.4L1049.8 707.1L1049.6 707.8L1049.0 708.5L1048.1 709.2L1047.1 709.9L1046.1 710.7L1045.2 711.5L1044.5 712.4L1043.6 713.3L1042.7 714.2L1042.0 715.2L1041.4 716.2L1041.2 717.1L1041.5 718.0L1042.0 718.8L1042.8 719.7L1043.7 720.5L1044.5 721.5L1045.2 722.5L1045.9 723.7L1046.6 725.0L1047.3 726.4L1047.9 727.8L1048.4 729.1L1048.8 730.3L1048.9 731.5L1048.9 732.6L1048.7 733.6L1048.5 734.5L1048.1 735.4L1047.8 736.1L1047.3 736.7L1046.8 737.2L1046.2 737.6L1045.5 737.9L1044.7 738.1L1043.8 738.2L1042.7 738.1L1041.4 738.0L1040.1 737.7L1038.7 737.4L1037.4 737.1L1036.2 736.9L1035.3 736.8L1034.4 736.6L1033.7 736.5L1032.9 736.5L1032.1 736.5L1031.2 736.8L1030.3 737.2L1029.2 737.8L1028.2 738.5L1027.1 739.3L1026.1 740.1L1025.2 740.8L1024.5 741.6L1023.8 742.3L1023.1 743.1L1022.5 743.8L1021.9 744.4L1021.2 744.9L1020.6 745.2L1019.9 745.4L1019.2 745.5L1018.5 745.5L1017.9 745.5L1017.2 745.5L1016.7 745.4L1016.1 745.3L1015.5 745.2L1015.0 745.0L1014.6 744.9L1014.2 744.8L1014.2 777.9L993.5 773.0L993.1 766.2L992.0 759.4L990.2 752.7L987.8 746.4L984.7 740.6L981.1 735.3L977.1 730.9L972.8 727.3L968.2 724.6L963.5 723.0L958.8 722.4L954.2 722.9L949.9 724.5L945.9 727.1L942.3 730.6L939.2 735.0L936.8 740.2L935.0 746.0L933.9 752.3L933.5 759.0L913.5 754.3L913.5 721.2L913.8 721.3L914.2 721.4L914.8 721.6L915.3 721.7L915.9 721.9L916.5 721.9L917.1 721.9L917.8 721.9L918.4 721.9L919.1 721.8L919.8 721.6L920.5 721.3L921.1 720.9L921.8 720.2L922.4 719.5L923.0 718.8L923.7 718.0L924.5 717.3L925.4 716.5L926.4 715.8L927.4 715.0L928.5 714.2L929.5 713.6L930.5 713.2L931.4 712.9L932.1 712.9L932.9 712.9L933.7 713.1L934.5 713.2L935.5 713.3L936.6 713.5L937.9 713.8L939.3 714.1L940.7 714.4L941.9 714.6L943.0 714.6L943.9 714.5L944.7 714.3L945.4 714.0L946.0 713.6L946.5 713.1L947.0 712.5L947.4 711.8L947.7 711.0L948.0 710.0L948.1 709.0L948.1 707.9L948.0 706.8L947.7 705.6L947.2 704.2L946.6 702.8L945.9 701.5L945.2 700.1L944.5 699.0L943.8 697.9L942.9 697.0L942.0 696.1L941.3 695.3L940.7 694.4L940.5 693.5L940.7 692.6L941.2 691.6L942.0 690.7L942.8 689.7L943.7 688.8L944.5 688.0L945.3 687.1L946.3 686.4L947.3 685.6L948.2 684.9L948.8 684.2L949.0 683.5L948.7 682.8L947.9 682.2L946.8 681.6L945.7 681.0L944.5 680.4L943.5 679.7L942.6 679.1L941.6 678.5L940.6 677.8L939.7 677.2L939.0 676.4L938.5 675.6L938.3 674.6L938.3 673.6L938.4 672.5L938.6 671.3L938.9 670.0L939.0 668.7L939.1 667.1L939.2 665.4L939.4 663.6L939.5 661.8L939.5 660.2L939.5 658.8L939.4 657.6L939.3 656.6L939.2 655.7L938.9 655.0L938.6 654.4L938.0 653.9L937.2 653.6L936.2 653.5L935.0 653.6L933.8 653.7L932.6 653.8L931.5 653.9L930.4 654.1L929.2 654.3L928.1 654.6L927.0 654.8L926.1 654.8L925.5 654.5L925.2 653.9L925.2 653.1L925.3 652.0L925.6 650.9L925.8 649.7L926.0 648.6L926.1 647.5L926.2 646.3L926.3 645.1L926.4 643.9L926.4 642.8L926.5 641.7L926.6 640.8L926.6 639.9L926.7 639.1L926.7 638.3L926.7 637.6L926.5 636.7L926.3 635.9L925.9 635.0L925.5 634.0L925.1 633.2L924.6 632.4L924.0 631.7L923.4 631.1L922.7 630.6L922.0 630.2L921.2 629.8L920.4 629.4L919.5 629.1L918.5 628.8L917.4 628.5L916.2 628.2L915.1 628.0L914.2 627.8L913.5 627.7L913.5 607.7Z"/><path d="M921.0 606.7L941.0 611.4L941.4 604.7L942.5 598.4L944.3 592.6L946.7 587.4L949.8 583.0L953.4 579.5L957.4 576.9L961.7 575.3L966.3 574.8L971.0 575.4L975.7 577.0L980.3 579.7L984.6 583.3L988.6 587.7L992.2 593.0L995.3 598.8L997.7 605.1L999.5 611.8L1000.6 618.6L1001.0 625.4L1021.8 630.3L1021.8 650.3L1022.4 650.4L1023.4 650.6L1024.5 650.8L1025.6 651.1L1026.8 651.4L1027.8 651.7L1028.6 652.0L1029.4 652.4L1030.2 652.7L1031.0 653.2L1031.6 653.6L1032.2 654.2L1032.8 654.9L1033.3 655.7L1033.8 656.6L1034.2 657.5L1034.5 658.4L1034.8 659.3L1034.9 660.1L1035.0 660.9L1034.9 661.7L1034.9 662.5L1034.8 663.4L1034.8 664.3L1034.7 665.4L1034.6 666.5L1034.5 667.7L1034.4 668.9L1034.3 670.1L1034.2 671.2L1034.1 672.3L1033.8 673.5L1033.6 674.6L1033.4 675.6L1033.5 676.5L1033.8 677.1L1034.4 677.4L1035.2 677.3L1036.3 677.2L1037.5 676.9L1038.6 676.6L1039.8 676.5L1040.9 676.4L1042.1 676.3L1043.3 676.2L1044.4 676.1L1045.5 676.2L1046.2 676.5L1046.8 677.0L1047.2 677.6L1047.4 678.3L1047.6 679.2L1047.7 680.2L1047.8 681.4L1047.8 682.8L1047.7 684.4L1047.6 686.2L1047.5 688.0L1047.4 689.7L1047.2 691.2L1047.1 692.6L1046.9 693.9L1046.7 695.0L1046.5 696.1L1046.5 697.2L1046.8 698.1L1047.3 699.0L1048.0 699.7L1048.9 700.4L1049.8 701.0L1050.8 701.7L1051.8 702.3L1052.8 702.9L1053.9 703.6L1055.1 704.2L1056.1 704.8L1056.9 705.4L1057.2 706.1L1057.1 706.8L1056.5 707.5L1055.6 708.2L1054.6 708.9L1053.6 709.7L1052.8 710.5L1052.0 711.4L1051.1 712.3L1050.2 713.2L1049.5 714.2L1048.9 715.2L1048.8 716.1L1049.0 717.0L1049.5 717.8L1050.3 718.7L1051.2 719.5L1052.0 720.5L1052.8 721.5L1053.4 722.7L1054.1 724.0L1054.8 725.4L1055.4 726.8L1055.9 728.1L1056.2 729.3L1056.4 730.5L1056.4 731.6L1056.2 732.6L1056.0 733.5L1055.6 734.4L1055.2 735.1L1054.8 735.7L1054.3 736.2L1053.7 736.6L1053.0 736.9L1052.2 737.1L1051.2 737.2L1050.2 737.1L1048.9 737.0L1047.6 736.7L1046.2 736.4L1044.9 736.1L1043.8 735.9L1042.8 735.8L1041.9 735.6L1041.2 735.5L1040.4 735.5L1039.6 735.5L1038.8 735.8L1037.8 736.2L1036.8 736.8L1035.7 737.5L1034.6 738.3L1033.6 739.1L1032.8 739.8L1032.0 740.6L1031.3 741.3L1030.6 742.1L1030.0 742.8L1029.4 743.4L1028.8 743.9L1028.1 744.2L1027.4 744.4L1026.7 744.5L1026.0 744.5L1025.4 744.5L1024.8 744.5L1024.2 744.4L1023.6 744.3L1023.0 744.2L1022.5 744.0L1022.1 743.9L1021.8 743.8L1021.8 776.9L1001.0 772.0L1000.6 765.2L999.5 758.4L997.7 751.7L995.3 745.4L992.2 739.6L988.6 734.3L984.6 729.9L980.3 726.3L975.7 723.6L971.0 722.0L966.3 721.4L961.7 721.9L957.4 723.5L953.4 726.1L949.8 729.6L946.7 734.0L944.3 739.2L942.5 745.0L941.4 751.3L941.0 758.0L921.0 753.3L921.0 720.2L921.3 720.3L921.7 720.4L922.2 720.6L922.8 720.7L923.4 720.9L924.0 720.9L924.6 720.9L925.3 720.9L925.9 720.9L926.6 720.8L927.3 720.6L928.0 720.3L928.6 719.9L929.3 719.2L929.9 718.5L930.5 717.8L931.2 717.0L932.0 716.3L932.9 715.5L933.9 714.8L934.9 714.0L936.0 713.2L937.0 712.6L938.0 712.2L938.9 711.9L939.6 711.9L940.4 711.9L941.2 712.1L942.0 712.2L943.0 712.3L944.1 712.5L945.4 712.8L946.8 713.1L948.2 713.4L949.4 713.6L950.5 713.6L951.4 713.5L952.2 713.3L952.9 713.0L953.5 712.6L954.0 712.1L954.5 711.5L954.9 710.8L955.2 710.0L955.5 709.0L955.6 708.0L955.6 706.9L955.5 705.8L955.2 704.6L954.7 703.2L954.1 701.8L953.4 700.5L952.7 699.1L952.0 698.0L951.3 696.9L950.4 696.0L949.5 695.1L948.8 694.3L948.2 693.4L948.0 692.5L948.2 691.6L948.7 690.6L949.5 689.7L950.3 688.7L951.2 687.8L952.0 687.0L952.8 686.1L953.8 685.4L954.8 684.6L955.7 683.9L956.3 683.2L956.5 682.5L956.2 681.8L955.4 681.2L954.3 680.6L953.2 680.0L952.0 679.4L951.0 678.7L950.1 678.1L949.1 677.5L948.1 676.8L947.2 676.2L946.5 675.4L946.0 674.5L945.8 673.6L945.8 672.6L945.9 671.5L946.1 670.3L946.4 669.0L946.5 667.7L946.6 666.1L946.7 664.4L946.9 662.6L947.0 660.8L947.0 659.2L947.0 657.8L946.9 656.6L946.8 655.6L946.7 654.7L946.4 654.0L946.1 653.4L945.5 652.9L944.7 652.6L943.7 652.5L942.5 652.6L941.3 652.7L940.1 652.8L939.0 652.9L937.9 653.1L936.7 653.3L935.6 653.6L934.5 653.8L933.6 653.8L933.0 653.5L932.7 652.9L932.7 652.1L932.8 651.0L933.1 649.9L933.3 648.7L933.5 647.6L933.6 646.5L933.7 645.3L933.8 644.1L933.9 642.9L933.9 641.8L934.0 640.7L934.1 639.8L934.1 638.9L934.2 638.1L934.2 637.3L934.2 636.6L934.0 635.7L933.8 634.9L933.4 634.0L933.0 633.0L932.6 632.2L932.1 631.4L931.5 630.7L930.9 630.1L930.2 629.6L929.5 629.2L928.7 628.8L927.9 628.4L927.0 628.1L926.0 627.8L924.9 627.5L923.7 627.2L922.6 627.0L921.7 626.8L921.0 626.7L921.0 606.7Z"/><path d="M1014.2 338.1L1034.2 342.8L1034.6 336.1L1035.7 329.8L1037.5 324.0L1040.0 318.8L1043.0 314.4L1046.6 310.9L1050.6 308.3L1055.0 306.7L1059.6 306.2L1064.2 306.8L1068.9 308.4L1073.5 311.0L1077.9 314.6L1081.9 319.1L1085.5 324.3L1088.5 330.2L1091.0 336.5L1092.8 343.2L1093.9 350.0L1094.2 356.8L1115.0 361.7L1115.0 381.7L1115.7 381.8L1116.6 382.0L1117.7 382.2L1118.9 382.4L1120.0 382.7L1121.0 383.1L1121.9 383.4L1122.7 383.7L1123.5 384.1L1124.2 384.5L1124.9 385.0L1125.5 385.6L1126.1 386.3L1126.6 387.1L1127.0 388.0L1127.4 388.9L1127.8 389.8L1128.0 390.7L1128.2 391.5L1128.2 392.3L1128.2 393.1L1128.1 393.9L1128.1 394.8L1128.0 395.7L1127.9 396.7L1127.9 397.9L1127.8 399.1L1127.7 400.3L1127.6 401.5L1127.5 402.6L1127.3 403.7L1127.1 404.9L1126.8 406.0L1126.7 407.0L1126.7 407.9L1127.0 408.5L1127.6 408.7L1128.5 408.7L1129.6 408.5L1130.7 408.3L1131.9 408.0L1133.0 407.9L1134.1 407.8L1135.3 407.6L1136.5 407.5L1137.7 407.5L1138.7 407.6L1139.5 407.9L1140.1 408.4L1140.4 409.0L1140.7 409.7L1140.8 410.6L1140.9 411.6L1141.0 412.7L1141.0 414.1L1141.0 415.8L1140.9 417.5L1140.7 419.4L1140.6 421.1L1140.5 422.6L1140.4 424.0L1140.1 425.2L1139.9 426.4L1139.8 427.5L1139.8 428.5L1140.0 429.5L1140.5 430.4L1141.2 431.1L1142.1 431.8L1143.1 432.4L1144.1 433.0L1145.0 433.7L1146.0 434.3L1147.2 434.9L1148.3 435.5L1149.4 436.2L1150.2 436.8L1150.5 437.5L1150.3 438.1L1149.7 438.9L1148.8 439.6L1147.8 440.3L1146.8 441.1L1146.0 441.9L1145.2 442.8L1144.3 443.7L1143.5 444.6L1142.7 445.6L1142.2 446.5L1142.0 447.5L1142.2 448.4L1142.8 449.2L1143.5 450.0L1144.4 450.9L1145.3 451.9L1146.0 452.9L1146.7 454.1L1147.4 455.4L1148.1 456.8L1148.7 458.2L1149.2 459.5L1149.5 460.7L1149.6 461.8L1149.6 462.9L1149.5 464.0L1149.2 464.9L1148.9 465.8L1148.5 466.5L1148.0 467.1L1147.5 467.6L1146.9 468.0L1146.2 468.2L1145.4 468.4L1144.5 468.6L1143.4 468.5L1142.2 468.3L1140.8 468.1L1139.4 467.8L1138.1 467.5L1137.0 467.3L1136.0 467.2L1135.2 467.0L1134.4 466.9L1133.6 466.8L1132.9 466.9L1132.0 467.1L1131.0 467.6L1130.0 468.2L1128.9 468.9L1127.9 469.7L1126.9 470.5L1126.0 471.2L1125.2 471.9L1124.5 472.7L1123.9 473.5L1123.3 474.2L1122.6 474.8L1122.0 475.3L1121.3 475.6L1120.6 475.8L1119.9 475.9L1119.3 475.9L1118.6 475.9L1118.0 475.9L1117.4 475.8L1116.8 475.7L1116.2 475.5L1115.7 475.4L1115.3 475.2L1115.0 475.2L1115.0 508.3L1094.2 503.4L1093.9 496.6L1092.8 489.8L1091.0 483.1L1088.5 476.8L1085.5 470.9L1081.9 465.7L1077.9 461.2L1073.5 457.6L1068.9 455.0L1064.2 453.4L1059.6 452.8L1055.0 453.3L1050.6 454.9L1046.6 457.5L1043.0 461.0L1040.0 465.4L1037.5 470.6L1035.7 476.4L1034.6 482.7L1034.2 489.4L1014.2 484.7L1014.2 451.6L1014.6 451.7L1015.0 451.8L1015.5 452.0L1016.1 452.1L1016.7 452.2L1017.2 452.3L1017.9 452.3L1018.5 452.3L1019.2 452.3L1019.9 452.2L1020.6 452.0L1021.2 451.7L1021.9 451.2L1022.5 450.6L1023.1 449.9L1023.8 449.1L1024.5 448.4L1025.2 447.6L1026.1 446.9L1027.1 446.1L1028.2 445.3L1029.2 444.6L1030.3 444.0L1031.2 443.6L1032.1 443.3L1032.9 443.3L1033.7 443.3L1034.4 443.4L1035.3 443.6L1036.2 443.7L1037.4 443.9L1038.7 444.2L1040.1 444.5L1041.4 444.8L1042.7 444.9L1043.8 445.0L1044.7 444.9L1045.5 444.7L1046.2 444.4L1046.8 444.0L1047.3 443.5L1047.8 442.9L1048.1 442.2L1048.5 441.3L1048.7 440.4L1048.9 439.4L1048.9 438.3L1048.8 437.1L1048.4 435.9L1047.9 434.6L1047.3 433.2L1046.6 431.8L1045.9 430.5L1045.2 429.3L1044.5 428.3L1043.7 427.3L1042.8 426.5L1042.0 425.6L1041.5 424.8L1041.2 423.9L1041.4 423.0L1042.0 422.0L1042.7 421.0L1043.6 420.1L1044.5 419.2L1045.2 418.3L1046.1 417.5L1047.1 416.7L1048.1 416.0L1049.0 415.3L1049.6 414.6L1049.8 413.9L1049.4 413.2L1048.6 412.6L1047.6 412.0L1046.4 411.4L1045.3 410.7L1044.2 410.1L1043.3 409.5L1042.3 408.8L1041.4 408.2L1040.5 407.5L1039.8 406.8L1039.2 405.9L1039.0 405.0L1039.0 403.9L1039.2 402.8L1039.4 401.7L1039.6 400.4L1039.8 399.0L1039.9 397.5L1040.0 395.8L1040.1 394.0L1040.2 392.2L1040.3 390.6L1040.2 389.2L1040.2 388.0L1040.1 387.0L1039.9 386.1L1039.7 385.4L1039.3 384.8L1038.8 384.3L1038.0 384.0L1036.9 383.9L1035.8 384.0L1034.6 384.1L1033.4 384.2L1032.2 384.3L1031.1 384.4L1030.0 384.7L1028.8 385.0L1027.8 385.1L1026.9 385.2L1026.2 384.9L1026.0 384.3L1025.9 383.4L1026.1 382.4L1026.3 381.3L1026.6 380.1L1026.8 379.0L1026.8 377.9L1026.9 376.7L1027.0 375.5L1027.1 374.3L1027.2 373.2L1027.2 372.1L1027.3 371.2L1027.4 370.3L1027.4 369.5L1027.5 368.7L1027.4 367.9L1027.2 367.1L1027.0 366.2L1026.7 365.3L1026.3 364.4L1025.8 363.5L1025.3 362.7L1024.8 362.0L1024.1 361.4L1023.5 361.0L1022.7 360.5L1021.9 360.2L1021.1 359.8L1020.2 359.5L1019.3 359.2L1018.1 358.9L1017.0 358.6L1015.9 358.4L1014.9 358.2L1014.2 358.1L1014.2 338.1Z"/><path d="M1021.8 337.1L1041.8 341.8L1042.1 335.1L1043.2 328.8L1045.0 323.0L1047.5 317.8L1050.5 313.4L1054.1 309.9L1058.1 307.3L1062.5 305.7L1067.1 305.2L1071.8 305.8L1076.4 307.4L1081.0 310.0L1085.4 313.6L1089.4 318.1L1093.0 323.3L1096.0 329.2L1098.5 335.5L1100.3 342.2L1101.4 349.0L1101.8 355.8L1122.5 360.7L1122.5 380.7L1123.2 380.8L1124.1 381.0L1125.2 381.2L1126.4 381.4L1127.5 381.7L1128.5 382.1L1129.4 382.4L1130.2 382.7L1131.0 383.1L1131.7 383.5L1132.4 384.0L1133.0 384.6L1133.6 385.3L1134.1 386.1L1134.5 387.0L1134.9 387.9L1135.3 388.8L1135.5 389.7L1135.7 390.5L1135.7 391.3L1135.7 392.1L1135.6 392.9L1135.6 393.8L1135.5 394.7L1135.4 395.7L1135.4 396.9L1135.3 398.1L1135.2 399.3L1135.1 400.5L1135.0 401.6L1134.8 402.7L1134.6 403.9L1134.3 405.0L1134.2 406.0L1134.2 406.9L1134.5 407.5L1135.1 407.7L1136.0 407.7L1137.1 407.5L1138.2 407.3L1139.4 407.0L1140.5 406.9L1141.6 406.8L1142.8 406.6L1144.0 406.5L1145.2 406.5L1146.2 406.6L1147.0 406.9L1147.6 407.4L1147.9 408.0L1148.2 408.7L1148.3 409.6L1148.4 410.6L1148.5 411.7L1148.5 413.1L1148.5 414.8L1148.4 416.5L1148.2 418.4L1148.1 420.1L1148.0 421.6L1147.9 423.0L1147.6 424.2L1147.4 425.4L1147.3 426.5L1147.3 427.5L1147.5 428.5L1148.0 429.4L1148.7 430.1L1149.6 430.8L1150.6 431.4L1151.6 432.0L1152.5 432.7L1153.5 433.3L1154.7 433.9L1155.8 434.5L1156.9 435.2L1157.7 435.8L1158.0 436.5L1157.8 437.1L1157.2 437.9L1156.3 438.6L1155.3 439.3L1154.3 440.1L1153.5 440.9L1152.7 441.8L1151.8 442.7L1151.0 443.6L1150.2 444.6L1149.7 445.5L1149.5 446.5L1149.7 447.4L1150.3 448.2L1151.0 449.0L1151.9 449.9L1152.8 450.9L1153.5 451.9L1154.2 453.1L1154.9 454.4L1155.6 455.8L1156.2 457.2L1156.7 458.5L1157.0 459.7L1157.1 460.8L1157.1 461.9L1157.0 463.0L1156.7 463.9L1156.4 464.8L1156.0 465.5L1155.5 466.1L1155.0 466.6L1154.4 467.0L1153.7 467.2L1152.9 467.4L1152.0 467.6L1150.9 467.5L1149.7 467.3L1148.3 467.1L1146.9 466.8L1145.6 466.5L1144.5 466.3L1143.5 466.2L1142.7 466.0L1141.9 465.9L1141.1 465.8L1140.4 465.9L1139.5 466.1L1138.5 466.6L1137.5 467.2L1136.4 467.9L1135.4 468.7L1134.4 469.5L1133.5 470.2L1132.7 470.9L1132.0 471.7L1131.4 472.5L1130.8 473.2L1130.1 473.8L1129.5 474.3L1128.8 474.6L1128.1 474.8L1127.4 474.9L1126.8 474.9L1126.1 474.9L1125.5 474.9L1124.9 474.8L1124.3 474.7L1123.8 474.5L1123.2 474.4L1122.8 474.2L1122.5 474.2L1122.5 507.3L1101.8 502.4L1101.4 495.6L1100.3 488.8L1098.5 482.1L1096.0 475.8L1093.0 469.9L1089.4 464.7L1085.4 460.2L1081.0 456.6L1076.4 454.0L1071.8 452.4L1067.1 451.8L1062.5 452.3L1058.1 453.9L1054.1 456.5L1050.5 460.0L1047.5 464.4L1045.0 469.6L1043.2 475.4L1042.1 481.7L1041.8 488.4L1021.8 483.7L1021.8 450.6L1022.1 450.7L1022.5 450.8L1023.0 451.0L1023.6 451.1L1024.2 451.2L1024.8 451.3L1025.4 451.3L1026.0 451.3L1026.7 451.3L1027.4 451.2L1028.1 451.0L1028.8 450.7L1029.4 450.2L1030.0 449.6L1030.6 448.9L1031.3 448.1L1032.0 447.4L1032.8 446.6L1033.6 445.9L1034.6 445.1L1035.7 444.3L1036.8 443.6L1037.8 443.0L1038.8 442.6L1039.6 442.3L1040.4 442.3L1041.2 442.3L1041.9 442.4L1042.8 442.6L1043.8 442.7L1044.9 442.9L1046.2 443.2L1047.6 443.5L1048.9 443.8L1050.2 443.9L1051.2 444.0L1052.2 443.9L1053.0 443.7L1053.7 443.4L1054.3 443.0L1054.8 442.5L1055.2 441.9L1055.6 441.2L1056.0 440.3L1056.2 439.4L1056.4 438.4L1056.4 437.3L1056.2 436.1L1055.9 434.9L1055.4 433.6L1054.8 432.2L1054.1 430.8L1053.4 429.5L1052.8 428.3L1052.0 427.3L1051.2 426.3L1050.3 425.5L1049.5 424.6L1049.0 423.8L1048.8 422.9L1048.9 422.0L1049.5 421.0L1050.2 420.0L1051.1 419.1L1052.0 418.2L1052.8 417.3L1053.6 416.5L1054.6 415.7L1055.6 415.0L1056.5 414.3L1057.1 413.6L1057.2 412.9L1056.9 412.2L1056.1 411.6L1055.1 411.0L1053.9 410.4L1052.8 409.7L1051.8 409.1L1050.8 408.5L1049.8 407.8L1048.9 407.2L1048.0 406.5L1047.3 405.8L1046.8 404.9L1046.5 404.0L1046.5 402.9L1046.7 401.8L1046.9 400.7L1047.1 399.4L1047.2 398.0L1047.4 396.5L1047.5 394.8L1047.6 393.0L1047.7 391.2L1047.8 389.6L1047.8 388.2L1047.7 387.0L1047.6 386.0L1047.4 385.1L1047.2 384.4L1046.8 383.8L1046.2 383.3L1045.5 383.0L1044.4 382.9L1043.3 383.0L1042.1 383.1L1040.9 383.2L1039.8 383.3L1038.6 383.4L1037.5 383.7L1036.3 384.0L1035.2 384.1L1034.4 384.2L1033.8 383.9L1033.5 383.3L1033.4 382.4L1033.6 381.4L1033.8 380.3L1034.1 379.1L1034.2 378.0L1034.3 376.9L1034.4 375.7L1034.5 374.5L1034.6 373.3L1034.7 372.2L1034.8 371.1L1034.8 370.2L1034.9 369.3L1034.9 368.5L1035.0 367.7L1034.9 366.9L1034.8 366.1L1034.5 365.2L1034.2 364.3L1033.8 363.4L1033.3 362.5L1032.8 361.7L1032.2 361.0L1031.6 360.4L1031.0 360.0L1030.2 359.5L1029.4 359.2L1028.6 358.8L1027.8 358.5L1026.8 358.2L1025.6 357.9L1024.5 357.6L1023.4 357.4L1022.4 357.2L1021.8 357.1L1021.8 337.1Z"/><path d="M1014.2 484.7L1034.2 489.4L1034.6 482.7L1035.7 476.4L1037.5 470.6L1040.0 465.4L1043.0 461.0L1046.6 457.5L1050.6 454.9L1055.0 453.3L1059.6 452.8L1064.2 453.4L1068.9 455.0L1073.5 457.6L1077.9 461.2L1081.9 465.7L1085.5 470.9L1088.5 476.8L1091.0 483.1L1092.8 489.8L1093.9 496.6L1094.2 503.4L1115.0 508.3L1115.0 528.3L1115.7 528.4L1116.6 528.6L1117.7 528.8L1118.9 529.0L1120.0 529.3L1121.0 529.7L1121.9 530.0L1122.7 530.3L1123.5 530.7L1124.2 531.1L1124.9 531.6L1125.5 532.2L1126.1 532.9L1126.6 533.7L1127.0 534.6L1127.4 535.5L1127.8 536.4L1128.0 537.3L1128.2 538.1L1128.2 538.9L1128.2 539.7L1128.1 540.5L1128.1 541.4L1128.0 542.3L1127.9 543.3L1127.9 544.5L1127.8 545.7L1127.7 546.9L1127.6 548.1L1127.5 549.2L1127.3 550.3L1127.1 551.5L1126.8 552.6L1126.7 553.6L1126.7 554.5L1127.0 555.1L1127.6 555.3L1128.5 555.3L1129.6 555.1L1130.7 554.9L1131.9 554.6L1133.0 554.5L1134.1 554.4L1135.3 554.2L1136.5 554.1L1137.7 554.1L1138.7 554.2L1139.5 554.5L1140.1 555.0L1140.4 555.6L1140.7 556.3L1140.8 557.2L1140.9 558.2L1141.0 559.3L1141.0 560.7L1141.0 562.4L1140.9 564.1L1140.7 566.0L1140.6 567.7L1140.5 569.2L1140.4 570.6L1140.1 571.8L1139.9 573.0L1139.8 574.1L1139.8 575.1L1140.0 576.1L1140.5 577.0L1141.2 577.7L1142.1 578.4L1143.1 579.0L1144.1 579.6L1145.0 580.3L1146.0 580.9L1147.2 581.5L1148.3 582.1L1149.4 582.8L1150.2 583.4L1150.5 584.1L1150.3 584.7L1149.7 585.5L1148.8 586.2L1147.8 586.9L1146.8 587.7L1146.0 588.5L1145.2 589.4L1144.3 590.3L1143.5 591.2L1142.7 592.2L1142.2 593.1L1142.0 594.1L1142.2 595.0L1142.8 595.8L1143.5 596.6L1144.4 597.5L1145.3 598.5L1146.0 599.5L1146.7 600.7L1147.4 602.0L1148.1 603.4L1148.7 604.8L1149.2 606.1L1149.5 607.3L1149.6 608.4L1149.6 609.5L1149.5 610.6L1149.2 611.5L1148.9 612.4L1148.5 613.1L1148.0 613.7L1147.5 614.2L1146.9 614.6L1146.2 614.8L1145.4 615.0L1144.5 615.2L1143.4 615.1L1142.2 614.9L1140.8 614.7L1139.4 614.4L1138.1 614.1L1137.0 613.9L1136.0 613.8L1135.2 613.6L1134.4 613.5L1133.6 613.4L1132.9 613.5L1132.0 613.7L1131.0 614.2L1130.0 614.8L1128.9 615.5L1127.9 616.3L1126.9 617.1L1126.0 617.8L1125.2 618.5L1124.5 619.3L1123.9 620.1L1123.3 620.8L1122.6 621.4L1122.0 621.9L1121.3 622.2L1120.6 622.4L1119.9 622.5L1119.3 622.5L1118.6 622.5L1118.0 622.5L1117.4 622.4L1116.8 622.3L1116.2 622.1L1115.7 622.0L1115.3 621.8L1115.0 621.8L1115.0 654.9L1094.2 650.0L1093.9 643.2L1092.8 636.4L1091.0 629.7L1088.5 623.4L1085.5 617.5L1081.9 612.3L1077.9 607.8L1073.5 604.2L1068.9 601.6L1064.2 600.0L1059.6 599.4L1055.0 599.9L1050.6 601.5L1046.6 604.1L1043.0 607.6L1040.0 612.0L1037.5 617.2L1035.7 623.0L1034.6 629.3L1034.2 636.0L1014.2 631.3L1014.2 598.2L1014.6 598.3L1015.0 598.4L1015.5 598.6L1016.1 598.7L1016.7 598.8L1017.2 598.9L1017.9 598.9L1018.5 598.9L1019.2 598.9L1019.9 598.8L1020.6 598.6L1021.2 598.3L1021.9 597.8L1022.5 597.2L1023.1 596.5L1023.8 595.7L1024.5 595.0L1025.2 594.2L1026.1 593.5L1027.1 592.7L1028.2 591.9L1029.2 591.2L1030.3 590.6L1031.2 590.2L1032.1 589.9L1032.9 589.9L1033.7 589.9L1034.4 590.0L1035.3 590.2L1036.2 590.3L1037.4 590.5L1038.7 590.8L1040.1 591.1L1041.4 591.4L1042.7 591.5L1043.8 591.6L1044.7 591.5L1045.5 591.3L1046.2 591.0L1046.8 590.6L1047.3 590.1L1047.8 589.5L1048.1 588.8L1048.5 587.9L1048.7 587.0L1048.9 586.0L1048.9 584.9L1048.8 583.7L1048.4 582.5L1047.9 581.2L1047.3 579.8L1046.6 578.4L1045.9 577.1L1045.2 575.9L1044.5 574.9L1043.7 573.9L1042.8 573.1L1042.0 572.2L1041.5 571.4L1041.2 570.5L1041.4 569.6L1042.0 568.6L1042.7 567.6L1043.6 566.7L1044.5 565.8L1045.2 564.9L1046.1 564.1L1047.1 563.3L1048.1 562.6L1049.0 561.9L1049.6 561.2L1049.8 560.5L1049.4 559.8L1048.6 559.2L1047.6 558.6L1046.4 558.0L1045.3 557.3L1044.2 556.7L1043.3 556.1L1042.3 555.4L1041.4 554.8L1040.5 554.1L1039.8 553.4L1039.2 552.5L1039.0 551.6L1039.0 550.5L1039.2 549.4L1039.4 548.3L1039.6 547.0L1039.8 545.6L1039.9 544.1L1040.0 542.4L1040.1 540.6L1040.2 538.8L1040.3 537.2L1040.2 535.8L1040.2 534.6L1040.1 533.6L1039.9 532.7L1039.7 532.0L1039.3 531.4L1038.8 530.9L1038.0 530.6L1036.9 530.5L1035.8 530.6L1034.6 530.7L1033.4 530.8L1032.2 530.9L1031.1 531.0L1030.0 531.3L1028.8 531.6L1027.8 531.7L1026.9 531.8L1026.2 531.5L1026.0 530.9L1025.9 530.0L1026.1 529.0L1026.3 527.9L1026.6 526.7L1026.8 525.6L1026.8 524.5L1026.9 523.3L1027.0 522.1L1027.1 520.9L1027.2 519.8L1027.2 518.7L1027.3 517.8L1027.4 516.9L1027.4 516.1L1027.5 515.3L1027.4 514.5L1027.2 513.7L1027.0 512.8L1026.7 511.9L1026.3 511.0L1025.8 510.1L1025.3 509.3L1024.8 508.6L1024.1 508.0L1023.5 507.6L1022.7 507.1L1021.9 506.8L1021.1 506.4L1020.2 506.1L1019.3 505.8L1018.1 505.5L1017.0 505.2L1015.9 505.0L1014.9 504.8L1014.2 504.7L1014.2 484.7Z"/><path d="M1021.8 483.7L1041.8 488.4L1042.1 481.7L1043.2 475.4L1045.0 469.6L1047.5 464.4L1050.5 460.0L1054.1 456.5L1058.1 453.9L1062.5 452.3L1067.1 451.8L1071.8 452.4L1076.4 454.0L1081.0 456.6L1085.4 460.2L1089.4 464.7L1093.0 469.9L1096.0 475.8L1098.5 482.1L1100.3 488.8L1101.4 495.6L1101.8 502.4L1122.5 507.3L1122.5 527.3L1123.2 527.4L1124.1 527.6L1125.2 527.8L1126.4 528.0L1127.5 528.3L1128.5 528.7L1129.4 529.0L1130.2 529.3L1131.0 529.7L1131.7 530.1L1132.4 530.6L1133.0 531.2L1133.6 531.9L1134.1 532.7L1134.5 533.6L1134.9 534.5L1135.3 535.4L1135.5 536.3L1135.7 537.1L1135.7 537.9L1135.7 538.7L1135.6 539.5L1135.6 540.4L1135.5 541.3L1135.4 542.3L1135.4 543.5L1135.3 544.7L1135.2 545.9L1135.1 547.1L1135.0 548.2L1134.8 549.3L1134.6 550.5L1134.3 551.6L1134.2 552.6L1134.2 553.5L1134.5 554.1L1135.1 554.3L1136.0 554.3L1137.1 554.1L1138.2 553.9L1139.4 553.6L1140.5 553.5L1141.6 553.4L1142.8 553.2L1144.0 553.1L1145.2 553.1L1146.2 553.2L1147.0 553.5L1147.6 554.0L1147.9 554.6L1148.2 555.3L1148.3 556.2L1148.4 557.2L1148.5 558.3L1148.5 559.7L1148.5 561.4L1148.4 563.1L1148.2 565.0L1148.1 566.7L1148.0 568.2L1147.9 569.6L1147.6 570.8L1147.4 572.0L1147.3 573.1L1147.3 574.1L1147.5 575.1L1148.0 576.0L1148.7 576.7L1149.6 577.4L1150.6 578.0L1151.6 578.6L1152.5 579.3L1153.5 579.9L1154.7 580.5L1155.8 581.1L1156.9 581.8L1157.7 582.4L1158.0 583.1L1157.8 583.7L1157.2 584.5L1156.3 585.2L1155.3 585.9L1154.3 586.7L1153.5 587.5L1152.7 588.4L1151.8 589.3L1151.0 590.2L1150.2 591.2L1149.7 592.1L1149.5 593.1L1149.7 594.0L1150.3 594.8L1151.0 595.6L1151.9 596.5L1152.8 597.5L1153.5 598.5L1154.2 599.7L1154.9 601.0L1155.6 602.4L1156.2 603.8L1156.7 605.1L1157.0 606.3L1157.1 607.4L1157.1 608.5L1157.0 609.6L1156.7 610.5L1156.4 611.4L1156.0 612.1L1155.5 612.7L1155.0 613.2L1154.4 613.6L1153.7 613.8L1152.9 614.0L1152.0 614.2L1150.9 614.1L1149.7 613.9L1148.3 613.7L1146.9 613.4L1145.6 613.1L1144.5 612.9L1143.5 612.8L1142.7 612.6L1141.9 612.5L1141.1 612.4L1140.4 612.5L1139.5 612.7L1138.5 613.2L1137.5 613.8L1136.4 614.5L1135.4 615.3L1134.4 616.1L1133.5 616.8L1132.7 617.5L1132.0 618.3L1131.4 619.1L1130.8 619.8L1130.1 620.4L1129.5 620.9L1128.8 621.2L1128.1 621.4L1127.4 621.5L1126.8 621.5L1126.1 621.5L1125.5 621.5L1124.9 621.4L1124.3 621.3L1123.8 621.1L1123.2 621.0L1122.8 620.8L1122.5 620.8L1122.5 653.9L1101.8 649.0L1101.4 642.2L1100.3 635.4L1098.5 628.7L1096.0 622.4L1093.0 616.5L1089.4 611.3L1085.4 606.8L1081.0 603.2L1076.4 600.6L1071.8 599.0L1067.1 598.4L1062.5 598.9L1058.1 600.5L1054.1 603.1L1050.5 606.6L1047.5 611.0L1045.0 616.2L1043.2 622.0L1042.1 628.3L1041.8 635.0L1021.8 630.3L1021.8 597.2L1022.1 597.3L1022.5 597.4L1023.0 597.6L1023.6 597.7L1024.2 597.8L1024.8 597.9L1025.4 597.9L1026.0 597.9L1026.7 597.9L1027.4 597.8L1028.1 597.6L1028.8 597.3L1029.4 596.8L1030.0 596.2L1030.6 595.5L1031.3 594.7L1032.0 594.0L1032.8 593.2L1033.6 592.5L1034.6 591.7L1035.7 590.9L1036.8 590.2L1037.8 589.6L1038.8 589.2L1039.6 588.9L1040.4 588.9L1041.2 588.9L1041.9 589.0L1042.8 589.2L1043.8 589.3L1044.9 589.5L1046.2 589.8L1047.6 590.1L1048.9 590.4L1050.2 590.5L1051.2 590.6L1052.2 590.5L1053.0 590.3L1053.7 590.0L1054.3 589.6L1054.8 589.1L1055.2 588.5L1055.6 587.8L1056.0 586.9L1056.2 586.0L1056.4 585.0L1056.4 583.9L1056.2 582.7L1055.9 581.5L1055.4 580.2L1054.8 578.8L1054.1 577.4L1053.4 576.1L1052.8 574.9L1052.0 573.9L1051.2 572.9L1050.3 572.1L1049.5 571.2L1049.0 570.4L1048.8 569.5L1048.9 568.6L1049.5 567.6L1050.2 566.6L1051.1 565.7L1052.0 564.8L1052.8 563.9L1053.6 563.1L1054.6 562.3L1055.6 561.6L1056.5 560.9L1057.1 560.2L1057.2 559.5L1056.9 558.8L1056.1 558.2L1055.1 557.6L1053.9 557.0L1052.8 556.3L1051.8 555.7L1050.8 555.1L1049.8 554.4L1048.9 553.8L1048.0 553.1L1047.3 552.4L1046.8 551.5L1046.5 550.6L1046.5 549.5L1046.7 548.4L1046.9 547.3L1047.1 546.0L1047.2 544.6L1047.4 543.1L1047.5 541.4L1047.6 539.6L1047.7 537.8L1047.8 536.2L1047.8 534.8L1047.7 533.6L1047.6 532.6L1047.4 531.7L1047.2 531.0L1046.8 530.4L1046.2 529.9L1045.5 529.6L1044.4 529.5L1043.3 529.6L1042.1 529.7L1040.9 529.8L1039.8 529.9L1038.6 530.0L1037.5 530.3L1036.3 530.6L1035.2 530.7L1034.4 530.8L1033.8 530.5L1033.5 529.9L1033.4 529.0L1033.6 528.0L1033.8 526.9L1034.1 525.7L1034.2 524.6L1034.3 523.5L1034.4 522.3L1034.5 521.1L1034.6 519.9L1034.7 518.8L1034.8 517.7L1034.8 516.8L1034.9 515.9L1034.9 515.1L1035.0 514.3L1034.9 513.5L1034.8 512.7L1034.5 511.8L1034.2 510.9L1033.8 510.0L1033.3 509.1L1032.8 508.3L1032.2 507.6L1031.6 507.0L1031.0 506.6L1030.2 506.1L1029.4 505.8L1028.6 505.4L1027.8 505.1L1026.8 504.8L1025.6 504.5L1024.5 504.2L1023.4 504.0L1022.4 503.8L1021.8 503.7L1021.8 483.7Z"/><path d="M1014.2 631.3L1034.2 636.0L1034.6 629.3L1035.7 623.0L1037.5 617.2L1040.0 612.0L1043.0 607.6L1046.6 604.1L1050.6 601.5L1055.0 599.9L1059.6 599.4L1064.2 600.0L1068.9 601.6L1073.5 604.2L1077.9 607.8L1081.9 612.3L1085.5 617.5L1088.5 623.4L1091.0 629.7L1092.8 636.4L1093.9 643.2L1094.2 650.0L1115.0 654.9L1115.0 674.9L1115.7 675.0L1116.6 675.2L1117.7 675.4L1118.9 675.6L1120.0 675.9L1121.0 676.3L1121.9 676.6L1122.7 676.9L1123.5 677.3L1124.2 677.7L1124.9 678.2L1125.5 678.8L1126.1 679.5L1126.6 680.3L1127.0 681.2L1127.4 682.1L1127.8 683.0L1128.0 683.9L1128.2 684.7L1128.2 685.5L1128.2 686.3L1128.1 687.1L1128.1 688.0L1128.0 688.9L1127.9 689.9L1127.9 691.1L1127.8 692.3L1127.7 693.5L1127.6 694.7L1127.5 695.8L1127.3 696.9L1127.1 698.1L1126.8 699.2L1126.7 700.2L1126.7 701.1L1127.0 701.7L1127.6 701.9L1128.5 701.9L1129.6 701.7L1130.7 701.5L1131.9 701.2L1133.0 701.1L1134.1 701.0L1135.3 700.8L1136.5 700.7L1137.7 700.7L1138.7 700.8L1139.5 701.1L1140.1 701.6L1140.4 702.2L1140.7 702.9L1140.8 703.8L1140.9 704.8L1141.0 705.9L1141.0 707.3L1141.0 709.0L1140.9 710.7L1140.7 712.6L1140.6 714.3L1140.5 715.8L1140.4 717.2L1140.1 718.4L1139.9 719.6L1139.8 720.7L1139.8 721.7L1140.0 722.7L1140.5 723.6L1141.2 724.3L1142.1 725.0L1143.1 725.6L1144.1 726.2L1145.0 726.9L1146.0 727.5L1147.2 728.1L1148.3 728.7L1149.4 729.4L1150.2 730.0L1150.5 730.7L1150.3 731.3L1149.7 732.1L1148.8 732.8L1147.8 733.5L1146.8 734.3L1146.0 735.1L1145.2 736.0L1144.3 736.9L1143.5 737.8L1142.7 738.8L1142.2 739.7L1142.0 740.7L1142.2 741.6L1142.8 742.4L1143.5 743.2L1144.4 744.1L1145.3 745.1L1146.0 746.1L1146.7 747.3L1147.4 748.6L1148.1 750.0L1148.7 751.4L1149.2 752.7L1149.5 753.9L1149.6 755.0L1149.6 756.1L1149.5 757.2L1149.2 758.1L1148.9 759.0L1148.5 759.7L1148.0 760.3L1147.5 760.8L1146.9 761.2L1146.2 761.4L1145.4 761.6L1144.5 761.8L1143.4 761.7L1142.2 761.5L1140.8 761.3L1139.4 761.0L1138.1 760.7L1137.0 760.5L1136.0 760.4L1135.2 760.2L1134.4 760.1L1133.6 760.0L1132.9 760.1L1132.0 760.3L1131.0 760.8L1130.0 761.4L1128.9 762.1L1127.9 762.9L1126.9 763.7L1126.0 764.4L1125.2 765.1L1124.5 765.9L1123.9 766.7L1123.3 767.4L1122.6 768.0L1122.0 768.5L1121.3 768.8L1120.6 769.0L1119.9 769.1L1119.3 769.1L1118.6 769.1L1118.0 769.1L1117.4 769.0L1116.8 768.9L1116.2 768.7L1115.7 768.6L1115.3 768.4L1115.0 768.4L1115.0 801.5L1094.2 796.6L1093.9 789.8L1092.8 783.0L1091.0 776.3L1088.5 770.0L1085.5 764.1L1081.9 758.9L1077.9 754.4L1073.5 750.8L1068.9 748.2L1064.2 746.6L1059.6 746.0L1055.0 746.5L1050.6 748.1L1046.6 750.7L1043.0 754.2L1040.0 758.6L1037.5 763.8L1035.7 769.6L1034.6 775.9L1034.2 782.6L1014.2 777.9L1014.2 744.8L1014.6 744.9L1015.0 745.0L1015.5 745.2L1016.1 745.3L1016.7 745.4L1017.2 745.5L1017.9 745.5L1018.5 745.5L1019.2 745.5L1019.9 745.4L1020.6 745.2L1021.2 744.9L1021.9 744.4L1022.5 743.8L1023.1 743.1L1023.8 742.3L1024.5 741.6L1025.2 740.8L1026.1 740.1L1027.1 739.3L1028.2 738.5L1029.2 737.8L1030.3 737.2L1031.2 736.8L1032.1 736.5L1032.9 736.5L1033.7 736.5L1034.4 736.6L1035.3 736.8L1036.2 736.9L1037.4 737.1L1038.7 737.4L1040.1 737.7L1041.4 738.0L1042.7 738.1L1043.8 738.2L1044.7 738.1L1045.5 737.9L1046.2 737.6L1046.8 737.2L1047.3 736.7L1047.8 736.1L1048.1 735.4L1048.5 734.5L1048.7 733.6L1048.9 732.6L1048.9 731.5L1048.8 730.3L1048.4 729.1L1047.9 727.8L1047.3 726.4L1046.6 725.0L1045.9 723.7L1045.2 722.5L1044.5 721.5L1043.7 720.5L1042.8 719.7L1042.0 718.8L1041.5 718.0L1041.2 717.1L1041.4 716.2L1042.0 715.2L1042.7 714.2L1043.6 713.3L1044.5 712.4L1045.2 711.5L1046.1 710.7L1047.1 709.9L1048.1 709.2L1049.0 708.5L1049.6 707.8L1049.8 707.1L1049.4 706.4L1048.6 705.8L1047.6 705.2L1046.4 704.6L1045.3 703.9L1044.2 703.3L1043.3 702.7L1042.3 702.0L1041.4 701.4L1040.5 700.7L1039.8 700.0L1039.2 699.1L1039.0 698.2L1039.0 697.1L1039.2 696.0L1039.4 694.9L1039.6 693.6L1039.8 692.2L1039.9 690.7L1040.0 689.0L1040.1 687.2L1040.2 685.4L1040.3 683.8L1040.2 682.4L1040.2 681.2L1040.1 680.2L1039.9 679.3L1039.7 678.6L1039.3 678.0L1038.8 677.5L1038.0 677.2L1036.9 677.1L1035.8 677.2L1034.6 677.3L1033.4 677.4L1032.2 677.5L1031.1 677.6L1030.0 677.9L1028.8 678.2L1027.8 678.3L1026.9 678.4L1026.2 678.1L1026.0 677.5L1025.9 676.6L1026.1 675.6L1026.3 674.5L1026.6 673.3L1026.8 672.2L1026.8 671.1L1026.9 669.9L1027.0 668.7L1027.1 667.5L1027.2 666.4L1027.2 665.3L1027.3 664.4L1027.4 663.5L1027.4 662.7L1027.5 661.9L1027.4 661.1L1027.2 660.3L1027.0 659.4L1026.7 658.5L1026.3 657.6L1025.8 656.7L1025.3 655.9L1024.8 655.2L1024.1 654.6L1023.5 654.2L1022.7 653.7L1021.9 653.4L1021.1 653.0L1020.2 652.7L1019.3 652.4L1018.1 652.1L1017.0 651.8L1015.9 651.6L1014.9 651.4L1014.2 651.3L1014.2 631.3Z"/><path d="M1021.8 630.3L1041.8 635.0L1042.1 628.3L1043.2 622.0L1045.0 616.2L1047.5 611.0L1050.5 606.6L1054.1 603.1L1058.1 600.5L1062.5 598.9L1067.1 598.4L1071.8 599.0L1076.4 600.6L1081.0 603.2L1085.4 606.8L1089.4 611.3L1093.0 616.5L1096.0 622.4L1098.5 628.7L1100.3 635.4L1101.4 642.2L1101.8 649.0L1122.5 653.9L1122.5 673.9L1123.2 674.0L1124.1 674.2L1125.2 674.4L1126.4 674.6L1127.5 674.9L1128.5 675.3L1129.4 675.6L1130.2 675.9L1131.0 676.3L1131.7 676.7L1132.4 677.2L1133.0 677.8L1133.6 678.5L1134.1 679.3L1134.5 680.2L1134.9 681.1L1135.3 682.0L1135.5 682.9L1135.7 683.7L1135.7 684.5L1135.7 685.3L1135.6 686.1L1135.6 687.0L1135.5 687.9L1135.4 688.9L1135.4 690.1L1135.3 691.3L1135.2 692.5L1135.1 693.7L1135.0 694.8L1134.8 695.9L1134.6 697.1L1134.3 698.2L1134.2 699.2L1134.2 700.1L1134.5 700.7L1135.1 700.9L1136.0 700.9L1137.1 700.7L1138.2 700.5L1139.4 700.2L1140.5 700.1L1141.6 700.0L1142.8 699.8L1144.0 699.7L1145.2 699.7L1146.2 699.8L1147.0 700.1L1147.6 700.6L1147.9 701.2L1148.2 701.9L1148.3 702.8L1148.4 703.8L1148.5 704.9L1148.5 706.3L1148.5 708.0L1148.4 709.7L1148.2 711.6L1148.1 713.3L1148.0 714.8L1147.9 716.2L1147.6 717.4L1147.4 718.6L1147.3 719.7L1147.3 720.7L1147.5 721.7L1148.0 722.6L1148.7 723.3L1149.6 724.0L1150.6 724.6L1151.6 725.2L1152.5 725.9L1153.5 726.5L1154.7 727.1L1155.8 727.7L1156.9 728.4L1157.7 729.0L1158.0 729.7L1157.8 730.3L1157.2 731.1L1156.3 731.8L1155.3 732.5L1154.3 733.3L1153.5 734.1L1152.7 735.0L1151.8 735.9L1151.0 736.8L1150.2 737.8L1149.7 738.7L1149.5 739.7L1149.7 740.6L1150.3 741.4L1151.0 742.2L1151.9 743.1L1152.8 744.1L1153.5 745.1L1154.2 746.3L1154.9 747.6L1155.6 749.0L1156.2 750.4L1156.7 751.7L1157.0 752.9L1157.1 754.0L1157.1 755.1L1157.0 756.2L1156.7 757.1L1156.4 758.0L1156.0 758.7L1155.5 759.3L1155.0 759.8L1154.4 760.2L1153.7 760.4L1152.9 760.6L1152.0 760.8L1150.9 760.7L1149.7 760.5L1148.3 760.3L1146.9 760.0L1145.6 759.7L1144.5 759.5L1143.5 759.4L1142.7 759.2L1141.9 759.1L1141.1 759.0L1140.4 759.1L1139.5 759.3L1138.5 759.8L1137.5 760.4L1136.4 761.1L1135.4 761.9L1134.4 762.7L1133.5 763.4L1132.7 764.1L1132.0 764.9L1131.4 765.7L1130.8 766.4L1130.1 767.0L1129.5 767.5L1128.8 767.8L1128.1 768.0L1127.4 768.1L1126.8 768.1L1126.1 768.1L1125.5 768.1L1124.9 768.0L1124.3 767.9L1123.8 767.7L1123.2 767.6L1122.8 767.4L1122.5 767.4L1122.5 800.5L1101.8 795.6L1101.4 788.8L1100.3 782.0L1098.5 775.3L1096.0 769.0L1093.0 763.1L1089.4 757.9L1085.4 753.4L1081.0 749.8L1076.4 747.2L1071.8 745.6L1067.1 745.0L1062.5 745.5L1058.1 747.1L1054.1 749.7L1050.5 753.2L1047.5 757.6L1045.0 762.8L1043.2 768.6L1042.1 774.9L1041.8 781.6L1021.8 776.9L1021.8 743.8L1022.1 743.9L1022.5 744.0L1023.0 744.2L1023.6 744.3L1024.2 744.4L1024.8 744.5L1025.4 744.5L1026.0 744.5L1026.7 744.5L1027.4 744.4L1028.1 744.2L1028.8 743.9L1029.4 743.4L1030.0 742.8L1030.6 742.1L1031.3 741.3L1032.0 740.6L1032.8 739.8L1033.6 739.1L1034.6 738.3L1035.7 737.5L1036.8 736.8L1037.8 736.2L1038.8 735.8L1039.6 735.5L1040.4 735.5L1041.2 735.5L1041.9 735.6L1042.8 735.8L1043.8 735.9L1044.9 736.1L1046.2 736.4L1047.6 736.7L1048.9 737.0L1050.2 737.1L1051.2 737.2L1052.2 737.1L1053.0 736.9L1053.7 736.6L1054.3 736.2L1054.8 735.7L1055.2 735.1L1055.6 734.4L1056.0 733.5L1056.2 732.6L1056.4 731.6L1056.4 730.5L1056.2 729.3L1055.9 728.1L1055.4 726.8L1054.8 725.4L1054.1 724.0L1053.4 722.7L1052.8 721.5L1052.0 720.5L1051.2 719.5L1050.3 718.7L1049.5 717.8L1049.0 717.0L1048.8 716.1L1048.9 715.2L1049.5 714.2L1050.2 713.2L1051.1 712.3L1052.0 711.4L1052.8 710.5L1053.6 709.7L1054.6 708.9L1055.6 708.2L1056.5 707.5L1057.1 706.8L1057.2 706.1L1056.9 705.4L1056.1 704.8L1055.1 704.2L1053.9 703.6L1052.8 702.9L1051.8 702.3L1050.8 701.7L1049.8 701.0L1048.9 700.4L1048.0 699.7L1047.3 699.0L1046.8 698.1L1046.5 697.2L1046.5 696.1L1046.7 695.0L1046.9 693.9L1047.1 692.6L1047.2 691.2L1047.4 689.7L1047.5 688.0L1047.6 686.2L1047.7 684.4L1047.8 682.8L1047.8 681.4L1047.7 680.2L1047.6 679.2L1047.4 678.3L1047.2 677.6L1046.8 677.0L1046.2 676.5L1045.5 676.2L1044.4 676.1L1043.3 676.2L1042.1 676.3L1040.9 676.4L1039.8 676.5L1038.6 676.6L1037.5 676.9L1036.3 677.2L1035.2 677.3L1034.4 677.4L1033.8 677.1L1033.5 676.5L1033.4 675.6L1033.6 674.6L1033.8 673.5L1034.1 672.3L1034.2 671.2L1034.3 670.1L1034.4 668.9L1034.5 667.7L1034.6 666.5L1034.7 665.4L1034.8 664.3L1034.8 663.4L1034.9 662.5L1034.9 661.7L1035.0 660.9L1034.9 660.1L1034.8 659.3L1034.5 658.4L1034.2 657.5L1033.8 656.6L1033.3 655.7L1032.8 654.9L1032.2 654.2L1031.6 653.6L1031.0 653.2L1030.2 652.7L1029.4 652.4L1028.6 652.0L1027.8 651.7L1026.8 651.4L1025.6 651.1L1024.5 650.8L1023.4 650.6L1022.4 650.4L1021.8 650.3L1021.8 630.3Z"/><path d="M1115.0 361.7L1135.0 366.3L1135.4 359.7L1136.5 353.4L1138.3 347.6L1140.7 342.4L1143.8 338.0L1147.4 334.4L1151.4 331.9L1155.7 330.3L1160.3 329.8L1165.0 330.4L1169.7 332.0L1174.3 334.6L1178.6 338.2L1182.6 342.7L1186.2 347.9L1189.3 353.8L1191.7 360.1L1193.5 366.7L1194.6 373.6L1195.0 380.4L1215.8 385.2L1215.8 405.2L1216.4 405.4L1217.4 405.5L1218.5 405.8L1219.6 406.0L1220.8 406.3L1221.8 406.6L1222.6 407.0L1223.4 407.3L1224.2 407.7L1225.0 408.1L1225.6 408.6L1226.2 409.2L1226.8 409.9L1227.3 410.7L1227.8 411.6L1228.2 412.5L1228.5 413.4L1228.8 414.3L1228.9 415.1L1229.0 415.9L1228.9 416.7L1228.9 417.5L1228.8 418.3L1228.8 419.3L1228.7 420.3L1228.6 421.5L1228.5 422.7L1228.4 423.9L1228.3 425.0L1228.2 426.2L1228.1 427.3L1227.8 428.4L1227.6 429.6L1227.4 430.6L1227.5 431.4L1227.8 432.0L1228.4 432.3L1229.2 432.3L1230.3 432.1L1231.5 431.8L1232.6 431.6L1233.8 431.4L1234.9 431.4L1236.1 431.2L1237.3 431.1L1238.4 431.1L1239.5 431.2L1240.2 431.5L1240.8 431.9L1241.2 432.5L1241.4 433.3L1241.6 434.1L1241.7 435.2L1241.8 436.3L1241.8 437.7L1241.7 439.3L1241.6 441.1L1241.5 442.9L1241.4 444.7L1241.2 446.2L1241.1 447.5L1240.9 448.8L1240.7 450.0L1240.5 451.1L1240.5 452.1L1240.8 453.1L1241.3 453.9L1242.0 454.7L1242.9 455.4L1243.8 456.0L1244.8 456.6L1245.8 457.2L1246.8 457.9L1247.9 458.5L1249.1 459.1L1250.1 459.7L1250.9 460.4L1251.2 461.0L1251.1 461.7L1250.5 462.4L1249.6 463.1L1248.6 463.9L1247.6 464.7L1246.8 465.5L1246.0 466.3L1245.1 467.3L1244.2 468.2L1243.5 469.2L1242.9 470.1L1242.8 471.0L1243.0 471.9L1243.5 472.8L1244.3 473.6L1245.2 474.5L1246.0 475.4L1246.8 476.5L1247.4 477.7L1248.1 479.0L1248.8 480.4L1249.4 481.8L1249.9 483.1L1250.2 484.3L1250.4 485.4L1250.4 486.5L1250.2 487.5L1250.0 488.5L1249.6 489.3L1249.2 490.1L1248.8 490.7L1248.3 491.2L1247.7 491.5L1247.0 491.8L1246.2 492.0L1245.2 492.1L1244.2 492.1L1242.9 491.9L1241.6 491.6L1240.2 491.3L1238.9 491.1L1237.8 490.9L1236.8 490.7L1235.9 490.6L1235.2 490.5L1234.4 490.4L1233.6 490.5L1232.8 490.7L1231.8 491.1L1230.8 491.8L1229.7 492.5L1228.6 493.3L1227.6 494.1L1226.8 494.8L1226.0 495.5L1225.3 496.3L1224.6 497.1L1224.0 497.8L1223.4 498.4L1222.8 498.9L1222.1 499.2L1221.4 499.4L1220.7 499.4L1220.0 499.5L1219.4 499.4L1218.8 499.4L1218.2 499.4L1217.6 499.3L1217.0 499.1L1216.5 499.0L1216.1 498.8L1215.8 498.7L1215.8 531.8L1195.0 527.0L1194.6 520.2L1193.5 513.3L1191.7 506.7L1189.3 500.4L1186.2 494.5L1182.6 489.3L1178.6 484.8L1174.3 481.2L1169.7 478.6L1165.0 477.0L1160.3 476.4L1155.7 476.9L1151.4 478.5L1147.4 481.0L1143.8 484.6L1140.7 489.0L1138.3 494.2L1136.5 500.0L1135.4 506.3L1135.0 512.9L1115.0 508.3L1115.0 475.2L1115.3 475.2L1115.7 475.4L1116.2 475.5L1116.8 475.7L1117.4 475.8L1118.0 475.9L1118.6 475.9L1119.3 475.9L1119.9 475.9L1120.6 475.8L1121.3 475.6L1122.0 475.3L1122.6 474.8L1123.3 474.2L1123.9 473.5L1124.5 472.7L1125.2 471.9L1126.0 471.2L1126.9 470.5L1127.9 469.7L1128.9 468.9L1130.0 468.2L1131.0 467.6L1132.0 467.1L1132.9 466.9L1133.6 466.8L1134.4 466.9L1135.2 467.0L1136.0 467.2L1137.0 467.3L1138.1 467.5L1139.4 467.8L1140.8 468.1L1142.2 468.3L1143.4 468.5L1144.5 468.6L1145.4 468.4L1146.2 468.2L1146.9 468.0L1147.5 467.6L1148.0 467.1L1148.5 466.5L1148.9 465.8L1149.2 464.9L1149.5 464.0L1149.6 462.9L1149.6 461.8L1149.5 460.7L1149.2 459.5L1148.7 458.2L1148.1 456.8L1147.4 455.4L1146.7 454.1L1146.0 452.9L1145.3 451.9L1144.4 450.9L1143.5 450.0L1142.8 449.2L1142.2 448.4L1142.0 447.5L1142.2 446.5L1142.7 445.6L1143.5 444.6L1144.3 443.7L1145.2 442.8L1146.0 441.9L1146.8 441.1L1147.8 440.3L1148.8 439.6L1149.7 438.9L1150.3 438.1L1150.5 437.5L1150.2 436.8L1149.4 436.2L1148.3 435.5L1147.2 434.9L1146.0 434.3L1145.0 433.7L1144.1 433.0L1143.1 432.4L1142.1 431.8L1141.2 431.1L1140.5 430.4L1140.0 429.5L1139.8 428.5L1139.8 427.5L1139.9 426.4L1140.1 425.2L1140.4 424.0L1140.5 422.6L1140.6 421.1L1140.7 419.4L1140.9 417.5L1141.0 415.8L1141.0 414.1L1141.0 412.7L1140.9 411.6L1140.8 410.6L1140.7 409.7L1140.4 409.0L1140.1 408.4L1139.5 407.9L1138.7 407.6L1137.7 407.5L1136.5 407.5L1135.3 407.6L1134.1 407.8L1133.0 407.9L1131.9 408.0L1130.7 408.3L1129.6 408.5L1128.5 408.7L1127.6 408.7L1127.0 408.5L1126.7 407.9L1126.7 407.0L1126.8 406.0L1127.1 404.9L1127.3 403.7L1127.5 402.6L1127.6 401.5L1127.7 400.3L1127.8 399.1L1127.9 397.9L1127.9 396.7L1128.0 395.7L1128.1 394.8L1128.1 393.9L1128.2 393.1L1128.2 392.3L1128.2 391.5L1128.0 390.7L1127.8 389.8L1127.4 388.9L1127.0 388.0L1126.6 387.1L1126.1 386.3L1125.5 385.6L1124.9 385.0L1124.2 384.5L1123.5 384.1L1122.7 383.7L1121.9 383.4L1121.0 383.1L1120.0 382.7L1118.9 382.4L1117.7 382.2L1116.6 382.0L1115.7 381.8L1115.0 381.7L1115.0 361.7Z"/><path d="M1122.5 360.7L1142.5 365.3L1142.9 358.7L1144.0 352.4L1145.8 346.6L1148.2 341.4L1151.3 337.0L1154.9 333.4L1158.9 330.9L1163.2 329.3L1167.8 328.8L1172.5 329.4L1177.2 331.0L1181.8 333.6L1186.1 337.2L1190.1 341.7L1193.7 346.9L1196.8 352.8L1199.2 359.1L1201.0 365.7L1202.1 372.6L1202.5 379.4L1223.2 384.2L1223.2 404.2L1223.9 404.4L1224.9 404.5L1226.0 404.8L1227.1 405.0L1228.3 405.3L1229.2 405.6L1230.1 406.0L1230.9 406.3L1231.7 406.7L1232.5 407.1L1233.1 407.6L1233.8 408.2L1234.3 408.9L1234.8 409.7L1235.3 410.6L1235.7 411.5L1236.0 412.4L1236.2 413.3L1236.4 414.1L1236.5 414.9L1236.4 415.7L1236.4 416.5L1236.3 417.3L1236.2 418.3L1236.2 419.3L1236.1 420.5L1236.0 421.7L1235.9 422.9L1235.8 424.0L1235.8 425.2L1235.6 426.3L1235.3 427.4L1235.1 428.6L1234.9 429.6L1235.0 430.4L1235.2 431.0L1235.9 431.3L1236.8 431.3L1237.8 431.1L1239.0 430.8L1240.1 430.6L1241.2 430.4L1242.4 430.4L1243.6 430.2L1244.8 430.1L1245.9 430.1L1247.0 430.2L1247.8 430.5L1248.3 430.9L1248.7 431.5L1248.9 432.3L1249.1 433.1L1249.2 434.2L1249.2 435.3L1249.3 436.7L1249.2 438.3L1249.1 440.1L1249.0 441.9L1248.9 443.7L1248.8 445.2L1248.6 446.5L1248.4 447.8L1248.2 449.0L1248.0 450.1L1248.0 451.1L1248.2 452.1L1248.8 452.9L1249.5 453.7L1250.4 454.4L1251.3 455.0L1252.3 455.6L1253.2 456.2L1254.3 456.9L1255.4 457.5L1256.6 458.1L1257.6 458.7L1258.4 459.4L1258.8 460.0L1258.6 460.7L1258.0 461.4L1257.1 462.1L1256.1 462.9L1255.1 463.7L1254.2 464.5L1253.5 465.3L1252.6 466.3L1251.7 467.2L1251.0 468.2L1250.4 469.1L1250.2 470.0L1250.5 470.9L1251.0 471.8L1251.8 472.6L1252.7 473.5L1253.5 474.4L1254.2 475.5L1254.9 476.7L1255.6 478.0L1256.3 479.4L1256.9 480.8L1257.4 482.1L1257.8 483.3L1257.9 484.4L1257.9 485.5L1257.7 486.5L1257.5 487.5L1257.1 488.3L1256.8 489.1L1256.3 489.7L1255.8 490.2L1255.2 490.5L1254.5 490.8L1253.7 491.0L1252.8 491.1L1251.7 491.1L1250.4 490.9L1249.1 490.6L1247.7 490.3L1246.4 490.1L1245.2 489.9L1244.3 489.7L1243.4 489.6L1242.7 489.5L1241.9 489.4L1241.1 489.5L1240.2 489.7L1239.3 490.1L1238.2 490.8L1237.2 491.5L1236.1 492.3L1235.1 493.1L1234.2 493.8L1233.5 494.5L1232.8 495.3L1232.1 496.1L1231.5 496.8L1230.9 497.4L1230.2 497.9L1229.6 498.2L1228.9 498.4L1228.2 498.4L1227.5 498.5L1226.9 498.4L1226.2 498.4L1225.7 498.4L1225.1 498.3L1224.5 498.1L1224.0 498.0L1223.6 497.8L1223.2 497.7L1223.2 530.8L1202.5 526.0L1202.1 519.2L1201.0 512.3L1199.2 505.7L1196.8 499.4L1193.7 493.5L1190.1 488.3L1186.1 483.8L1181.8 480.2L1177.2 477.6L1172.5 476.0L1167.8 475.4L1163.2 475.9L1158.9 477.5L1154.9 480.0L1151.3 483.6L1148.2 488.0L1145.8 493.2L1144.0 499.0L1142.9 505.3L1142.5 511.9L1122.5 507.3L1122.5 474.2L1122.8 474.2L1123.2 474.4L1123.8 474.5L1124.3 474.7L1124.9 474.8L1125.5 474.9L1126.1 474.9L1126.8 474.9L1127.4 474.9L1128.1 474.8L1128.8 474.6L1129.5 474.3L1130.1 473.8L1130.8 473.2L1131.4 472.5L1132.0 471.7L1132.7 470.9L1133.5 470.2L1134.4 469.5L1135.4 468.7L1136.4 467.9L1137.5 467.2L1138.5 466.6L1139.5 466.1L1140.4 465.9L1141.1 465.8L1141.9 465.9L1142.7 466.0L1143.5 466.2L1144.5 466.3L1145.6 466.5L1146.9 466.8L1148.3 467.1L1149.7 467.3L1150.9 467.5L1152.0 467.6L1152.9 467.4L1153.7 467.2L1154.4 467.0L1155.0 466.6L1155.5 466.1L1156.0 465.5L1156.4 464.8L1156.7 463.9L1157.0 463.0L1157.1 461.9L1157.1 460.8L1157.0 459.7L1156.7 458.5L1156.2 457.2L1155.6 455.8L1154.9 454.4L1154.2 453.1L1153.5 451.9L1152.8 450.9L1151.9 449.9L1151.0 449.0L1150.3 448.2L1149.7 447.4L1149.5 446.5L1149.7 445.5L1150.2 444.6L1151.0 443.6L1151.8 442.7L1152.7 441.8L1153.5 440.9L1154.3 440.1L1155.3 439.3L1156.3 438.6L1157.2 437.9L1157.8 437.1L1158.0 436.5L1157.7 435.8L1156.9 435.2L1155.8 434.5L1154.7 433.9L1153.5 433.3L1152.5 432.7L1151.6 432.0L1150.6 431.4L1149.6 430.8L1148.7 430.1L1148.0 429.4L1147.5 428.5L1147.3 427.5L1147.3 426.5L1147.4 425.4L1147.6 424.2L1147.9 423.0L1148.0 421.6L1148.1 420.1L1148.2 418.4L1148.4 416.5L1148.5 414.8L1148.5 413.1L1148.5 411.7L1148.4 410.6L1148.3 409.6L1148.2 408.7L1147.9 408.0L1147.6 407.4L1147.0 406.9L1146.2 406.6L1145.2 406.5L1144.0 406.5L1142.8 406.6L1141.6 406.8L1140.5 406.9L1139.4 407.0L1138.2 407.3L1137.1 407.5L1136.0 407.7L1135.1 407.7L1134.5 407.5L1134.2 406.9L1134.2 406.0L1134.3 405.0L1134.6 403.9L1134.8 402.7L1135.0 401.6L1135.1 400.5L1135.2 399.3L1135.3 398.1L1135.4 396.9L1135.4 395.7L1135.5 394.7L1135.6 393.8L1135.6 392.9L1135.7 392.1L1135.7 391.3L1135.7 390.5L1135.5 389.7L1135.3 388.8L1134.9 387.9L1134.5 387.0L1134.1 386.1L1133.6 385.3L1133.0 384.6L1132.4 384.0L1131.7 383.5L1131.0 383.1L1130.2 382.7L1129.4 382.4L1128.5 382.1L1127.5 381.7L1126.4 381.4L1125.2 381.2L1124.1 381.0L1123.2 380.8L1122.5 380.7L1122.5 360.7Z"/><path d="M1115.0 508.3L1135.0 512.9L1135.4 506.3L1136.5 500.0L1138.3 494.2L1140.7 489.0L1143.8 484.6L1147.4 481.0L1151.4 478.5L1155.7 476.9L1160.3 476.4L1165.0 477.0L1169.7 478.6L1174.3 481.2L1178.6 484.8L1182.6 489.3L1186.2 494.5L1189.3 500.4L1191.7 506.7L1193.5 513.3L1194.6 520.2L1195.0 527.0L1215.8 531.8L1215.8 551.8L1216.4 552.0L1217.4 552.1L1218.5 552.4L1219.6 552.6L1220.8 552.9L1221.8 553.2L1222.6 553.6L1223.4 553.9L1224.2 554.3L1225.0 554.7L1225.6 555.2L1226.2 555.8L1226.8 556.5L1227.3 557.3L1227.8 558.2L1228.2 559.1L1228.5 560.0L1228.8 560.9L1228.9 561.7L1229.0 562.5L1228.9 563.3L1228.9 564.1L1228.8 564.9L1228.8 565.9L1228.7 566.9L1228.6 568.1L1228.5 569.3L1228.4 570.5L1228.3 571.6L1228.2 572.8L1228.1 573.9L1227.8 575.0L1227.6 576.2L1227.4 577.2L1227.5 578.0L1227.8 578.6L1228.4 578.9L1229.2 578.9L1230.3 578.7L1231.5 578.4L1232.6 578.2L1233.8 578.0L1234.9 578.0L1236.1 577.8L1237.3 577.7L1238.4 577.7L1239.5 577.8L1240.2 578.1L1240.8 578.5L1241.2 579.1L1241.4 579.9L1241.6 580.7L1241.7 581.8L1241.8 582.9L1241.8 584.3L1241.7 585.9L1241.6 587.7L1241.5 589.5L1241.4 591.3L1241.2 592.8L1241.1 594.1L1240.9 595.4L1240.7 596.6L1240.5 597.7L1240.5 598.7L1240.8 599.7L1241.3 600.5L1242.0 601.3L1242.9 602.0L1243.8 602.6L1244.8 603.2L1245.8 603.8L1246.8 604.5L1247.9 605.1L1249.1 605.7L1250.1 606.3L1250.9 607.0L1251.2 607.6L1251.1 608.3L1250.5 609.0L1249.6 609.7L1248.6 610.5L1247.6 611.3L1246.8 612.1L1246.0 612.9L1245.1 613.9L1244.2 614.8L1243.5 615.8L1242.9 616.7L1242.8 617.6L1243.0 618.5L1243.5 619.4L1244.3 620.2L1245.2 621.1L1246.0 622.0L1246.8 623.1L1247.4 624.3L1248.1 625.6L1248.8 627.0L1249.4 628.4L1249.9 629.7L1250.2 630.9L1250.4 632.0L1250.4 633.1L1250.2 634.1L1250.0 635.1L1249.6 635.9L1249.2 636.7L1248.8 637.3L1248.3 637.8L1247.7 638.1L1247.0 638.4L1246.2 638.6L1245.2 638.7L1244.2 638.7L1242.9 638.5L1241.6 638.2L1240.2 637.9L1238.9 637.7L1237.8 637.5L1236.8 637.3L1235.9 637.2L1235.2 637.1L1234.4 637.0L1233.6 637.1L1232.8 637.3L1231.8 637.7L1230.8 638.4L1229.7 639.1L1228.6 639.9L1227.6 640.7L1226.8 641.4L1226.0 642.1L1225.3 642.9L1224.6 643.7L1224.0 644.4L1223.4 645.0L1222.8 645.5L1222.1 645.8L1221.4 646.0L1220.7 646.0L1220.0 646.1L1219.4 646.0L1218.8 646.0L1218.2 646.0L1217.6 645.9L1217.0 645.7L1216.5 645.6L1216.1 645.4L1215.8 645.3L1215.8 678.4L1195.0 673.6L1194.6 666.8L1193.5 659.9L1191.7 653.3L1189.3 647.0L1186.2 641.1L1182.6 635.9L1178.6 631.4L1174.3 627.8L1169.7 625.2L1165.0 623.6L1160.3 623.0L1155.7 623.5L1151.4 625.1L1147.4 627.6L1143.8 631.2L1140.7 635.6L1138.3 640.8L1136.5 646.6L1135.4 652.9L1135.0 659.5L1115.0 654.9L1115.0 621.8L1115.3 621.8L1115.7 622.0L1116.2 622.1L1116.8 622.3L1117.4 622.4L1118.0 622.5L1118.6 622.5L1119.3 622.5L1119.9 622.5L1120.6 622.4L1121.3 622.2L1122.0 621.9L1122.6 621.4L1123.3 620.8L1123.9 620.1L1124.5 619.3L1125.2 618.5L1126.0 617.8L1126.9 617.1L1127.9 616.3L1128.9 615.5L1130.0 614.8L1131.0 614.2L1132.0 613.7L1132.9 613.5L1133.6 613.4L1134.4 613.5L1135.2 613.6L1136.0 613.8L1137.0 613.9L1138.1 614.1L1139.4 614.4L1140.8 614.7L1142.2 614.9L1143.4 615.1L1144.5 615.2L1145.4 615.0L1146.2 614.8L1146.9 614.6L1147.5 614.2L1148.0 613.7L1148.5 613.1L1148.9 612.4L1149.2 611.5L1149.5 610.6L1149.6 609.5L1149.6 608.4L1149.5 607.3L1149.2 606.1L1148.7 604.8L1148.1 603.4L1147.4 602.0L1146.7 600.7L1146.0 599.5L1145.3 598.5L1144.4 597.5L1143.5 596.6L1142.8 595.8L1142.2 595.0L1142.0 594.1L1142.2 593.1L1142.7 592.2L1143.5 591.2L1144.3 590.3L1145.2 589.4L1146.0 588.5L1146.8 587.7L1147.8 586.9L1148.8 586.2L1149.7 585.5L1150.3 584.7L1150.5 584.1L1150.2 583.4L1149.4 582.8L1148.3 582.1L1147.2 581.5L1146.0 580.9L1145.0 580.3L1144.1 579.6L1143.1 579.0L1142.1 578.4L1141.2 577.7L1140.5 577.0L1140.0 576.1L1139.8 575.1L1139.8 574.1L1139.9 573.0L1140.1 571.8L1140.4 570.6L1140.5 569.2L1140.6 567.7L1140.7 566.0L1140.9 564.1L1141.0 562.4L1141.0 560.7L1141.0 559.3L1140.9 558.2L1140.8 557.2L1140.7 556.3L1140.4 555.6L1140.1 555.0L1139.5 554.5L1138.7 554.2L1137.7 554.1L1136.5 554.1L1135.3 554.2L1134.1 554.4L1133.0 554.5L1131.9 554.6L1130.7 554.9L1129.6 555.1L1128.5 555.3L1127.6 555.3L1127.0 555.1L1126.7 554.5L1126.7 553.6L1126.8 552.6L1127.1 551.5L1127.3 550.3L1127.5 549.2L1127.6 548.1L1127.7 546.9L1127.8 545.7L1127.9 544.5L1127.9 543.3L1128.0 542.3L1128.1 541.4L1128.1 540.5L1128.2 539.7L1128.2 538.9L1128.2 538.1L1128.0 537.3L1127.8 536.4L1127.4 535.5L1127.0 534.6L1126.6 533.7L1126.1 532.9L1125.5 532.2L1124.9 531.6L1124.2 531.1L1123.5 530.7L1122.7 530.3L1121.9 530.0L1121.0 529.7L1120.0 529.3L1118.9 529.0L1117.7 528.8L1116.6 528.6L1115.7 528.4L1115.0 528.3L1115.0 508.3Z"/><path d="M1122.5 507.3L1142.5 511.9L1142.9 505.3L1144.0 499.0L1145.8 493.2L1148.2 488.0L1151.3 483.6L1154.9 480.0L1158.9 477.5L1163.2 475.9L1167.8 475.4L1172.5 476.0L1177.2 477.6L1181.8 480.2L1186.1 483.8L1190.1 488.3L1193.7 493.5L1196.8 499.4L1199.2 505.7L1201.0 512.3L1202.1 519.2L1202.5 526.0L1223.2 530.8L1223.2 550.8L1223.9 551.0L1224.9 551.1L1226.0 551.4L1227.1 551.6L1228.3 551.9L1229.2 552.2L1230.1 552.6L1230.9 552.9L1231.7 553.3L1232.5 553.7L1233.1 554.2L1233.8 554.8L1234.3 555.5L1234.8 556.3L1235.3 557.2L1235.7 558.1L1236.0 559.0L1236.2 559.9L1236.4 560.7L1236.5 561.5L1236.4 562.3L1236.4 563.1L1236.3 563.9L1236.2 564.9L1236.2 565.9L1236.1 567.1L1236.0 568.3L1235.9 569.5L1235.8 570.6L1235.8 571.8L1235.6 572.9L1235.3 574.0L1235.1 575.2L1234.9 576.2L1235.0 577.0L1235.2 577.6L1235.9 577.9L1236.8 577.9L1237.8 577.7L1239.0 577.4L1240.1 577.2L1241.2 577.0L1242.4 577.0L1243.6 576.8L1244.8 576.7L1245.9 576.7L1247.0 576.8L1247.8 577.1L1248.3 577.5L1248.7 578.1L1248.9 578.9L1249.1 579.7L1249.2 580.8L1249.2 581.9L1249.3 583.3L1249.2 584.9L1249.1 586.7L1249.0 588.5L1248.9 590.3L1248.8 591.8L1248.6 593.1L1248.4 594.4L1248.2 595.6L1248.0 596.7L1248.0 597.7L1248.2 598.7L1248.8 599.5L1249.5 600.3L1250.4 601.0L1251.3 601.6L1252.3 602.2L1253.2 602.8L1254.3 603.5L1255.4 604.1L1256.6 604.7L1257.6 605.3L1258.4 606.0L1258.8 606.6L1258.6 607.3L1258.0 608.0L1257.1 608.7L1256.1 609.5L1255.1 610.3L1254.2 611.1L1253.5 611.9L1252.6 612.9L1251.7 613.8L1251.0 614.8L1250.4 615.7L1250.2 616.6L1250.5 617.5L1251.0 618.4L1251.8 619.2L1252.7 620.1L1253.5 621.0L1254.2 622.1L1254.9 623.3L1255.6 624.6L1256.3 626.0L1256.9 627.4L1257.4 628.7L1257.8 629.9L1257.9 631.0L1257.9 632.1L1257.7 633.1L1257.5 634.1L1257.1 634.9L1256.8 635.7L1256.3 636.3L1255.8 636.8L1255.2 637.1L1254.5 637.4L1253.7 637.6L1252.8 637.7L1251.7 637.7L1250.4 637.5L1249.1 637.2L1247.7 636.9L1246.4 636.7L1245.2 636.5L1244.3 636.3L1243.4 636.2L1242.7 636.1L1241.9 636.0L1241.1 636.1L1240.2 636.3L1239.3 636.7L1238.2 637.4L1237.2 638.1L1236.1 638.9L1235.1 639.7L1234.2 640.4L1233.5 641.1L1232.8 641.9L1232.1 642.7L1231.5 643.4L1230.9 644.0L1230.2 644.5L1229.6 644.8L1228.9 645.0L1228.2 645.0L1227.5 645.1L1226.9 645.0L1226.2 645.0L1225.7 645.0L1225.1 644.9L1224.5 644.7L1224.0 644.6L1223.6 644.4L1223.2 644.3L1223.2 677.4L1202.5 672.6L1202.1 665.8L1201.0 658.9L1199.2 652.3L1196.8 646.0L1193.7 640.1L1190.1 634.9L1186.1 630.4L1181.8 626.8L1177.2 624.2L1172.5 622.6L1167.8 622.0L1163.2 622.5L1158.9 624.1L1154.9 626.6L1151.3 630.2L1148.2 634.6L1145.8 639.8L1144.0 645.6L1142.9 651.9L1142.5 658.5L1122.5 653.9L1122.5 620.8L1122.8 620.8L1123.2 621.0L1123.8 621.1L1124.3 621.3L1124.9 621.4L1125.5 621.5L1126.1 621.5L1126.8 621.5L1127.4 621.5L1128.1 621.4L1128.8 621.2L1129.5 620.9L1130.1 620.4L1130.8 619.8L1131.4 619.1L1132.0 618.3L1132.7 617.5L1133.5 616.8L1134.4 616.1L1135.4 615.3L1136.4 614.5L1137.5 613.8L1138.5 613.2L1139.5 612.7L1140.4 612.5L1141.1 612.4L1141.9 612.5L1142.7 612.6L1143.5 612.8L1144.5 612.9L1145.6 613.1L1146.9 613.4L1148.3 613.7L1149.7 613.9L1150.9 614.1L1152.0 614.2L1152.9 614.0L1153.7 613.8L1154.4 613.6L1155.0 613.2L1155.5 612.7L1156.0 612.1L1156.4 611.4L1156.7 610.5L1157.0 609.6L1157.1 608.5L1157.1 607.4L1157.0 606.3L1156.7 605.1L1156.2 603.8L1155.6 602.4L1154.9 601.0L1154.2 599.7L1153.5 598.5L1152.8 597.5L1151.9 596.5L1151.0 595.6L1150.3 594.8L1149.7 594.0L1149.5 593.1L1149.7 592.1L1150.2 591.2L1151.0 590.2L1151.8 589.3L1152.7 588.4L1153.5 587.5L1154.3 586.7L1155.3 585.9L1156.3 585.2L1157.2 584.5L1157.8 583.7L1158.0 583.1L1157.7 582.4L1156.9 581.8L1155.8 581.1L1154.7 580.5L1153.5 579.9L1152.5 579.3L1151.6 578.6L1150.6 578.0L1149.6 577.4L1148.7 576.7L1148.0 576.0L1147.5 575.1L1147.3 574.1L1147.3 573.1L1147.4 572.0L1147.6 570.8L1147.9 569.6L1148.0 568.2L1148.1 566.7L1148.2 565.0L1148.4 563.1L1148.5 561.4L1148.5 559.7L1148.5 558.3L1148.4 557.2L1148.3 556.2L1148.2 555.3L1147.9 554.6L1147.6 554.0L1147.0 553.5L1146.2 553.2L1145.2 553.1L1144.0 553.1L1142.8 553.2L1141.6 553.4L1140.5 553.5L1139.4 553.6L1138.2 553.9L1137.1 554.1L1136.0 554.3L1135.1 554.3L1134.5 554.1L1134.2 553.5L1134.2 552.6L1134.3 551.6L1134.6 550.5L1134.8 549.3L1135.0 548.2L1135.1 547.1L1135.2 545.9L1135.3 544.7L1135.4 543.5L1135.4 542.3L1135.5 541.3L1135.6 540.4L1135.6 539.5L1135.7 538.7L1135.7 537.9L1135.7 537.1L1135.5 536.3L1135.3 535.4L1134.9 534.5L1134.5 533.6L1134.1 532.7L1133.6 531.9L1133.0 531.2L1132.4 530.6L1131.7 530.1L1131.0 529.7L1130.2 529.3L1129.4 529.0L1128.5 528.7L1127.5 528.3L1126.4 528.0L1125.2 527.8L1124.1 527.6L1123.2 527.4L1122.5 527.3L1122.5 507.3Z"/><path d="M1115.0 654.9L1135.0 659.5L1135.4 652.9L1136.5 646.6L1138.3 640.8L1140.7 635.6L1143.8 631.2L1147.4 627.6L1151.4 625.1L1155.7 623.5L1160.3 623.0L1165.0 623.6L1169.7 625.2L1174.3 627.8L1178.6 631.4L1182.6 635.9L1186.2 641.1L1189.3 647.0L1191.7 653.3L1193.5 659.9L1194.6 666.8L1195.0 673.6L1215.8 678.4L1215.8 698.4L1216.4 698.6L1217.4 698.7L1218.5 699.0L1219.6 699.2L1220.8 699.5L1221.8 699.8L1222.6 700.2L1223.4 700.5L1224.2 700.9L1225.0 701.3L1225.6 701.8L1226.2 702.4L1226.8 703.1L1227.3 703.9L1227.8 704.8L1228.2 705.7L1228.5 706.6L1228.8 707.5L1228.9 708.3L1229.0 709.1L1228.9 709.9L1228.9 710.7L1228.8 711.5L1228.8 712.5L1228.7 713.5L1228.6 714.7L1228.5 715.9L1228.4 717.1L1228.3 718.2L1228.2 719.4L1228.1 720.5L1227.8 721.6L1227.6 722.8L1227.4 723.8L1227.5 724.6L1227.8 725.2L1228.4 725.5L1229.2 725.5L1230.3 725.3L1231.5 725.0L1232.6 724.8L1233.8 724.6L1234.9 724.6L1236.1 724.4L1237.3 724.3L1238.4 724.3L1239.5 724.4L1240.2 724.7L1240.8 725.1L1241.2 725.7L1241.4 726.5L1241.6 727.3L1241.7 728.4L1241.8 729.5L1241.8 730.9L1241.7 732.5L1241.6 734.3L1241.5 736.1L1241.4 737.9L1241.2 739.4L1241.1 740.7L1240.9 742.0L1240.7 743.2L1240.5 744.3L1240.5 745.3L1240.8 746.3L1241.3 747.1L1242.0 747.9L1242.9 748.6L1243.8 749.2L1244.8 749.8L1245.8 750.4L1246.8 751.1L1247.9 751.7L1249.1 752.3L1250.1 752.9L1250.9 753.6L1251.2 754.2L1251.1 754.9L1250.5 755.6L1249.6 756.3L1248.6 757.1L1247.6 757.9L1246.8 758.7L1246.0 759.5L1245.1 760.5L1244.2 761.4L1243.5 762.4L1242.9 763.3L1242.8 764.2L1243.0 765.1L1243.5 766.0L1244.3 766.8L1245.2 767.7L1246.0 768.6L1246.8 769.7L1247.4 770.9L1248.1 772.2L1248.8 773.6L1249.4 775.0L1249.9 776.3L1250.2 777.5L1250.4 778.6L1250.4 779.7L1250.2 780.7L1250.0 781.7L1249.6 782.5L1249.2 783.3L1248.8 783.9L1248.3 784.4L1247.7 784.7L1247.0 785.0L1246.2 785.2L1245.2 785.3L1244.2 785.3L1242.9 785.1L1241.6 784.8L1240.2 784.5L1238.9 784.3L1237.8 784.1L1236.8 783.9L1235.9 783.8L1235.2 783.7L1234.4 783.6L1233.6 783.7L1232.8 783.9L1231.8 784.3L1230.8 785.0L1229.7 785.7L1228.6 786.5L1227.6 787.3L1226.8 788.0L1226.0 788.7L1225.3 789.5L1224.6 790.3L1224.0 791.0L1223.4 791.6L1222.8 792.1L1222.1 792.4L1221.4 792.6L1220.7 792.6L1220.0 792.7L1219.4 792.6L1218.8 792.6L1218.2 792.6L1217.6 792.5L1217.0 792.3L1216.5 792.2L1216.1 792.0L1215.8 791.9L1215.8 825.0L1195.0 820.2L1194.6 813.4L1193.5 806.5L1191.7 799.9L1189.3 793.6L1186.2 787.7L1182.6 782.5L1178.6 778.0L1174.3 774.4L1169.7 771.8L1165.0 770.2L1160.3 769.6L1155.7 770.1L1151.4 771.7L1147.4 774.2L1143.8 777.8L1140.7 782.2L1138.3 787.4L1136.5 793.2L1135.4 799.5L1135.0 806.1L1115.0 801.5L1115.0 768.4L1115.3 768.4L1115.7 768.6L1116.2 768.7L1116.8 768.9L1117.4 769.0L1118.0 769.1L1118.6 769.1L1119.3 769.1L1119.9 769.1L1120.6 769.0L1121.3 768.8L1122.0 768.5L1122.6 768.0L1123.3 767.4L1123.9 766.7L1124.5 765.9L1125.2 765.1L1126.0 764.4L1126.9 763.7L1127.9 762.9L1128.9 762.1L1130.0 761.4L1131.0 760.8L1132.0 760.3L1132.9 760.1L1133.6 760.0L1134.4 760.1L1135.2 760.2L1136.0 760.4L1137.0 760.5L1138.1 760.7L1139.4 761.0L1140.8 761.3L1142.2 761.5L1143.4 761.7L1144.5 761.8L1145.4 761.6L1146.2 761.4L1146.9 761.2L1147.5 760.8L1148.0 760.3L1148.5 759.7L1148.9 759.0L1149.2 758.1L1149.5 757.2L1149.6 756.1L1149.6 755.0L1149.5 753.9L1149.2 752.7L1148.7 751.4L1148.1 750.0L1147.4 748.6L1146.7 747.3L1146.0 746.1L1145.3 745.1L1144.4 744.1L1143.5 743.2L1142.8 742.4L1142.2 741.6L1142.0 740.7L1142.2 739.7L1142.7 738.8L1143.5 737.8L1144.3 736.9L1145.2 736.0L1146.0 735.1L1146.8 734.3L1147.8 733.5L1148.8 732.8L1149.7 732.1L1150.3 731.3L1150.5 730.7L1150.2 730.0L1149.4 729.4L1148.3 728.7L1147.2 728.1L1146.0 727.5L1145.0 726.9L1144.1 726.2L1143.1 725.6L1142.1 725.0L1141.2 724.3L1140.5 723.6L1140.0 722.7L1139.8 721.7L1139.8 720.7L1139.9 719.6L1140.1 718.4L1140.4 717.2L1140.5 715.8L1140.6 714.3L1140.7 712.6L1140.9 710.7L1141.0 709.0L1141.0 707.3L1141.0 705.9L1140.9 704.8L1140.8 703.8L1140.7 702.9L1140.4 702.2L1140.1 701.6L1139.5 701.1L1138.7 700.8L1137.7 700.7L1136.5 700.7L1135.3 700.8L1134.1 701.0L1133.0 701.1L1131.9 701.2L1130.7 701.5L1129.6 701.7L1128.5 701.9L1127.6 701.9L1127.0 701.7L1126.7 701.1L1126.7 700.2L1126.8 699.2L1127.1 698.1L1127.3 696.9L1127.5 695.8L1127.6 694.7L1127.7 693.5L1127.8 692.3L1127.9 691.1L1127.9 689.9L1128.0 688.9L1128.1 688.0L1128.1 687.1L1128.2 686.3L1128.2 685.5L1128.2 684.7L1128.0 683.9L1127.8 683.0L1127.4 682.1L1127.0 681.2L1126.6 680.3L1126.1 679.5L1125.5 678.8L1124.9 678.2L1124.2 677.7L1123.5 677.3L1122.7 676.9L1121.9 676.6L1121.0 676.3L1120.0 675.9L1118.9 675.6L1117.7 675.4L1116.6 675.2L1115.7 675.0L1115.0 674.9L1115.0 654.9Z"/><path d="M1122.5 653.9L1142.5 658.5L1142.9 651.9L1144.0 645.6L1145.8 639.8L1148.2 634.6L1151.3 630.2L1154.9 626.6L1158.9 624.1L1163.2 622.5L1167.8 622.0L1172.5 622.6L1177.2 624.2L1181.8 626.8L1186.1 630.4L1190.1 634.9L1193.7 640.1L1196.8 646.0L1199.2 652.3L1201.0 658.9L1202.1 665.8L1202.5 672.6L1223.2 677.4L1223.2 697.4L1223.9 697.6L1224.9 697.7L1226.0 698.0L1227.1 698.2L1228.3 698.5L1229.2 698.8L1230.1 699.2L1230.9 699.5L1231.7 699.9L1232.5 700.3L1233.1 700.8L1233.8 701.4L1234.3 702.1L1234.8 702.9L1235.3 703.8L1235.7 704.7L1236.0 705.6L1236.2 706.5L1236.4 707.3L1236.5 708.1L1236.4 708.9L1236.4 709.7L1236.3 710.5L1236.2 711.5L1236.2 712.5L1236.1 713.7L1236.0 714.9L1235.9 716.1L1235.8 717.2L1235.8 718.4L1235.6 719.5L1235.3 720.6L1235.1 721.8L1234.9 722.8L1235.0 723.6L1235.2 724.2L1235.9 724.5L1236.8 724.5L1237.8 724.3L1239.0 724.0L1240.1 723.8L1241.2 723.6L1242.4 723.6L1243.6 723.4L1244.8 723.3L1245.9 723.3L1247.0 723.4L1247.8 723.7L1248.3 724.1L1248.7 724.7L1248.9 725.5L1249.1 726.3L1249.2 727.4L1249.2 728.5L1249.3 729.9L1249.2 731.5L1249.1 733.3L1249.0 735.1L1248.9 736.9L1248.8 738.4L1248.6 739.7L1248.4 741.0L1248.2 742.2L1248.0 743.3L1248.0 744.3L1248.2 745.3L1248.8 746.1L1249.5 746.9L1250.4 747.6L1251.3 748.2L1252.3 748.8L1253.2 749.4L1254.3 750.1L1255.4 750.7L1256.6 751.3L1257.6 751.9L1258.4 752.6L1258.8 753.2L1258.6 753.9L1258.0 754.6L1257.1 755.3L1256.1 756.1L1255.1 756.9L1254.2 757.7L1253.5 758.5L1252.6 759.5L1251.7 760.4L1251.0 761.4L1250.4 762.3L1250.2 763.2L1250.5 764.1L1251.0 765.0L1251.8 765.8L1252.7 766.7L1253.5 767.6L1254.2 768.7L1254.9 769.9L1255.6 771.2L1256.3 772.6L1256.9 774.0L1257.4 775.3L1257.8 776.5L1257.9 777.6L1257.9 778.7L1257.7 779.7L1257.5 780.7L1257.1 781.5L1256.8 782.3L1256.3 782.9L1255.8 783.4L1255.2 783.7L1254.5 784.0L1253.7 784.2L1252.8 784.3L1251.7 784.3L1250.4 784.1L1249.1 783.8L1247.7 783.5L1246.4 783.3L1245.2 783.1L1244.3 782.9L1243.4 782.8L1242.7 782.7L1241.9 782.6L1241.1 782.7L1240.2 782.9L1239.3 783.3L1238.2 784.0L1237.2 784.7L1236.1 785.5L1235.1 786.3L1234.2 787.0L1233.5 787.7L1232.8 788.5L1232.1 789.3L1231.5 790.0L1230.9 790.6L1230.2 791.1L1229.6 791.4L1228.9 791.6L1228.2 791.6L1227.5 791.7L1226.9 791.6L1226.2 791.6L1225.7 791.6L1225.1 791.5L1224.5 791.3L1224.0 791.2L1223.6 791.0L1223.2 790.9L1223.2 824.0L1202.5 819.2L1202.1 812.4L1201.0 805.5L1199.2 798.9L1196.8 792.6L1193.7 786.7L1190.1 781.5L1186.1 777.0L1181.8 773.4L1177.2 770.8L1172.5 769.2L1167.8 768.6L1163.2 769.1L1158.9 770.7L1154.9 773.2L1151.3 776.8L1148.2 781.2L1145.8 786.4L1144.0 792.2L1142.9 798.5L1142.5 805.1L1122.5 800.5L1122.5 767.4L1122.8 767.4L1123.2 767.6L1123.8 767.7L1124.3 767.9L1124.9 768.0L1125.5 768.1L1126.1 768.1L1126.8 768.1L1127.4 768.1L1128.1 768.0L1128.8 767.8L1129.5 767.5L1130.1 767.0L1130.8 766.4L1131.4 765.7L1132.0 764.9L1132.7 764.1L1133.5 763.4L1134.4 762.7L1135.4 761.9L1136.4 761.1L1137.5 760.4L1138.5 759.8L1139.5 759.3L1140.4 759.1L1141.1 759.0L1141.9 759.1L1142.7 759.2L1143.5 759.4L1144.5 759.5L1145.6 759.7L1146.9 760.0L1148.3 760.3L1149.7 760.5L1150.9 760.7L1152.0 760.8L1152.9 760.6L1153.7 760.4L1154.4 760.2L1155.0 759.8L1155.5 759.3L1156.0 758.7L1156.4 758.0L1156.7 757.1L1157.0 756.2L1157.1 755.1L1157.1 754.0L1157.0 752.9L1156.7 751.7L1156.2 750.4L1155.6 749.0L1154.9 747.6L1154.2 746.3L1153.5 745.1L1152.8 744.1L1151.9 743.1L1151.0 742.2L1150.3 741.4L1149.7 740.6L1149.5 739.7L1149.7 738.7L1150.2 737.8L1151.0 736.8L1151.8 735.9L1152.7 735.0L1153.5 734.1L1154.3 733.3L1155.3 732.5L1156.3 731.8L1157.2 731.1L1157.8 730.3L1158.0 729.7L1157.7 729.0L1156.9 728.4L1155.8 727.7L1154.7 727.1L1153.5 726.5L1152.5 725.9L1151.6 725.2L1150.6 724.6L1149.6 724.0L1148.7 723.3L1148.0 722.6L1147.5 721.7L1147.3 720.7L1147.3 719.7L1147.4 718.6L1147.6 717.4L1147.9 716.2L1148.0 714.8L1148.1 713.3L1148.2 711.6L1148.4 709.7L1148.5 708.0L1148.5 706.3L1148.5 704.9L1148.4 703.8L1148.3 702.8L1148.2 701.9L1147.9 701.2L1147.6 700.6L1147.0 700.1L1146.2 699.8L1145.2 699.7L1144.0 699.7L1142.8 699.8L1141.6 700.0L1140.5 700.1L1139.4 700.2L1138.2 700.5L1137.1 700.7L1136.0 700.9L1135.1 700.9L1134.5 700.7L1134.2 700.1L1134.2 699.2L1134.3 698.2L1134.6 697.1L1134.8 695.9L1135.0 694.8L1135.1 693.7L1135.2 692.5L1135.3 691.3L1135.4 690.1L1135.4 688.9L1135.5 687.9L1135.6 687.0L1135.6 686.1L1135.7 685.3L1135.7 684.5L1135.7 683.7L1135.5 682.9L1135.3 682.0L1134.9 681.1L1134.5 680.2L1134.1 679.3L1133.6 678.5L1133.0 677.8L1132.4 677.2L1131.7 676.7L1131.0 676.3L1130.2 675.9L1129.4 675.6L1128.5 675.3L1127.5 674.9L1126.4 674.6L1125.2 674.4L1124.1 674.2L1123.2 674.0L1122.5 673.9L1122.5 653.9Z"/><rect x="963.4" y="723.0" width="9" height="94"/><rect x="1064.2" y="746.6" width="9" height="94"/><rect x="1164.9" y="770.2" width="9" height="94"/></clipPath>
<g clip-path="url(#below)"><g clip-path="url(#mclip)">
<path d="M96.3 587.5L1103.9 825.5M133.1 580.3L1140.7 818.3M169.9 573.2L1177.5 811.2M206.7 566.0L1214.3 804.0M280.3 551.7L1287.9 789.7M317.1 544.6L1324.7 782.6M353.9 537.4L1361.5 775.4M390.7 530.2L1398.3 768.2M464.3 515.9L1471.9 753.9M501.1 508.8L1508.7 746.8M537.9 501.6L1545.5 739.6M574.7 494.5L1582.3 732.5M648.3 480.1L1655.9 718.1M685.1 473.0L1692.7 711.0M721.9 465.8L1729.5 703.8M758.7 458.7L1766.3 696.7M832.3 444.4L1839.9 682.4M869.1 437.2L1876.7 675.2M905.9 430.0L1913.5 668.0M942.7 422.9L1950.3 660.9M1016.3 408.6L2023.9 646.6M1053.1 401.4L2060.7 639.4M1089.9 394.3L2097.5 632.3M1126.7 387.1L2134.3 625.1M1200.3 372.8L2207.9 610.8M94.3 588.8L1204.8 372.9M127.7 596.7L1238.1 380.7M161.1 604.6L1271.5 388.6M194.5 612.5L1304.9 396.5M261.3 628.2L1371.7 412.3M294.6 636.1L1405.1 420.2M328.0 644.0L1438.5 428.1M361.4 651.9L1471.9 436.0M428.2 667.7L1538.7 451.7M461.6 675.6L1572.0 459.6M495.0 683.5L1605.4 467.5M528.4 691.3L1638.8 475.4M595.2 707.1L1705.6 491.2M628.5 715.0L1739.0 499.1M661.9 722.9L1772.4 506.9M695.3 730.8L1805.8 514.8M762.1 746.6L1872.6 530.6M795.5 754.4L1906.0 538.5M828.9 762.3L1939.3 546.4M862.3 770.2L1972.7 554.3M929.1 786.0L2039.5 570.0M962.5 793.9L2072.9 577.9M995.8 801.8L2106.3 585.8M1029.2 809.7L2139.7 593.7M1096.0 825.4L2206.5 609.5" stroke="rgba(0,0,0,0.07)" stroke-width="1" fill="none"/><path d="M243.5 558.9L1251.1 796.9M427.5 523.1L1435.1 761.1M611.5 487.3L1619.1 725.3M795.5 451.5L1803.1 689.5M979.5 415.7L1987.1 653.7M1163.5 380.0L2171.1 618.0M227.9 620.4L1338.3 404.4M394.8 659.8L1505.3 443.8M561.8 699.2L1672.2 483.3M728.7 738.7L1839.2 522.7M895.7 778.1L2006.1 562.2M1062.6 817.5L2173.1 601.6" stroke="rgba(0,0,0,0.22)" stroke-width="1" fill="none"/>
<path d="M227.9 620.4L1338.3 404.4" stroke="rgba(255,0,0,0.45)" stroke-width="1.1"/>
<path d="M92.2 588.3L1202.6 372.3L2210.2 610.3L1099.7 826.3Z" stroke="rgba(0,0,0,0.5)" stroke-width="1.2" fill="none"/>
</g></g>
<g clip-path="url(#mclip)"><path d="M611.5 487.3L1619.1 725.3" stroke="rgba(0,215,0,0.5)" stroke-width="1.2"/></g>
<rect x="962.4" y="279.0" width="10" height="8" fill="url(#post)"/><ellipse cx="967.4" cy="279.0" rx="5" ry="1.8" fill="#b0b0aa"/>
<rect x="1063.2" y="302.6" width="10" height="8" fill="url(#post)"/><ellipse cx="1068.2" cy="302.6" rx="5" ry="1.8" fill="#b0b0aa"/>
<rect x="1163.9" y="326.2" width="10" height="8" fill="url(#post)"/><ellipse cx="1168.9" cy="326.2" rx="5" ry="1.8" fill="#b0b0aa"/>
<path d="M913.5 314.5L933.5 319.2L933.9 312.5L935.0 306.2L936.8 300.4L939.2 295.2L942.3 290.8L945.9 287.3L949.9 284.7L954.2 283.1L958.8 282.6L963.5 283.2L968.2 284.8L972.8 287.5L977.1 291.1L981.1 295.5L984.7 300.8L987.8 306.6L990.2 312.9L992.0 319.6L993.1 326.4L993.5 333.2L1014.2 338.1L1014.2 358.1L1014.9 358.2L1015.9 358.4L1017.0 358.6L1018.1 358.9L1019.3 359.2L1020.2 359.5L1021.1 359.8L1021.9 360.2L1022.7 360.5L1023.5 361.0L1024.1 361.4L1024.8 362.0L1025.3 362.7L1025.8 363.5L1026.3 364.4L1026.7 365.3L1027.0 366.2L1027.2 367.1L1027.4 367.9L1027.5 368.7L1027.4 369.5L1027.4 370.3L1027.3 371.2L1027.2 372.1L1027.2 373.2L1027.1 374.3L1027.0 375.5L1026.9 376.7L1026.8 377.9L1026.8 379.0L1026.6 380.1L1026.3 381.3L1026.1 382.4L1025.9 383.4L1026.0 384.3L1026.2 384.9L1026.9 385.2L1027.8 385.1L1028.8 385.0L1030.0 384.7L1031.1 384.4L1032.2 384.3L1033.4 384.2L1034.6 384.1L1035.8 384.0L1036.9 383.9L1038.0 384.0L1038.8 384.3L1039.3 384.8L1039.7 385.4L1039.9 386.1L1040.1 387.0L1040.2 388.0L1040.2 389.2L1040.3 390.6L1040.2 392.2L1040.1 394.0L1040.0 395.8L1039.9 397.5L1039.8 399.0L1039.6 400.4L1039.4 401.7L1039.2 402.8L1039.0 403.9L1039.0 405.0L1039.2 405.9L1039.8 406.8L1040.5 407.5L1041.4 408.2L1042.3 408.8L1043.3 409.5L1044.2 410.1L1045.3 410.7L1046.4 411.4L1047.6 412.0L1048.6 412.6L1049.4 413.2L1049.8 413.9L1049.6 414.6L1049.0 415.3L1048.1 416.0L1047.1 416.7L1046.1 417.5L1045.2 418.3L1044.5 419.2L1043.6 420.1L1042.7 421.0L1042.0 422.0L1041.4 423.0L1041.2 423.9L1041.5 424.8L1042.0 425.6L1042.8 426.5L1043.7 427.3L1044.5 428.3L1045.2 429.3L1045.9 430.5L1046.6 431.8L1047.3 433.2L1047.9 434.6L1048.4 435.9L1048.8 437.1L1048.9 438.3L1048.9 439.4L1048.7 440.4L1048.5 441.3L1048.1 442.2L1047.8 442.9L1047.3 443.5L1046.8 444.0L1046.2 444.4L1045.5 444.7L1044.7 444.9L1043.8 445.0L1042.7 444.9L1041.4 444.8L1040.1 444.5L1038.7 444.2L1037.4 443.9L1036.2 443.7L1035.3 443.6L1034.4 443.4L1033.7 443.3L1032.9 443.3L1032.1 443.3L1031.2 443.6L1030.3 444.0L1029.2 444.6L1028.2 445.3L1027.1 446.1L1026.1 446.9L1025.2 447.6L1024.5 448.4L1023.8 449.1L1023.1 449.9L1022.5 450.6L1021.9 451.2L1021.2 451.7L1020.6 452.0L1019.9 452.2L1019.2 452.3L1018.5 452.3L1017.9 452.3L1017.2 452.3L1016.7 452.2L1016.1 452.1L1015.5 452.0L1015.0 451.8L1014.6 451.7L1014.2 451.6L1014.2 484.7L993.5 479.8L993.1 473.0L992.0 466.2L990.2 459.5L987.8 453.2L984.7 447.4L981.1 442.1L977.1 437.7L972.8 434.1L968.2 431.4L963.5 429.8L958.8 429.2L954.2 429.7L949.9 431.3L945.9 433.9L942.3 437.4L939.2 441.8L936.8 447.0L935.0 452.8L933.9 459.1L933.5 465.8L913.5 461.1L913.5 428.0L913.8 428.1L914.2 428.2L914.8 428.4L915.3 428.5L915.9 428.7L916.5 428.7L917.1 428.7L917.8 428.7L918.4 428.7L919.1 428.6L919.8 428.4L920.5 428.1L921.1 427.7L921.8 427.0L922.4 426.3L923.0 425.6L923.7 424.8L924.5 424.1L925.4 423.3L926.4 422.6L927.4 421.8L928.5 421.0L929.5 420.4L930.5 420.0L931.4 419.7L932.1 419.7L932.9 419.7L933.7 419.9L934.5 420.0L935.5 420.1L936.6 420.3L937.9 420.6L939.3 420.9L940.7 421.2L941.9 421.4L943.0 421.4L943.9 421.3L944.7 421.1L945.4 420.8L946.0 420.4L946.5 419.9L947.0 419.3L947.4 418.6L947.7 417.8L948.0 416.8L948.1 415.8L948.1 414.7L948.0 413.6L947.7 412.4L947.2 411.0L946.6 409.6L945.9 408.3L945.2 406.9L944.5 405.8L943.8 404.7L942.9 403.8L942.0 402.9L941.3 402.1L940.7 401.2L940.5 400.3L940.7 399.4L941.2 398.4L942.0 397.5L942.8 396.5L943.7 395.6L944.5 394.8L945.3 393.9L946.3 393.2L947.3 392.4L948.2 391.7L948.8 391.0L949.0 390.3L948.7 389.6L947.9 389.0L946.8 388.4L945.7 387.8L944.5 387.2L943.5 386.5L942.6 385.9L941.6 385.3L940.6 384.6L939.7 384.0L939.0 383.2L938.5 382.4L938.3 381.4L938.3 380.4L938.4 379.3L938.6 378.1L938.9 376.8L939.0 375.5L939.1 373.9L939.2 372.2L939.4 370.4L939.5 368.6L939.5 367.0L939.5 365.6L939.4 364.4L939.3 363.4L939.2 362.5L938.9 361.8L938.6 361.2L938.0 360.7L937.2 360.4L936.2 360.3L935.0 360.4L933.8 360.5L932.6 360.6L931.5 360.7L930.4 360.9L929.2 361.1L928.1 361.4L927.0 361.6L926.1 361.6L925.5 361.3L925.2 360.7L925.2 359.9L925.3 358.8L925.6 357.7L925.8 356.5L926.0 355.4L926.1 354.3L926.2 353.1L926.3 351.9L926.4 350.7L926.4 349.6L926.5 348.5L926.6 347.6L926.6 346.7L926.7 345.9L926.7 345.1L926.7 344.4L926.5 343.5L926.3 342.7L925.9 341.8L925.5 340.8L925.1 340.0L924.6 339.2L924.0 338.5L923.4 337.9L922.7 337.4L922.0 337.0L921.2 336.6L920.4 336.2L919.5 335.9L918.5 335.6L917.4 335.3L916.2 335.0L915.1 334.8L914.2 334.6L913.5 334.5L913.5 314.5Z" fill="none" stroke="#5ab8ea" stroke-width="1.6"/>
<circle cx="925.8" cy="347.4" r="4" fill="#2d3237" stroke="#a8adb2" stroke-width="1.3"/>
<circle cx="1026.5" cy="371.0" r="4" fill="#2d3237" stroke="#a8adb2" stroke-width="1.3"/>
<circle cx="925.5" cy="361.3" r="4" fill="#2d3237" stroke="#a8adb2" stroke-width="1.3"/>
<circle cx="1026.2" cy="384.9" r="4" fill="#2d3237" stroke="#a8adb2" stroke-width="1.3"/>
<circle cx="939.5" cy="360.6" r="4" fill="#2d3237" stroke="#a8adb2" stroke-width="1.3"/>
<circle cx="1040.2" cy="384.2" r="4" fill="#2d3237" stroke="#a8adb2" stroke-width="1.3"/>
<circle cx="939.0" cy="383.0" r="4" fill="#2d3237" stroke="#a8adb2" stroke-width="1.3"/>
<circle cx="1039.8" cy="406.5" r="4" fill="#2d3237" stroke="#a8adb2" stroke-width="1.3"/>
<circle cx="949.5" cy="390.1" r="4" fill="#2d3237" stroke="#a8adb2" stroke-width="1.3"/>
<circle cx="1050.2" cy="413.7" r="4" fill="#2d3237" stroke="#a8adb2" stroke-width="1.3"/>
<circle cx="939.5" cy="399.9" r="4" fill="#2d3237" stroke="#a8adb2" stroke-width="1.3"/>
<circle cx="1040.2" cy="423.5" r="4" fill="#2d3237" stroke="#a8adb2" stroke-width="1.3"/>
<circle cx="946.5" cy="410.8" r="4" fill="#2d3237" stroke="#a8adb2" stroke-width="1.3"/>
<circle cx="1047.2" cy="434.4" r="4" fill="#2d3237" stroke="#a8adb2" stroke-width="1.3"/>
<circle cx="946.5" cy="420.7" r="4" fill="#2d3237" stroke="#a8adb2" stroke-width="1.3"/>
<circle cx="1047.2" cy="444.3" r="4" fill="#2d3237" stroke="#a8adb2" stroke-width="1.3"/>
<circle cx="928.5" cy="419.2" r="4" fill="#2d3237" stroke="#a8adb2" stroke-width="1.3"/>
<circle cx="1029.2" cy="442.8" r="4" fill="#2d3237" stroke="#a8adb2" stroke-width="1.3"/>
<circle cx="921.7" cy="427.6" r="4" fill="#2d3237" stroke="#a8adb2" stroke-width="1.3"/>
<circle cx="1022.5" cy="451.2" r="4" fill="#2d3237" stroke="#a8adb2" stroke-width="1.3"/>
<circle cx="913.5" cy="427.5" r="4" fill="#2d3237" stroke="#a8adb2" stroke-width="1.3"/>
<circle cx="1014.2" cy="451.1" r="4" fill="#2d3237" stroke="#a8adb2" stroke-width="1.3"/>
<circle cx="913.5" cy="334.0" r="4" fill="#2d3237" stroke="#a8adb2" stroke-width="1.3"/>
<circle cx="1014.2" cy="357.6" r="4" fill="#2d3237" stroke="#a8adb2" stroke-width="1.3"/>
<circle cx="963.5" cy="326.7" r="4" fill="#2d3237" stroke="#a8adb2" stroke-width="1.3"/>
<circle cx="963.5" cy="472.3" r="4.5" fill="#f4d0cc" stroke="#888" stroke-width="1"/>
</g></svg>
<!-- title bar -->
<div class="a" style="left:0;top:0;width:1915px;height:29px;background:#f3f3f3"></div>
<svg style="left:0;top:0" width="30" height="29" viewBox="0 0 30 29">
  <path d="M4.5 6 Q4.5 4 6.5 4 L18 4 Q19.5 4 19.8 5.5 L21 7 L21 24 L6 24 Q4.5 24 4.5 22.5 Z" fill="#ff6a00"/>
  <path d="M3.2 6 L6 4 L6 19 L3.2 19 Z" fill="#ff9a50"/>
  <path d="M4.5 18 L21 18 L21 24 L6 24 Q4.5 24 4.5 22.5 Z" fill="#9c3a05"/>
  <path d="M10 8 L15.5 8 L15.5 10 L12.2 10 L12.2 12 L15 12 L15 14 L12.2 14 L12.2 16.5 L10 16.5 Z" fill="#fff"/>
  <rect x="9" y="20" width="8" height="2" fill="#f3c9a8" opacity="0.8"/>
</svg>
<div class="t" style="left:29px;top:7px;font-size:15px;color:#838383;letter-spacing:-0.06px">Senza titolo*(1) (Martina tursi) - Autodesk Fusion (Licenza didattica)</div>
<!-- window controls -->
<div class="a" style="left:1765px;top:13px;width:12px;height:1px;background:#555"></div>
<svg style="left:1820px;top:6px" width="18" height="16" viewBox="0 0 18 16">
  <rect x="3.5" y="5.5" width="9" height="9" rx="1.5" fill="none" stroke="#555" stroke-width="1"/>
  <path d="M6 3.5 L13 3.5 Q15 3.5 15 5.5 L15 12" fill="none" stroke="#555" stroke-width="1"/>
</svg>
<svg style="left:1880px;top:6px" width="16" height="16" viewBox="0 0 16 16">
  <path d="M2 2 L14 14 M14 2 L2 14" stroke="#555" stroke-width="1"/>
</svg>
<!-- tab bar -->
<div class="a" style="left:0;top:29px;width:1915px;height:40px;background:#d9d9d9"></div>
<div class="a" style="left:949px;top:34px;width:657px;height:35px;background:#f5f5f5;border-radius:4px 4px 0 0"></div>
<!-- app icons -->
<svg style="left:0;top:29px" width="300" height="39" viewBox="0 29 300 39">
  <g fill="#808080">
    <rect x="11" y="41" width="4" height="4"/><rect x="16.5" y="41" width="4" height="4"/><rect x="22" y="41" width="4" height="4"/>
    <rect x="11" y="46.5" width="4" height="4"/><rect x="16.5" y="46.5" width="4" height="4"/><rect x="22" y="46.5" width="4" height="4"/>
    <rect x="11" y="52" width="4" height="4"/><rect x="16.5" y="52" width="4" height="4"/><rect x="22" y="52" width="4" height="4"/>
    <path d="M52 40 L62 40 L66 44 L66 57 L52 57 Z"/>
    <path d="M74 47 L83 47 L78.5 52.5 Z"/>
    <path d="M104 41 L119 41 L119 56 L105.5 56 L104 54.5 Z"/>
  </g>
  <rect x="108" y="41" width="7" height="4" fill="#d9d9d9"/>
  <rect x="107.5" y="49.5" width="8" height="5" fill="#d9d9d9"/>
  <rect x="109" y="51" width="4" height="2" fill="#808080"/>
  <path d="M62 40 L62 44 L66 44" fill="#d9d9d9"/>
  <path d="M158 53 Q158 46 150 46 L147 46" fill="none" stroke="#808080" stroke-width="2.2"/>
  <path d="M150.5 42.5 L146 46.2 L150.5 50" fill="none" stroke="#808080" stroke-width="2"/>
  <path d="M168 47 L176 47 L172 52 Z" fill="#808080"/>
  <path d="M192 53 Q192 46 200 46 L203 46" fill="none" stroke="#a5a5a5" stroke-width="2.2"/>
  <path d="M199.5 42.5 L204 46.2 L199.5 50" fill="none" stroke="#a5a5a5" stroke-width="2"/>
  <path d="M214 47 L222 47 L218 52 Z" fill="#a5a5a5"/>
  <path d="M256 45 L247 53.5 L249 53.5 L249 62 L263 62 L263 53.5 L265 53.5 L261 49.8 L261 46 L259 46 L259 48 Z" fill="#808080"/>
  <rect x="254" y="56" width="4" height="6" fill="#b5b5b5"/>
</svg>
<!-- tab 1 -->
<svg style="left:552px;top:42px" width="22" height="22" viewBox="0 0 22 22">
  <path d="M11 1 L19.5 5.5 L19.5 15.5 L11 20.5 L2.5 15.5 L2.5 5.5 Z" fill="#ff8a3a"/>
  <path d="M11 10 L19.5 5.5 L19.5 15.5 L11 20.5 Z" fill="#ff6a00"/>
  <path d="M11 1 L19.5 5.5 L11 10 L2.5 5.5 Z" fill="#ffc08a"/>
</svg>
<div class="t" style="left:578px;top:44px;font-size:15px;color:#2e2e2e">Senza titolo</div>
<svg style="left:923px;top:45px" width="14" height="14" viewBox="0 0 14 14"><path d="M1.5 1.5 L12.5 12.5 M12.5 1.5 L1.5 12.5" stroke="#777" stroke-width="1.6"/></svg>
<!-- tab 2 -->
<svg style="left:1203px;top:42px" width="22" height="22" viewBox="0 0 22 22">
  <path d="M11 1 L19.5 5.5 L19.5 15.5 L11 20.5 L2.5 15.5 L2.5 5.5 Z" fill="#ff8a3a"/>
  <path d="M11 10 L19.5 5.5 L19.5 15.5 L11 20.5 Z" fill="#ff6a00"/>
  <path d="M11 1 L19.5 5.5 L11 10 L2.5 5.5 Z" fill="#ffc08a"/>
</svg>
<div class="t" style="left:1229px;top:44px;font-size:15px;color:#2e2e2e">Senza titolo*(1)</div>
<svg style="left:1586px;top:45px" width="14" height="14" viewBox="0 0 14 14"><path d="M1.5 1.5 L12.5 12.5 M12.5 1.5 L1.5 12.5" stroke="#777" stroke-width="1.6"/></svg>
<!-- right icons -->
<svg style="left:1620px;top:29px" width="295" height="39" viewBox="1620 29 295 39">
  <path d="M1640 43 L1640 59.5 M1632 51.2 L1648.5 51.2" stroke="#808080" stroke-width="3.2"/>
  <circle cx="1692.6" cy="48.4" r="8.5" fill="#808080"/>
  <path d="M1687.2 44.4 L1690.3 46.3 L1694 42.6 L1695.6 44.2 L1692.2 47.6 L1693.4 48.8 L1696.7 45.5 L1698.3 47.1 L1695 50.6 Q1696.2 52.3 1695.3 53.6 Q1691 55.3 1688.2 53.2 Q1686 50 1687.2 44.4 Z" fill="#d9d9d9"/>
  <path d="M1685.8 54.6 L1688.8 51.6" stroke="#d9d9d9" stroke-width="1.6"/>
  <circle cx="1733.5" cy="48.5" r="8" fill="none" stroke="#808080" stroke-width="1"/>
  <circle cx="1733.5" cy="48.5" r="6.3" fill="#808080"/>
  <path d="M1733 44.5 L1733 49 L1737 49" fill="none" stroke="#d9d9d9" stroke-width="1.5"/>
  <path d="M1788 54 Q1789 50 1789 47 Q1789 41.5 1794 40.8 L1794 40 L1795 40 L1795 40.8 Q1800 41.5 1800 47 Q1800 50 1801 54 Z" fill="#808080"/>
  <path d="M1791.5 55 L1797.5 55 Q1797 57 1794.5 57 Q1792 57 1791.5 55 Z" fill="#808080"/>
  <circle cx="1798.5" cy="44.5" r="3.6" fill="#ff8a4c"/>
  <circle cx="1836.5" cy="48.5" r="8.5" fill="#808080"/>
  <path d="M1833.5 46 Q1833.5 42.5 1836.5 42.5 Q1839.5 42.5 1839.5 45.5 Q1839.5 47.5 1837.5 48.3 Q1836.5 48.8 1836.5 50.5" fill="none" stroke="#fff" stroke-width="1.8"/>
  <circle cx="1836.5" cy="53.5" r="1.1" fill="#fff"/>
  <circle cx="1888.5" cy="48.5" r="15.5" fill="#fff"/>
</svg>
<div class="t" style="left:1745px;top:42px;font-size:15px;color:#555">1</div>
<div class="t" style="left:1878px;top:43px;font-size:14px;color:#333;letter-spacing:0.3px">MT</div>

<div class="a" style="left:0;top:69px;width:1915px;height:106px;background:#f5f5f5"></div>
<div class="a" style="left:14.5px;top:82px;width:137px;height:76px;border:1px solid #c9c9c9;border-radius:6px"></div>
<div class="t" style="left:40px;top:112px;font-size:13.6px;font-weight:700;color:#3a3a3a;letter-spacing:-0.1px">PROGETTO</div>
<div class="tri" style="left:123px;top:118px;border-top-color:#777"></div>
<!-- tab labels -->
<div class="lbl" style="left:188px;top:76px;letter-spacing:0.05px">SOLIDO</div>
<div class="a" style="left:173px;top:97px;width:86px;height:4px;background:#333"></div>
<div class="lbl" style="left:304px;top:76px;letter-spacing:0px">SUPERFICIE</div>
<div class="lbl" style="left:451px;top:76px;letter-spacing:0.1px">MESH</div>
<div class="lbl" style="left:549px;top:76px;letter-spacing:0.3px">LAMIERA</div>
<div class="lbl" style="left:671px;top:76px;letter-spacing:0.05px">PLASTICA</div>
<div class="lbl" style="left:800px;top:76px;letter-spacing:0.4px">UTILITÀ</div>
<!-- group labels -->
<div class="lbl" style="left:328px;top:152px;letter-spacing:-0.9px">CREA</div><div class="tri" style="left:368.5px;top:156px"></div>
<div class="lbl" style="left:672px;top:152px;letter-spacing:0.3px">MODIFICA</div><div class="tri" style="left:748px;top:156px"></div>
<div class="lbl" style="left:901px;top:152px;letter-spacing:0.1px">CONFIGURA</div><div class="tri" style="left:989.5px;top:156px"></div>
<div class="lbl" style="left:1031px;top:152px;letter-spacing:0px">COSTRUZIONE</div><div class="tri" style="left:1136.5px;top:156px"></div>
<div class="lbl" style="left:1183px;top:152px;letter-spacing:0.05px">VERIFICA</div><div class="tri" style="left:1253.5px;top:156px"></div>
<div class="lbl" style="left:1325px;top:152px;letter-spacing:0.3px">INSERISCI</div><div class="tri" style="left:1403px;top:156px"></div>
<div class="lbl" style="left:1477px;top:152px;letter-spacing:0.05px">ASSEMBLA</div><div class="tri" style="left:1558.5px;top:156px"></div>
<div class="lbl" style="left:1601px;top:152px;letter-spacing:0.05px">SELEZIONA</div><div class="tri" style="left:1685.5px;top:156px"></div>
<div class="sep" style="left:546px"></div>
<div class="sep" style="left:882px"></div>
<div class="sep" style="left:1012px"></div>
<div class="sep" style="left:1161px"></div>
<div class="sep" style="left:1282px"></div>
<div class="sep" style="left:1457px"></div>
<div class="sep" style="left:1581px"></div>
<svg style="left:0;top:0" width="1915" height="175" viewBox="0 0 1915 175">
 <!-- 1 sketch -->
 <g>
  <path d="M175.3 104.6 L203.8 104.6 M172.7 107.2 L172.7 135.7 M175.3 138.4 L193.6 138.4 M206.4 107.2 L206.4 119.4" stroke="#6a6a6a" stroke-width="1.2"/>
  <g fill="#555"><rect x="171.2" y="103.1" width="3.1" height="3.1"/><rect x="204.8" y="103.1" width="3.1" height="3.1"/><rect x="171.2" y="136.8" width="3.1" height="3.1"/></g>
  <path d="M183.4 113.8 L196.3 113.8 M181.3 115.8 L181.3 128.4" stroke="#6a6a6a" stroke-width="1.1"/>
  <path d="M198.2 115.8 Q197.5 129.5 183 130.2" fill="none" stroke="#444" stroke-width="1.2"/>
  <g fill="#555"><rect x="179.8" y="112.3" width="3" height="3"/><rect x="196.7" y="112.3" width="3" height="3"/><rect x="179.8" y="128.6" width="3" height="3"/></g>
  <path d="M201.8 125.5 L201.8 143 M193.6 134.2 L211 134.2" stroke="#22aa44" stroke-width="4"/>
 </g>
<!-- 2 extrude -->
 <g>
  <path d="M226 136 L256 136 L262 131 L262 139 L256 143 L226 143 Z" fill="#bdbdbd"/>
  <path d="M226 111 L234 103 L256 103 L256 135 L226 135 Z" fill="#6aaee8"/>
  <path d="M226 111 L234 103 L256 103 L248 111 Z" fill="#9dd0f7"/>
  <path d="M248 111 L256 103 L256 129 L248 136 Z" fill="#4a8fce"/>
  <path d="M261 134 L261 106 M258 109 L261 104.5 L264 109" stroke="#333" stroke-width="1.3" fill="none"/>
 </g>
 <!-- 3 revolve -->
 <g>
  <path d="M279 122 Q298 107 318 120.5 L312 126 Q299 117 286 127 Z" fill="#8fcbf5"/>
  <path d="M286 127 Q299 117 312 126 L312 138 Q299 129 286 139 Z" fill="#6aaee8"/>
  <path d="M279 122 L286 127 L286 139 L279 133 Z" fill="#4a8fce"/>
  <path d="M312 125.5 L318.5 120.5 L318.5 132 L312 138 Z" fill="#f5f5f5" stroke="#555" stroke-width="1"/>
  <path d="M315.5 112 Q299 101 284 109" fill="none" stroke="#333" stroke-width="1.1"/>
  <path d="M280 111 L286 106 L286.5 112.5 Z" fill="#333"/>
 </g>
<!-- 4 hole -->
 <g>
  <path d="M333 113 L343 103 L373 103 L373 133 L363 143 L333 143 Z" fill="#dcdcdc" stroke="#666" stroke-width="1"/>
  <path d="M343 103 L373 103 L363 113 L333 113 Z" fill="#efefef" stroke="#666" stroke-width="1"/>
  <path d="M363 113 L373 103 L373 133 L363 143 Z" fill="#c4c4c4" stroke="#666" stroke-width="1"/>
  <circle cx="348.5" cy="128" r="10.5" fill="#f5f5f5" stroke="#555" stroke-width="1"/>
  <circle cx="348.5" cy="128" r="8.5" fill="#6aaee8"/>
  <path d="M349 119.5 Q350 127 357 128 Q357 120 349 119.5 Z" fill="#f5f5f5"/>
 </g>
 <!-- 5 pattern -->
 <g>
  <path d="M391 109 L413 109 M390 110 L390 134 M391 135 L413 135" stroke="#555" stroke-width="1"/>
  <rect x="386" y="105" width="8" height="8" fill="#fff" stroke="#555" stroke-width="1"/>
  <rect x="412" y="105" width="9" height="9" fill="#6aaee8"/>
  <rect x="386" y="131" width="9" height="9" fill="#6aaee8"/>
  <rect x="412" y="131" width="9" height="9" fill="#6aaee8"/>
 </g>
 <!-- 6 form -->
 <g>
  <path d="M441 118 Q441 113 446 108 L450 104.5 Q452 103.5 455 103.5 L471 103.5 Q477 103.5 477 110 L477 132 Q477 136 474 139 L470 142 L447 142 Q441 142 441 136 Z" fill="#e6d8fb" stroke="#7f6a9a" stroke-width="1"/>
  <path d="M445.5 112 L452 105.5 L472 105.5 L466 112 Z" fill="#c9a4f8"/>
  <rect x="443.5" y="113" width="22.5" height="27" rx="5" fill="#ab84e8"/>
  <path d="M467.5 113 L475 106.5 L475.5 131 L467.5 138.5 Z" fill="#8e62d0"/>
  <path d="M455.5 104 Q452.5 112 454 141 M441.5 126.5 Q455 124.5 466 126.5" stroke="#7a5ca8" stroke-width="0.9" fill="none"/>
  <path d="M470 123 L470 143 M460 133.5 L480 133.5" stroke="#22aa44" stroke-width="4"/>
 </g>
 <!-- 7 Y shape -->
 <g>
  <path d="M499 109 Q508 117 510.5 124 Q511.5 130 509.5 136" fill="none" stroke="#5aa8e8" stroke-width="3.8"/>
  <path d="M526 113 Q517.5 117 515 124 Q514 130 516 136" fill="none" stroke="#5aa8e8" stroke-width="3.8"/>
  <path d="M501 111 Q512 118.5 525 113" fill="none" stroke="#5aa8e8" stroke-width="2.6"/>
  <path d="M509.8 119.5 L515.6 119.5 L512.6 126 Z" fill="#f5f5f5"/>
  <circle cx="512" cy="136" r="6.9" fill="#5aa8e8"/>
  <circle cx="512" cy="136" r="4.7" fill="#f4f4f4" stroke="#666" stroke-width="1.1"/>
  <circle cx="512" cy="136" r="1.9" fill="none" stroke="#666" stroke-width="1"/>
  <rect x="494.5" y="103.5" width="8" height="8" fill="#f0f0f0" stroke="#666" stroke-width="1.1"/>
  <path d="M522.7 110 L528 106 L533.4 113.5 L527.7 116.8 Z" fill="#f0f0f0" stroke="#666" stroke-width="1.1"/>
 </g>
<!-- 8 press pull -->
 <g>
  <path d="M562 108 L567 103 L575 103 L575 143 L562 143 Z" fill="#dcdcdc" stroke="#666" stroke-width="1"/>
  <path d="M570 108 L575 103 L589 103 L589 137 L583 143 L570 143 Z" fill="#6aaee8"/>
  <path d="M583 108 L589 103 L589 137 L583 143 Z" fill="#4a8fce"/>
  <path d="M586 122 L596 122 M593 119 L597 122 L593 125" stroke="#333" stroke-width="1.5" fill="none"/>
 </g>
 <!-- 9 fillet -->
 <g>
  <path d="M615 113 L625 103 L637 103 Q655 108 655 125 L655 133 L645 143 L615 143 Z" fill="#dcdcdc" stroke="#666" stroke-width="1"/>
  <path d="M637 103 Q655 108 655 125 L645 133 Q645 115 628 113 Z" fill="#5aa6e6"/>
  <path d="M645 133 L655 125 L655 133 L645 143 Z" fill="#c4c4c4"/>
 </g>
 <!-- 10 shell -->
 <g>
  <path d="M669 113 L679 103 L709 103 L709 133 L699 143 L669 143 Z" fill="#dcdcdc" stroke="#666" stroke-width="1"/>
  <path d="M699 113 L709 103 L709 133 L699 143 Z" fill="#c4c4c4" stroke="#666" stroke-width="1"/>
  <rect x="673" y="117" width="22" height="22" fill="#f5f5f5"/>
  <path d="M675 119 L681 119 L681 131 L693 131 L693 137 L675 137 Z" fill="#4a8fce"/>
  <path d="M681 131 L693 131 L693 137 L681 137 Z" fill="#8cc6f2"/>
 </g>
 <!-- 11 combine -->
 <g>
  <path d="M742 110 L748 103 L763 103 L763 125 L757 131 L742 131 Z" fill="#6aaee8"/>
  <path d="M742 110 L748 103 L763 103 L757 110 Z" fill="#9dd0f7"/>
  <path d="M722 125 L728 118 L742 118 L742 143 L722 143 Z" fill="#6aaee8"/>
  <path d="M742 131 L757 131 L757 137 L751 143 L742 143 Z" fill="#4a8fce"/>
  <path d="M757 110 L763 103 L763 125 L757 131 Z" fill="#4a8fce"/>
 </g>
 <!-- 12 offset plane split -->
 <g>
  <path d="M778 125 L817 125 L817 137 L811 142 L778 142 Z" fill="#dcdcdc" stroke="#666" stroke-width="1"/>
  <path d="M778 110 L784 103 L813 103 L813 118 L778 118 Z" fill="#6aaee8"/>
  <path d="M806 110 L813 103 L813 118 L806 122 Z" fill="#4a8fce"/>
  <path d="M776 123 L807 123 L817 116" stroke="#3a94e0" stroke-width="1.5" fill="none"/>
 </g>
 <!-- 13 move -->
 <g fill="#222">
  <path d="M850 104 L844 111 L848.5 111 L848.5 121 L838.5 121 L838.5 116.5 L831 123 L838.5 129.5 L838.5 125 L848.5 125 L848.5 135 L844 135 L850 142 L856 135 L851.5 135 L851.5 125 L861.5 125 L861.5 129.5 L869 123 L861.5 116.5 L861.5 121 L851.5 121 L851.5 111 L856 111 Z"/>
 </g>
 <!-- 14 configura box -->
 <g>
  <path d="M901 108 L906 103 L935 103 L935 133 L901 133 Z" fill="#e6e6e6" stroke="#777" stroke-width="1"/>
  <path d="M930 108 L935 103 L935 133 L930 137 Z" fill="#c8c8c8"/>
  <path d="M924 131 L940 131 M924 138 L940 138 M932 134 L932 142" stroke="#555" stroke-width="2"/>
  <rect x="920.5" y="127" width="2" height="7" fill="#2a8ee0"/>
 </g>
 <!-- 15 table -->
 <g>
  <rect x="955" y="103" width="33" height="37" fill="#f5f5f5" stroke="#666" stroke-width="1"/>
  <rect x="955" y="103" width="33" height="5" fill="#666"/>
  <path d="M955 116 L988 116 M955 124 L988 124 M955 132 L975 132 M964 108 L964 140 M975 108 L975 128" stroke="#666" stroke-width="1"/>
  <path d="M978 132 L995 132 M978 139 L995 139 M986 135 L986 143" stroke="#555" stroke-width="2"/>
  <rect x="981.5" y="128" width="2" height="7" fill="#2a8ee0"/>
 </g>
 <!-- 16 plane -->
 <g>
  <path d="M1069 113 L1078 103 L1078 133 L1069 142 Z" fill="#dcdcdc" stroke="#666" stroke-width="1"/>
  <path d="M1078 103 L1090 103 L1090 133 L1078 142 Z" fill="#d0d0d0" stroke="#666" stroke-width="1"/>
  <path d="M1080 112 L1090 103 L1090 132 L1080 141 Z" fill="#5fbf7b"/>
  <path d="M1096 111 L1106 103 L1106 131 L1096 140 Z" fill="#e29c6b"/>
 </g>
 <!-- 17 ruler -->
 <g>
  <rect x="1178" y="125" width="35" height="8" fill="#f4a81e"/>
  <path d="M1182 125 L1182 128 M1186 125 L1186 127 M1190 125 L1190 128 M1194 125 L1194 127 M1198 125 L1198 128 M1202 125 L1202 127 M1206 125 L1206 128" stroke="#a86a00" stroke-width="0.8"/>
  <path d="M1179 113 L1179 123 M1212 113 L1212 123 M1180 118 L1211 118" stroke="#444" stroke-width="1"/>
  <path d="M1180 118 L1184 115.5 L1184 120.5 Z M1211 118 L1207 115.5 L1207 120.5 Z" fill="#444"/>
 </g>
 <!-- 18 section -->
 <g>
  <rect x="1237" y="106" width="10" height="14" fill="#a9d2f2" stroke="#4a9de0" stroke-width="1"/>
  <rect x="1237" y="120" width="10" height="15" fill="#a9d2f2" stroke="#4a9de0" stroke-width="1"/>
  <rect x="1247" y="108" width="18" height="27" fill="none" stroke="#888" stroke-width="1"/>
  <path d="M1247 121.5 L1265 121.5" stroke="#888" stroke-width="1"/>
  <path d="M1236 104 L1232 104 L1232 140 L1236 140 M1247 104 L1247 140" stroke="#3a94e0" stroke-width="1.3" fill="none"/>
 </g>
 <!-- 19 derive -->
 <g>
  <path d="M1305 109 L1310 104 L1336 104 L1336 134 L1331 139 L1305 139 Z" fill="#ebebeb" stroke="#666" stroke-width="1"/>
  <path d="M1331 109 L1336 104 L1336 134 L1331 139 Z" fill="#d4d4d4"/>
  <path d="M1300 134 Q1303 126 1312 125 L1312 121 L1318 127 L1312 133 L1312 129 Q1305 129 1300 134 Z" fill="#333"/>
 </g>
 <!-- 20 image -->
 <g>
  <rect x="1352" y="104" width="36" height="36" fill="#8fcfff"/>
  <path d="M1352 126 Q1358 117 1364 124 Q1369 130 1375 123 Q1382 115 1388 127 L1388 140 L1352 140 Z" fill="#3d8fd1"/>
  <circle cx="1378" cy="114" r="3.5" fill="#fff3b0"/>
 </g>
 <!-- 21 mesh insert -->
 <g>
  <path d="M1409 115 L1425 109 L1441 115 L1441 136 L1425 143 L1409 136 Z" fill="#d9b95c" stroke="#a8893a" stroke-width="1"/>
  <path d="M1409 115 L1425 122 L1441 115 M1425 122 L1425 143 M1409 125 L1441 130 M1417 112 L1433 140 M1409 136 L1441 120" stroke="#a8893a" stroke-width="0.8" fill="none"/>
  <path d="M1404 107 L1418 107 L1418 103 L1427 109 L1418 115 L1418 111 L1404 111 Z" fill="#1e88e5"/>
 </g>
 <!-- 22 assembla -->
 <g>
  <path d="M1500 107 L1503 104 L1514 104 L1514 114 L1511 117 L1500 117 Z" fill="#dcdcdc" stroke="#666" stroke-width="1"/>
  <path d="M1516 107 L1521 107 L1521 113" stroke="#333" stroke-width="1" fill="none"/>
  <path d="M1518.5 112 L1523.5 112 L1521 116 Z" fill="#333"/>
  <path d="M1515 121 L1518 118 L1529 118 L1529 128 L1526 131 L1515 131 Z" fill="#5aa6e6" stroke="#3d7fc0" stroke-width="1"/>
  <path d="M1515 132 L1526 132 L1526 143 L1515 143 Z" fill="#dcdcdc" stroke="#666" stroke-width="1"/>
  <path d="M1527 132 L1530 129 L1540 129 L1540 140 L1537 143 L1527 143 Z" fill="#dcdcdc" stroke="#666" stroke-width="1"/>
 </g>
 <!-- 23 select -->
 <g>
  <rect x="1623.5" y="98.5" width="48" height="48" rx="1.5" fill="#ddedf7" stroke="#8ccaee" stroke-width="1"/>
  <rect x="1628" y="103.5" width="34.5" height="26.5" fill="none" stroke="#2eb04a" stroke-width="1.3" stroke-dasharray="3 2"/>
  <path d="M1654.5 121.5 L1654.5 137.5 L1658 134 L1661 140.5 L1663.5 139.5 L1660.5 133 L1665.5 133 Z" fill="#fff" stroke="#333" stroke-width="1"/>
 </g>
</svg>

<div class="a" style="left:5px;top:180px;width:374px;height:30px;background:#f4f4f4;border:1px solid #d6d6d6;border-bottom:2px solid #d0d0d0"></div>
<svg style="left:11px;top:190px" width="14" height="12" viewBox="0 0 14 12"><path d="M2 6 L7 2.5 L7 9.5 Z M7 6 L12 2.5 L12 9.5 Z" fill="#8a8a8a"/></svg>
<div class="t" style="left:41px;top:189px;font-size:14px;color:#3a3a3a;letter-spacing:-0.35px">BROWSER</div>
<div class="a" style="left:353px;top:194px;width:11px;height:2px;background:#777"></div>
<div class="a" style="left:19px;top:218px;width:31px;height:24px;background:#f9f9f9"></div>
<div class="a" style="left:50px;top:218px;width:31px;height:24px;background:#f2f2f2"></div>
<div class="a" style="left:81px;top:218px;width:31px;height:24px;background:#d9d9d9"></div>
<div class="a" style="left:112px;top:218px;width:121px;height:24px;background:#d9d9d9"></div>
<div class="a" style="left:233px;top:218px;width:31px;height:24px;background:#f2f2f2"></div>
<svg style="left:27px;top:227px" width="12" height="8" viewBox="0 0 12 8"><path d="M1 1.5 L6 6.5 L11 1.5" fill="none" stroke="#333" stroke-width="1.5"/></svg>
<svg style="left:53px;top:223px" width="22" height="15" viewBox="0 0 22 15"><path d="M1 7.5 Q11 -5.5 21 7.5 Q11 20.5 1 7.5 Z" fill="#727272"/><circle cx="11" cy="7.5" r="3.6" fill="#f2f2f2"/><circle cx="11" cy="7.5" r="2.1" fill="#727272"/></svg>
<svg style="left:86px;top:221px" width="20" height="20" viewBox="0 0 20 20"><path d="M2 5.5 L5.5 2 L18 2 L18 15 L14.5 18.5 L2 18.5 Z" fill="#e6e6e6" stroke="#6a6a6a" stroke-width="1.1" stroke-linejoin="round"/><path d="M14.5 5.5 L18 2 L18 15 L14.5 18.5 Z" fill="#c2c2c2" stroke="#6a6a6a" stroke-width="1"/><path d="M2 5.5 L14.5 5.5" stroke="#6a6a6a" stroke-width="1"/></svg>
<div class="t" style="left:122px;top:222.5px;font-size:14px;font-weight:700;color:#2e2e2e;letter-spacing:0.6px">(Non salvato)</div>
<svg style="left:238px;top:221px" width="20" height="20" viewBox="0 0 20 20"><circle cx="10" cy="10" r="7.5" fill="#f4f4f4" stroke="#7a7a7a" stroke-width="1.2"/><circle cx="10" cy="10" r="3" fill="#3a3a3a"/></svg>
<div class="a" style="left:41px;top:248px;width:31px;height:24px;background:#f9f9f9"></div>
<div class="a" style="left:72px;top:248px;width:31px;height:24px;background:#f2f2f2"></div>
<div class="a" style="left:103px;top:248px;width:201px;height:24px;background:#f2f2f2"></div>
<svg style="left:49px;top:257px" width="12" height="8" viewBox="0 0 12 8"><path d="M1 1.5 L6 6.5 L11 1.5" fill="none" stroke="#333" stroke-width="1.5"/></svg>
<svg style="left:75px;top:250px" width="22" height="22" viewBox="0 0 22 22"><g fill="#7a7a7a"><circle cx="11" cy="11" r="7"/><rect x="9" y="1.5" width="4" height="5" transform="rotate(0 11 11)"/><rect x="9" y="1.5" width="4" height="5" transform="rotate(45 11 11)"/><rect x="9" y="1.5" width="4" height="5" transform="rotate(90 11 11)"/><rect x="9" y="1.5" width="4" height="5" transform="rotate(135 11 11)"/><rect x="9" y="1.5" width="4" height="5" transform="rotate(180 11 11)"/><rect x="9" y="1.5" width="4" height="5" transform="rotate(225 11 11)"/><rect x="9" y="1.5" width="4" height="5" transform="rotate(270 11 11)"/><rect x="9" y="1.5" width="4" height="5" transform="rotate(315 11 11)"/></g><circle cx="11" cy="11" r="3.3" fill="#f2f2f2"/></svg>
<div class="bt" style="left:114px;top:252.5px;letter-spacing:1.05px">Impostazioni documento</div>
<div class="a" style="left:95px;top:278px;width:31px;height:24px;background:#f2f2f2"></div>
<div class="a" style="left:126px;top:278px;width:111px;height:24px;background:#f2f2f2"></div>
<svg style="left:99px;top:280px" width="20" height="22" viewBox="0 0 20 22"><path d="M3 2 L13 2 L17 6 L17 17 L3 17 Z" fill="#e8eaf0" stroke="#666" stroke-width="1"/><path d="M13 2 L13 6 L17 6" fill="none" stroke="#666" stroke-width="1"/><rect x="1.5" y="16.5" width="17" height="4" fill="#e8a800"/><path d="M4 16.5 L4 18 M7 16.5 L7 18 M10 16.5 L10 18 M13 16.5 L13 18 M16 16.5 L16 18" stroke="#8a6400" stroke-width="0.7"/></svg>
<div class="bt" style="left:137px;top:282.5px;letter-spacing:0.72px">Unità: mm, g</div>
<div class="a" style="left:95px;top:308px;width:31px;height:24px;background:#f2f2f2"></div>
<div class="a" style="left:126px;top:308px;width:176px;height:24px;background:#f2f2f2"></div>
<svg style="left:100px;top:311px" width="20" height="20" viewBox="0 0 20 20"><path d="M2 5.5 L5.5 2 L18 2 L18 15 L14.5 18.5 L2 18.5 Z" fill="#e6e6e6" stroke="#6a6a6a" stroke-width="1.1" stroke-linejoin="round"/><path d="M14.5 5.5 L18 2 L18 15 L14.5 18.5 Z" fill="#c2c2c2" stroke="#6a6a6a" stroke-width="1"/><path d="M2 5.5 L14.5 5.5" stroke="#6a6a6a" stroke-width="1"/></svg>
<div class="bt" style="left:137px;top:312.5px;letter-spacing:0.9px">Progettazione di parti</div>
<div class="a" style="left:41px;top:338px;width:31px;height:24px;background:#f9f9f9"></div>
<div class="a" style="left:72px;top:338px;width:31px;height:24px;background:#f2f2f2"></div>
<div class="a" style="left:103px;top:338px;width:132px;height:24px;background:#f2f2f2"></div>
<svg style="left:51px;top:345px" width="8" height="12" viewBox="0 0 8 12"><path d="M1.5 1 L6.5 6 L1.5 11" fill="none" stroke="#444" stroke-width="1.5"/></svg>
<svg style="left:76px;top:342px" width="20" height="17" viewBox="0 0 20 17"><path d="M1 2 L7 2 L8.5 4 L19 4 L19 16 L1 16 Z" fill="#f6f6f6" stroke="#6a6a6a" stroke-width="1.1"/><path d="M1 5.5 L19 5.5" stroke="#6a6a6a" stroke-width="1"/></svg>
<div class="bt" style="left:114px;top:342.5px;letter-spacing:0.77px">Viste con nome</div>
<div class="a" style="left:41px;top:368px;width:31px;height:24px;background:#f9f9f9"></div>
<div class="a" style="left:72px;top:368px;width:31px;height:24px;background:#f2f2f2"></div>
<div class="a" style="left:103px;top:368px;width:31px;height:24px;background:#f2f2f2"></div>
<div class="a" style="left:134px;top:368px;width:77px;height:24px;background:#f2f2f2"></div>
<svg style="left:51px;top:375px" width="8" height="12" viewBox="0 0 8 12"><path d="M1.5 1 L6.5 6 L1.5 11" fill="none" stroke="#444" stroke-width="1.5"/></svg>
<svg style="left:75px;top:372px" width="22" height="16" viewBox="0 0 22 16"><path d="M1.5 8 Q11 -1 20.5 8 Q11 17 1.5 8 Z" fill="none" stroke="#777" stroke-width="1.2"/><circle cx="11" cy="8" r="3" fill="none" stroke="#777" stroke-width="1.2"/><path d="M4 1 L17 15" stroke="#777" stroke-width="1.4"/></svg>
<svg style="left:108px;top:372px" width="20" height="17" viewBox="0 0 20 17"><path d="M1 2 L7 2 L8.5 4 L19 4 L19 16 L1 16 Z" fill="#f6f6f6" stroke="#6a6a6a" stroke-width="1.1"/><path d="M1 5.5 L19 5.5" stroke="#6a6a6a" stroke-width="1"/></svg>
<div class="bt" style="left:145px;top:372.5px;letter-spacing:0.85px">Origine</div>
<div class="a" style="left:41px;top:398px;width:31px;height:24px;background:#f9f9f9"></div>
<div class="a" style="left:72px;top:398px;width:31px;height:24px;background:#f2f2f2"></div>
<div class="a" style="left:103px;top:398px;width:31px;height:24px;background:#f2f2f2"></div>
<div class="a" style="left:134px;top:398px;width:62px;height:24px;background:#f2f2f2"></div>
<svg style="left:51px;top:405px" width="8" height="12" viewBox="0 0 8 12"><path d="M1.5 1 L6.5 6 L1.5 11" fill="none" stroke="#444" stroke-width="1.5"/></svg>
<svg style="left:75px;top:403px" width="22" height="15" viewBox="0 0 22 15"><path d="M1 7.5 Q11 -5.5 21 7.5 Q11 20.5 1 7.5 Z" fill="#727272"/><circle cx="11" cy="7.5" r="3.6" fill="#f2f2f2"/><circle cx="11" cy="7.5" r="2.1" fill="#727272"/></svg>
<svg style="left:108px;top:402px" width="20" height="17" viewBox="0 0 20 17"><path d="M1 2 L7 2 L8.5 4 L19 4 L19 16 L1 16 Z" fill="#f6f6f6" stroke="#6a6a6a" stroke-width="1.1"/><path d="M1 5.5 L19 5.5" stroke="#6a6a6a" stroke-width="1"/></svg>
<div class="bt" style="left:145px;top:402.5px;letter-spacing:0.6px">Corpi</div>
<div class="a" style="left:41px;top:428px;width:31px;height:24px;background:#f9f9f9"></div>
<div class="a" style="left:72px;top:428px;width:31px;height:24px;background:#f2f2f2"></div>
<div class="a" style="left:103px;top:428px;width:31px;height:24px;background:#f2f2f2"></div>
<div class="a" style="left:134px;top:428px;width:72px;height:24px;background:#f2f2f2"></div>
<svg style="left:49px;top:437px" width="12" height="8" viewBox="0 0 12 8"><path d="M1 1.5 L6 6.5 L11 1.5" fill="none" stroke="#333" stroke-width="1.5"/></svg>
<svg style="left:75px;top:433px" width="22" height="15" viewBox="0 0 22 15"><path d="M1 7.5 Q11 -5.5 21 7.5 Q11 20.5 1 7.5 Z" fill="#727272"/><circle cx="11" cy="7.5" r="3.6" fill="#f2f2f2"/><circle cx="11" cy="7.5" r="2.1" fill="#727272"/></svg>
<svg style="left:108px;top:432px" width="20" height="17" viewBox="0 0 20 17"><path d="M1 2 L7 2 L8.5 4 L19 4 L19 16 L1 16 Z" fill="#f6f6f6" stroke="#6a6a6a" stroke-width="1.1"/><path d="M1 5.5 L19 5.5" stroke="#6a6a6a" stroke-width="1"/></svg>
<div class="bt" style="left:145px;top:432.5px;letter-spacing:0.4px">Schizzi</div>
<div class="a" style="left:95px;top:458px;width:31px;height:24px;background:#f2f2f2"></div>
<div class="a" style="left:126px;top:458px;width:31px;height:24px;background:#f2f2f2"></div>
<div class="a" style="left:157px;top:458px;width:87px;height:24px;background:#f2f2f2"></div>
<svg style="left:98px;top:463px" width="22" height="15" viewBox="0 0 22 15"><path d="M1 7.5 Q11 -5.5 21 7.5 Q11 20.5 1 7.5 Z" fill="#727272"/><circle cx="11" cy="7.5" r="3.6" fill="#f2f2f2"/><circle cx="11" cy="7.5" r="2.1" fill="#727272"/></svg>
<svg style="left:127px;top:459px" width="24" height="24" viewBox="0 0 24 24"><path d="M4.5 3.5 L15.5 3.5 M3.5 4.5 L3.5 18.5 M4.5 19.5 L11 19.5 M17.5 4.5 L17.5 10" stroke="#6a6a6a" stroke-width="1.2" stroke-dasharray="2.6 1.4"/><g fill="#5a5a5a"><rect x="2" y="2" width="3" height="3"/><rect x="16" y="2" width="3" height="3"/><rect x="2" y="18" width="3" height="3"/></g><path d="M15 14.5 L15 12.8 Q15 10.5 17.5 10.5 Q20 10.5 20 12.8 L20 14.5" fill="none" stroke="#d0343c" stroke-width="1.5"/><rect x="13.5" y="14.2" width="8" height="7.3" fill="#d0343c"/><rect x="16.8" y="16.7" width="1.6" height="1.8" fill="#f6d0d0"/></svg>
<div class="bt" style="left:168px;top:462.5px;font-weight:400;letter-spacing:0.2px;color:#3a3a3a">Schizzo1</div>
<div class="a" style="left:95px;top:488px;width:31px;height:24px;background:#f2f2f2"></div>
<div class="a" style="left:126px;top:488px;width:31px;height:24px;background:#f2f2f2"></div>
<div class="a" style="left:157px;top:488px;width:87px;height:24px;background:#f2f2f2"></div>
<svg style="left:98px;top:493px" width="22" height="15" viewBox="0 0 22 15"><path d="M1 7.5 Q11 -5.5 21 7.5 Q11 20.5 1 7.5 Z" fill="#727272"/><circle cx="11" cy="7.5" r="3.6" fill="#f2f2f2"/><circle cx="11" cy="7.5" r="2.1" fill="#727272"/></svg>
<svg style="left:127px;top:489px" width="24" height="24" viewBox="0 0 24 24"><path d="M4.5 3.5 L15.5 3.5 M3.5 4.5 L3.5 18.5 M4.5 19.5 L11 19.5 M17.5 4.5 L17.5 10" stroke="#6a6a6a" stroke-width="1.2" stroke-dasharray="2.6 1.4"/><g fill="#1e88e5"><rect x="2" y="2" width="3" height="3"/><rect x="16" y="2" width="3" height="3"/><rect x="2" y="18" width="3" height="3"/></g><path d="M13 21.5 L14 18.5 L19.5 13 L21.5 15 L16 20.5 Z" fill="#f0a500"/><circle cx="20.7" cy="13.8" r="1.6" fill="#e8303a"/><path d="M12.5 22 L14 18.8 L15.8 20.5 Z" fill="#555"/></svg>
<div class="bt" style="left:168px;top:492.5px;font-weight:400;letter-spacing:0.2px;color:#3a3a3a">Schizzo2</div>
<div class="a" style="left:95px;top:518px;width:31px;height:24px;background:#f2f2f2"></div>
<div class="a" style="left:126px;top:518px;width:31px;height:24px;background:#f2f2f2"></div>
<div class="a" style="left:157px;top:518px;width:87px;height:24px;background:#f2f2f2"></div>
<svg style="left:98px;top:523px" width="22" height="15" viewBox="0 0 22 15"><path d="M1 7.5 Q11 -5.5 21 7.5 Q11 20.5 1 7.5 Z" fill="#727272"/><circle cx="11" cy="7.5" r="3.6" fill="#f2f2f2"/><circle cx="11" cy="7.5" r="2.1" fill="#727272"/></svg>
<svg style="left:127px;top:519px" width="24" height="24" viewBox="0 0 24 24"><path d="M4.5 3.5 L15.5 3.5 M3.5 4.5 L3.5 18.5 M4.5 19.5 L11 19.5 M17.5 4.5 L17.5 10" stroke="#6a6a6a" stroke-width="1.2" stroke-dasharray="2.6 1.4"/><g fill="#5a5a5a"><rect x="2" y="2" width="3" height="3"/><rect x="16" y="2" width="3" height="3"/><rect x="2" y="18" width="3" height="3"/></g><path d="M15 14.5 L15 12.8 Q15 10.5 17.5 10.5 Q20 10.5 20 12.8 L20 14.5" fill="none" stroke="#d0343c" stroke-width="1.5"/><rect x="13.5" y="14.2" width="8" height="7.3" fill="#d0343c"/><rect x="16.8" y="16.7" width="1.6" height="1.8" fill="#f6d0d0"/></svg>
<div class="bt" style="left:168px;top:522.5px;font-weight:400;letter-spacing:0.2px;color:#3a3a3a">Schizzo3</div>
<div class="a" style="left:95px;top:548px;width:31px;height:24px;background:#f2f2f2"></div>
<div class="a" style="left:126px;top:548px;width:31px;height:24px;background:#f2f2f2"></div>
<div class="a" style="left:157px;top:548px;width:87px;height:24px;background:#f2f2f2"></div>
<svg style="left:98px;top:553px" width="22" height="15" viewBox="0 0 22 15"><path d="M1 7.5 Q11 -5.5 21 7.5 Q11 20.5 1 7.5 Z" fill="#727272"/><circle cx="11" cy="7.5" r="3.6" fill="#f2f2f2"/><circle cx="11" cy="7.5" r="2.1" fill="#727272"/></svg>
<svg style="left:127px;top:549px" width="24" height="24" viewBox="0 0 24 24"><path d="M4.5 3.5 L15.5 3.5 M3.5 4.5 L3.5 18.5 M4.5 19.5 L11 19.5 M17.5 4.5 L17.5 10" stroke="#6a6a6a" stroke-width="1.2" stroke-dasharray="2.6 1.4"/><g fill="#5a5a5a"><rect x="2" y="2" width="3" height="3"/><rect x="16" y="2" width="3" height="3"/><rect x="2" y="18" width="3" height="3"/></g><path d="M15 14.5 L15 12.8 Q15 10.5 17.5 10.5 Q20 10.5 20 12.8 L20 14.5" fill="none" stroke="#d0343c" stroke-width="1.5"/><rect x="13.5" y="14.2" width="8" height="7.3" fill="#d0343c"/><rect x="16.8" y="16.7" width="1.6" height="1.8" fill="#f6d0d0"/></svg>
<div class="bt" style="left:168px;top:552.5px;font-weight:400;letter-spacing:0.2px;color:#3a3a3a">Schizzo4</div>
<div class="a" style="left:95px;top:578px;width:31px;height:24px;background:#f2f2f2"></div>
<div class="a" style="left:126px;top:577px;width:118px;height:26px;background:rgba(221,238,248,0.92);border:2px solid #1e9ae0"></div>
<svg style="left:98px;top:583px" width="22" height="15" viewBox="0 0 22 15"><path d="M1 7.5 Q11 -5.5 21 7.5 Q11 20.5 1 7.5 Z" fill="#727272"/><circle cx="11" cy="7.5" r="3.6" fill="#f2f2f2"/><circle cx="11" cy="7.5" r="2.1" fill="#727272"/></svg>
<svg style="left:127px;top:579px" width="24" height="24" viewBox="0 0 24 24"><path d="M4.5 3.5 L15.5 3.5 M3.5 4.5 L3.5 18.5 M4.5 19.5 L11 19.5 M17.5 4.5 L17.5 10" stroke="#6a6a6a" stroke-width="1.2" stroke-dasharray="2.6 1.4"/><g fill="#5a5a5a"><rect x="2" y="2" width="3" height="3"/><rect x="16" y="2" width="3" height="3"/><rect x="2" y="18" width="3" height="3"/></g><path d="M15 14.5 L15 12.8 Q15 10.5 17.5 10.5 Q20 10.5 20 12.8 L20 14.5" fill="none" stroke="#d0343c" stroke-width="1.5"/><rect x="13.5" y="14.2" width="8" height="7.3" fill="#d0343c"/><rect x="16.8" y="16.7" width="1.6" height="1.8" fill="#f6d0d0"/></svg>
<div class="bt" style="left:168px;top:582.5px;font-weight:700;letter-spacing:0.0px;color:#222">Schizzo5</div>
<div class="a" style="left:95px;top:608px;width:31px;height:24px;background:#f2f2f2"></div>
<div class="a" style="left:126px;top:608px;width:31px;height:24px;background:#f2f2f2"></div>
<div class="a" style="left:157px;top:608px;width:87px;height:24px;background:#f2f2f2"></div>
<svg style="left:97px;top:612px" width="22" height="16" viewBox="0 0 22 16"><path d="M1.5 8 Q11 -1 20.5 8 Q11 17 1.5 8 Z" fill="none" stroke="#777" stroke-width="1.2"/><circle cx="11" cy="8" r="3" fill="none" stroke="#777" stroke-width="1.2"/><path d="M4 1 L17 15" stroke="#777" stroke-width="1.4"/></svg>
<svg style="left:127px;top:609px" width="24" height="24" viewBox="0 0 24 24"><path d="M4.5 3.5 L15.5 3.5 M3.5 4.5 L3.5 18.5 M4.5 19.5 L11 19.5 M17.5 4.5 L17.5 10" stroke="#6a6a6a" stroke-width="1.2" stroke-dasharray="2.6 1.4"/><g fill="#1e88e5"><rect x="2" y="2" width="3" height="3"/><rect x="16" y="2" width="3" height="3"/><rect x="2" y="18" width="3" height="3"/></g><path d="M13 21.5 L14 18.5 L19.5 13 L21.5 15 L16 20.5 Z" fill="#f0a500"/><circle cx="20.7" cy="13.8" r="1.6" fill="#e8303a"/><path d="M12.5 22 L14 18.8 L15.8 20.5 Z" fill="#555"/></svg>
<div class="bt" style="left:168px;top:612.5px;font-weight:400;letter-spacing:0.2px;color:#3a3a3a">Schizzo6</div>
<div class="a" style="left:5px;top:921px;width:374px;height:31px;background:#f4f4f4;border:1px solid #e2e2e2;border-bottom:2px solid #d2d2d2"></div>
<div class="t" style="left:40px;top:930px;font-size:14px;color:#3a3a3a;letter-spacing:0.35px">COMMENTI</div>
<svg style="left:350px;top:928px" width="16" height="16" viewBox="0 0 16 16"><path d="M8.5 3.5 L8.5 12.5 M4 8 L13 8" stroke="#777" stroke-width="2.3"/></svg>
<div class="a" style="left:811px;top:920px;width:299px;height:30px;background:#f1f1f1"></div>
<svg style="left:0;top:0" width="1915" height="1010" viewBox="0 0 1915 1010">
<g>
 <ellipse cx="825" cy="936" rx="9.5" ry="4.5" fill="none" stroke="#333" stroke-width="1.2"/>
 <path d="M825 925 L825 946" stroke="#2a94e6" stroke-width="2" stroke-dasharray="3 1.5"/>
 <path d="M831 930 L834.5 931.5 L831.5 934 Z" fill="#333"/>
 <path d="M843 935 L850 935 L846.5 939.5 Z" fill="#777"/>
 <path d="M860 929 L864 925.5 L866 929 L869 926.5 L870 929 L877.5 929 L877.5 944.5 L860 944.5 Z" fill="#888"/>
 <rect x="862" y="931" width="13.5" height="11" fill="#5aa6e6"/>
 <path d="M896 945 Q892 942 890.5 937 L893 935.5 L896 938 L895 927 Q896.5 925.5 897.5 927 L899 934 L899 925 Q900.5 923.5 902 925 L902.5 934 L903.5 926 Q905 924.5 906.5 926 L906 935 L908.5 929 Q910 928 911 929.5 L908 941 Q906 945 903 945 Z" fill="#f4f4f4" stroke="#777" stroke-width="0.9"/>
 <circle cx="929" cy="936.5" r="5.5" fill="#d8d8d8" stroke="#777" stroke-width="1.2"/>
 <path d="M933 940.5 L937 944.5" stroke="#9a6a2a" stroke-width="2"/>
 <path d="M940 924.5 L940 931 M937 927.8 L943 927.8 M937 933 L943 933" stroke="#666" stroke-width="1"/>
 <rect x="955.5" y="925" width="20" height="20" fill="none" stroke="#555" stroke-width="1" stroke-dasharray="2 1.5"/>
 <circle cx="964" cy="933.5" r="7.5" fill="#d8d8d8" stroke="#666" stroke-width="1.2"/>
 <path d="M970 940 L974 944" stroke="#9a6a2a" stroke-width="2"/>
 <path d="M983 935 L990 935 L986.5 939.5 Z" fill="#777"/>
 <rect x="998.5" y="927.5" width="19" height="14" fill="#bdbdbd" stroke="#777" stroke-width="1.2"/>
 <rect x="1001.5" y="930.5" width="13" height="8" fill="#a9a9a9"/>
 <path d="M1008 942 L1008 944 M1003 944.5 L1013 944.5" stroke="#777" stroke-width="1.5"/>
 <path d="M1021 935 L1028 935 L1024.5 939.5 Z" fill="#777"/>
 <rect x="1036.5" y="925.5" width="16" height="16" fill="none" stroke="#777" stroke-width="1.3"/>
 <path d="M1036.5 930.8 L1052.5 930.8 M1036.5 936.2 L1052.5 936.2 M1041.8 925.5 L1041.8 941.5 M1047.2 925.5 L1047.2 941.5" stroke="#777" stroke-width="1.3"/>
 <path d="M1060 935 L1067 935 L1062.5 939.5 Z" fill="#777"/>
 <rect x="1075.5" y="926.5" width="19" height="16" fill="#f4f4f4" stroke="#777" stroke-width="1.3"/>
 <path d="M1085 926.5 L1085 942.5 M1075.5 934.5 L1094.5 934.5" stroke="#777" stroke-width="1.3"/>
 <rect x="1077.5" y="929" width="5" height="3" fill="none" stroke="#999" stroke-width="0.8"/><rect x="1087.5" y="929" width="5" height="3" fill="none" stroke="#999" stroke-width="0.8"/>
 <rect x="1077.5" y="937" width="5" height="3" fill="none" stroke="#999" stroke-width="0.8"/><rect x="1087.5" y="937" width="5" height="3" fill="none" stroke="#999" stroke-width="0.8"/>
 <path d="M1099 935 L1106 935 L1102.5 939.5 Z" fill="#777"/>
 <path d="M1903.5 947 L1894.5 947 A8.8 8.8 0 1 1 1903.5 938.2 Z" fill="#111"/>
 <path d="M1888 942 L1900 934 M1889 944.5 L1901 936.5 M1893 945.5 L1901.5 939.5 M1890 939.5 L1898 933.5" stroke="#fff" stroke-width="0.9"/>
</g>
</svg>
<div class="a" style="left:0;top:958px;width:1915px;height:52px;background:#f3f3f3"></div>
<svg style="left:0;top:0" width="1915" height="1010" viewBox="0 0 1915 1010"><g fill="#7a7a7a">
<rect x="13" y="981" width="2.5" height="16"/><path d="M28 981 L28 997 L16.5 989 Z"/>
<path d="M56 981 L56 997 L44.5 989 Z"/><rect x="57.5" y="985" width="3" height="8"/>
<path d="M76.5 979.5 L91.5 989 L76.5 998.5 Z"/>
<rect x="105.5" y="985" width="3" height="8"/><path d="M110 981 L110 997 L121.5 989 Z"/>
<path d="M138 981 L138 997 L149.5 989 Z"/><rect x="150" y="981" width="2.5" height="16"/>
</g>
<path d="M193 1008.5 L673 1008.5" stroke="#bdbdbd" stroke-width="2"/>
<path d="M193.5 1002 L193.5 1008" stroke="#bdbdbd" stroke-width="2"/>
<path d="M223.4 1002 L223.4 1008" stroke="#bdbdbd" stroke-width="2"/>
<path d="M253.4 1002 L253.4 1008" stroke="#bdbdbd" stroke-width="2"/>
<path d="M283.3 1002 L283.3 1008" stroke="#bdbdbd" stroke-width="2"/>
<path d="M313.3 1002 L313.3 1008" stroke="#bdbdbd" stroke-width="2"/>
<path d="M343.2 1002 L343.2 1008" stroke="#bdbdbd" stroke-width="2"/>
<path d="M373.1 1002 L373.1 1008" stroke="#bdbdbd" stroke-width="2"/>
<path d="M403.1 1002 L403.1 1008" stroke="#bdbdbd" stroke-width="2"/>
<path d="M433.0 1002 L433.0 1008" stroke="#bdbdbd" stroke-width="2"/>
<path d="M463.0 1002 L463.0 1008" stroke="#bdbdbd" stroke-width="2"/>
<path d="M492.9 1002 L492.9 1008" stroke="#bdbdbd" stroke-width="2"/>
<path d="M522.8 1002 L522.8 1008" stroke="#bdbdbd" stroke-width="2"/>
<path d="M552.8 1002 L552.8 1008" stroke="#bdbdbd" stroke-width="2"/>
<path d="M582.7 1002 L582.7 1008" stroke="#bdbdbd" stroke-width="2"/>
<path d="M612.7 1002 L612.7 1008" stroke="#bdbdbd" stroke-width="2"/>
<path d="M642.6 1002 L642.6 1008" stroke="#bdbdbd" stroke-width="2"/>
<path d="M672.5 1002 L672.5 1008" stroke="#bdbdbd" stroke-width="2"/>
<rect x="268.3" y="973.3" width="28.5" height="29" rx="2" fill="#7dc6ec"/><rect x="297.9" y="973.3" width="29.3" height="29" rx="2" fill="#7dc6ec"/>
<path d="M184.5 978 L197.5 978 M183.5 979 L183.5 993 M184.5 994 L189.5 994 M198.5 979 L198.5 986" stroke="#6a6a6a" stroke-width="1.2" stroke-dasharray="2.5 1"/><g fill="#1e88e5"><rect x="182.5" y="977" width="2.4" height="2.4"/><rect x="197.5" y="977" width="2.4" height="2.4"/><rect x="182.5" y="993" width="2.4" height="2.4"/></g><path d="M191.5 997 L192.5 994 L198.5 988 L200.5 990 L194.5 996 Z" fill="#f0a500"/><circle cx="199.8" cy="988.7" r="1.6" fill="#e8303a"/><path d="M191.0 997.5 L192.5 994.3 L194.3 996 Z" fill="#555"/>
<path d="M214.44 978 L227.44 978 M213.44 979 L213.44 993 M214.44 994 L219.44 994 M228.44 979 L228.44 986" stroke="#6a6a6a" stroke-width="1.2" stroke-dasharray="2.5 1"/><g fill="#1e88e5"><rect x="212.44" y="977" width="2.4" height="2.4"/><rect x="227.44" y="977" width="2.4" height="2.4"/><rect x="212.44" y="993" width="2.4" height="2.4"/></g><path d="M221.44 997 L222.44 994 L228.44 988 L230.44 990 L224.44 996 Z" fill="#f0a500"/><circle cx="229.74" cy="988.7" r="1.6" fill="#e8303a"/><path d="M220.94 997.5 L222.44 994.3 L224.24 996 Z" fill="#555"/>
<path d="M244.38 978 L257.38 978 M243.38 979 L243.38 993 M244.38 994 L249.38 994 M258.38 979 L258.38 986" stroke="#6a6a6a" stroke-width="1.2" stroke-dasharray="2.5 1"/><g fill="#1e88e5"><rect x="242.38" y="977" width="2.4" height="2.4"/><rect x="257.38" y="977" width="2.4" height="2.4"/><rect x="242.38" y="993" width="2.4" height="2.4"/></g><path d="M251.38 997 L252.38 994 L258.38 988 L260.38 990 L254.38 996 Z" fill="#f0a500"/><circle cx="259.68" cy="988.7" r="1.6" fill="#e8303a"/><path d="M250.88 997.5 L252.38 994.3 L254.18 996 Z" fill="#555"/>
<path d="M274.32 978 L287.32 978 M273.32 979 L273.32 993 M274.32 994 L279.32 994 M288.32 979 L288.32 986" stroke="#6a6a6a" stroke-width="1.2" stroke-dasharray="2.5 1"/><g fill="#1e88e5"><rect x="272.32" y="977" width="2.4" height="2.4"/><rect x="287.32" y="977" width="2.4" height="2.4"/><rect x="272.32" y="993" width="2.4" height="2.4"/></g><path d="M281.32 997 L282.32 994 L288.32 988 L290.32 990 L284.32 996 Z" fill="#f0a500"/><circle cx="289.62" cy="988.7" r="1.6" fill="#e8303a"/><path d="M280.82 997.5 L282.32 994.3 L284.12 996 Z" fill="#555"/>
<path d="M304.26 978 L317.26 978 M303.26 979 L303.26 993 M304.26 994 L309.26 994 M318.26 979 L318.26 986" stroke="#6a6a6a" stroke-width="1.2" stroke-dasharray="2.5 1"/><g fill="#1e88e5"><rect x="302.26" y="977" width="2.4" height="2.4"/><rect x="317.26" y="977" width="2.4" height="2.4"/><rect x="302.26" y="993" width="2.4" height="2.4"/></g><path d="M311.26 997 L312.26 994 L318.26 988 L320.26 990 L314.26 996 Z" fill="#f0a500"/><circle cx="319.56" cy="988.7" r="1.6" fill="#e8303a"/><path d="M310.76 997.5 L312.26 994.3 L314.06 996 Z" fill="#555"/>
<path d="M334.20000000000005 978 L352.20000000000005 978 L352.20000000000005 997 L344.20000000000005 997 Q342.20000000000005 997 342.20000000000005 993 L342.20000000000005 988 L334.20000000000005 988 Z" fill="#e39a62" stroke="#b8703a" stroke-width="1"/>
<path d="M367.14 981.5 L378.14 981.5 M365.64 983 L365.64 992 M367.14 993.5 L378.14 993.5" stroke="#6a6a6a" stroke-width="1"/><rect x="364.14" y="980" width="4" height="4" fill="#fff" stroke="#666" stroke-width="0.8"/><rect x="378.14" y="980" width="4.5" height="4.5" fill="#5aa6e6"/><rect x="364.14" y="992" width="4.5" height="4.5" fill="#5aa6e6"/><rect x="378.14" y="992" width="4.5" height="4.5" fill="#5aa6e6"/>
<path d="M397.08000000000004 981.5 L408.08000000000004 981.5 M395.58000000000004 983 L395.58000000000004 992 M397.08000000000004 993.5 L408.08000000000004 993.5" stroke="#6a6a6a" stroke-width="1"/><rect x="394.08000000000004" y="980" width="4" height="4" fill="#fff" stroke="#666" stroke-width="0.8"/><rect x="408.08000000000004" y="980" width="4.5" height="4.5" fill="#5aa6e6"/><rect x="394.08000000000004" y="992" width="4.5" height="4.5" fill="#5aa6e6"/><rect x="408.08000000000004" y="992" width="4.5" height="4.5" fill="#5aa6e6"/>
<path d="M424.02 978 L437.02 978 M423.02 979 L423.02 993 M424.02 994 L429.02 994 M438.02 979 L438.02 986" stroke="#6a6a6a" stroke-width="1.2" stroke-dasharray="2.5 1"/><g fill="#1e88e5"><rect x="422.02" y="977" width="2.4" height="2.4"/><rect x="437.02" y="977" width="2.4" height="2.4"/><rect x="422.02" y="993" width="2.4" height="2.4"/></g><path d="M431.02 997 L432.02 994 L438.02 988 L440.02 990 L434.02 996 Z" fill="#f0a500"/><circle cx="439.32" cy="988.7" r="1.6" fill="#e8303a"/><path d="M430.52 997.5 L432.02 994.3 L433.82 996 Z" fill="#555"/>
<path d="M452.96000000000004 994 L466.96000000000004 994 L469.96000000000004 991 L469.96000000000004 996 L466.96000000000004 998 L452.96000000000004 998 Z" fill="#c8c8c8"/><path d="M452.96000000000004 981 L456.96000000000004 977 L469.96000000000004 977 L469.96000000000004 991 L466.96000000000004 994 L452.96000000000004 994 Z" fill="#5aa6e6"/><path d="M466.96000000000004 981 L469.96000000000004 977 L469.96000000000004 991 L466.96000000000004 994 Z" fill="#3d7fc0"/><path d="M472.96000000000004 993 L472.96000000000004 979 M470.96000000000004 981 L472.96000000000004 977.5 L474.96000000000004 981" stroke="#333" stroke-width="1.2" fill="none"/>
<path d="M492.90000000000003 979 L488.90000000000003 983.5 L491.70000000000005 983.5 L491.70000000000005 986.8 L488.40000000000003 986.8 L488.40000000000003 984 L483.90000000000003 988 L488.40000000000003 992 L488.40000000000003 989.2 L491.70000000000005 989.2 L491.70000000000005 992.5 L488.90000000000003 992.5 L492.90000000000003 997 L496.90000000000003 992.5 L494.1 992.5 L494.1 989.2 L497.40000000000003 989.2 L497.40000000000003 992 L501.90000000000003 988 L497.40000000000003 984 L497.40000000000003 986.8 L494.1 986.8 L494.1 983.5 L496.90000000000003 983.5 Z" fill="#222"/>
<rect x="514.84" y="978" width="7" height="11" rx="2" fill="#eee" stroke="#777" stroke-width="1"/><rect x="522.84" y="986" width="7" height="11" rx="2" fill="#eee" stroke="#777" stroke-width="1"/><path d="M517.84 989 L517.84 992 L521.84 992" fill="none" stroke="#2a94e6" stroke-width="1"/>
<path d="M552.78 979 L548.78 983.5 L551.5799999999999 983.5 L551.5799999999999 986.8 L548.28 986.8 L548.28 984 L543.78 988 L548.28 992 L548.28 989.2 L551.5799999999999 989.2 L551.5799999999999 992.5 L548.78 992.5 L552.78 997 L556.78 992.5 L553.98 992.5 L553.98 989.2 L557.28 989.2 L557.28 992 L561.78 988 L557.28 984 L557.28 986.8 L553.98 986.8 L553.98 983.5 L556.78 983.5 Z" fill="#222"/>
<rect x="574.72" y="978" width="7" height="11" rx="2" fill="#eee" stroke="#777" stroke-width="1"/><rect x="582.72" y="986" width="7" height="11" rx="2" fill="#eee" stroke="#777" stroke-width="1"/><path d="M577.72 989 L577.72 992 L581.72 992" fill="none" stroke="#2a94e6" stroke-width="1"/>
<path d="M612.6600000000001 979 L608.6600000000001 983.5 L611.46 983.5 L611.46 986.8 L608.1600000000001 986.8 L608.1600000000001 984 L603.6600000000001 988 L608.1600000000001 992 L608.1600000000001 989.2 L611.46 989.2 L611.46 992.5 L608.6600000000001 992.5 L612.6600000000001 997 L616.6600000000001 992.5 L613.8600000000001 992.5 L613.8600000000001 989.2 L617.1600000000001 989.2 L617.1600000000001 992 L621.6600000000001 988 L617.1600000000001 984 L617.1600000000001 986.8 L613.8600000000001 986.8 L613.8600000000001 983.5 L616.6600000000001 983.5 Z" fill="#222"/>
<rect x="634.6" y="978" width="7" height="11" rx="2" fill="#eee" stroke="#777" stroke-width="1"/><rect x="642.6" y="986" width="7" height="11" rx="2" fill="#eee" stroke="#777" stroke-width="1"/><path d="M637.6 989 L637.6 992 L641.6 992" fill="none" stroke="#2a94e6" stroke-width="1"/>
<path d="M672.54 979 L668.54 983.5 L671.3399999999999 983.5 L671.3399999999999 986.8 L668.04 986.8 L668.04 984 L663.54 988 L668.04 992 L668.04 989.2 L671.3399999999999 989.2 L671.3399999999999 992.5 L668.54 992.5 L672.54 997 L676.54 992.5 L673.74 992.5 L673.74 989.2 L677.04 989.2 L677.04 992 L681.54 988 L677.04 984 L677.04 986.8 L673.74 986.8 L673.74 983.5 L676.54 983.5 Z" fill="#222"/>
<path d="M681 970 L694 970 L694 975 L689.5 980 L689.5 1010 L686 1010 L686 980 L681 975 Z" fill="#333"/>
<g transform="translate(1893.5 989)"><circle r="7" fill="#777"/><rect x="-2" y="-10" width="4" height="5" fill="#777" transform="rotate(0)"/><rect x="-2" y="-10" width="4" height="5" fill="#777" transform="rotate(45)"/><rect x="-2" y="-10" width="4" height="5" fill="#777" transform="rotate(90)"/><rect x="-2" y="-10" width="4" height="5" fill="#777" transform="rotate(135)"/><rect x="-2" y="-10" width="4" height="5" fill="#777" transform="rotate(180)"/><rect x="-2" y="-10" width="4" height="5" fill="#777" transform="rotate(225)"/><rect x="-2" y="-10" width="4" height="5" fill="#777" transform="rotate(270)"/><rect x="-2" y="-10" width="4" height="5" fill="#777" transform="rotate(315)"/><circle r="3.2" fill="#f3f3f3"/></g>
</svg>
<svg style="left:1800px;top:185px" width="115" height="110" viewBox="1800 185 115 110">
<defs><radialGradient id="vcs" cx="0.5" cy="0.5" r="0.5"><stop offset="0" stop-color="#000" stop-opacity="0.16"/><stop offset="1" stop-color="#000" stop-opacity="0"/></radialGradient>
<linearGradient id="vcf" x1="0" y1="0" x2="0" y2="1"><stop offset="0" stop-color="#f6f6f6"/><stop offset="1" stop-color="#e0e0e0"/></linearGradient></defs>
<ellipse cx="1855" cy="274" rx="36" ry="9" fill="url(#vcs)"/>
<path d="M1823 214.3 L1854.3 219.1 L1890.5 215 L1857 211.8 Z" fill="#f4f4f4" stroke="#808080" stroke-width="0.8" stroke-dasharray="3 2"/>
<path d="M1823 214.3 L1854.3 219.1 L1854.3 272 L1824.5 260.8 Z" fill="url(#vcf)" stroke="#808080" stroke-width="0.8" stroke-dasharray="3 2"/>
<path d="M1854.3 219.1 L1890.5 215 L1888.7 261.4 L1854.3 272 Z" fill="url(#vcf)" stroke="#808080" stroke-width="0.8" stroke-dasharray="3 2"/>
<rect x="1848" y="229" width="13" height="33" fill="#dcdde0" opacity="0.7"/>
<path d="M1854.3 219.1 L1854.3 272" stroke="#808080" stroke-width="0.8" stroke-dasharray="3 2"/>
<text transform="translate(1827 246.5) skewY(9)" font-size="16.5" fill="#8d9096" font-family="Liberation Sans" textLength="23" lengthAdjust="spacingAndGlyphs">DESTRA</text>
<text transform="translate(1862 249.5) skewY(-16)" font-size="16" fill="#8d9096" font-family="Liberation Sans" textLength="22" lengthAdjust="spacingAndGlyphs">RETRO</text>
<path d="M1857.7 212 L1857.7 205.5" stroke="#6f6fff" stroke-width="1.6"/>
<text x="1853.5" y="203.5" font-size="12" fill="#6f6fff" font-family="Liberation Sans">Z</text>
<path d="M1818 262.7 L1826 260.8" stroke="#ff6a6a" stroke-width="1.6"/>
<text x="1807.5" y="269" font-size="12" fill="#ff6a6a" font-family="Liberation Sans">X</text>
<path d="M1887 262 L1895 263.8" stroke="#6ae06a" stroke-width="1.6"/>
<text x="1897" y="271" font-size="12" fill="#6ae06a" font-family="Liberation Sans">Y</text>
</svg>
</body></html>
